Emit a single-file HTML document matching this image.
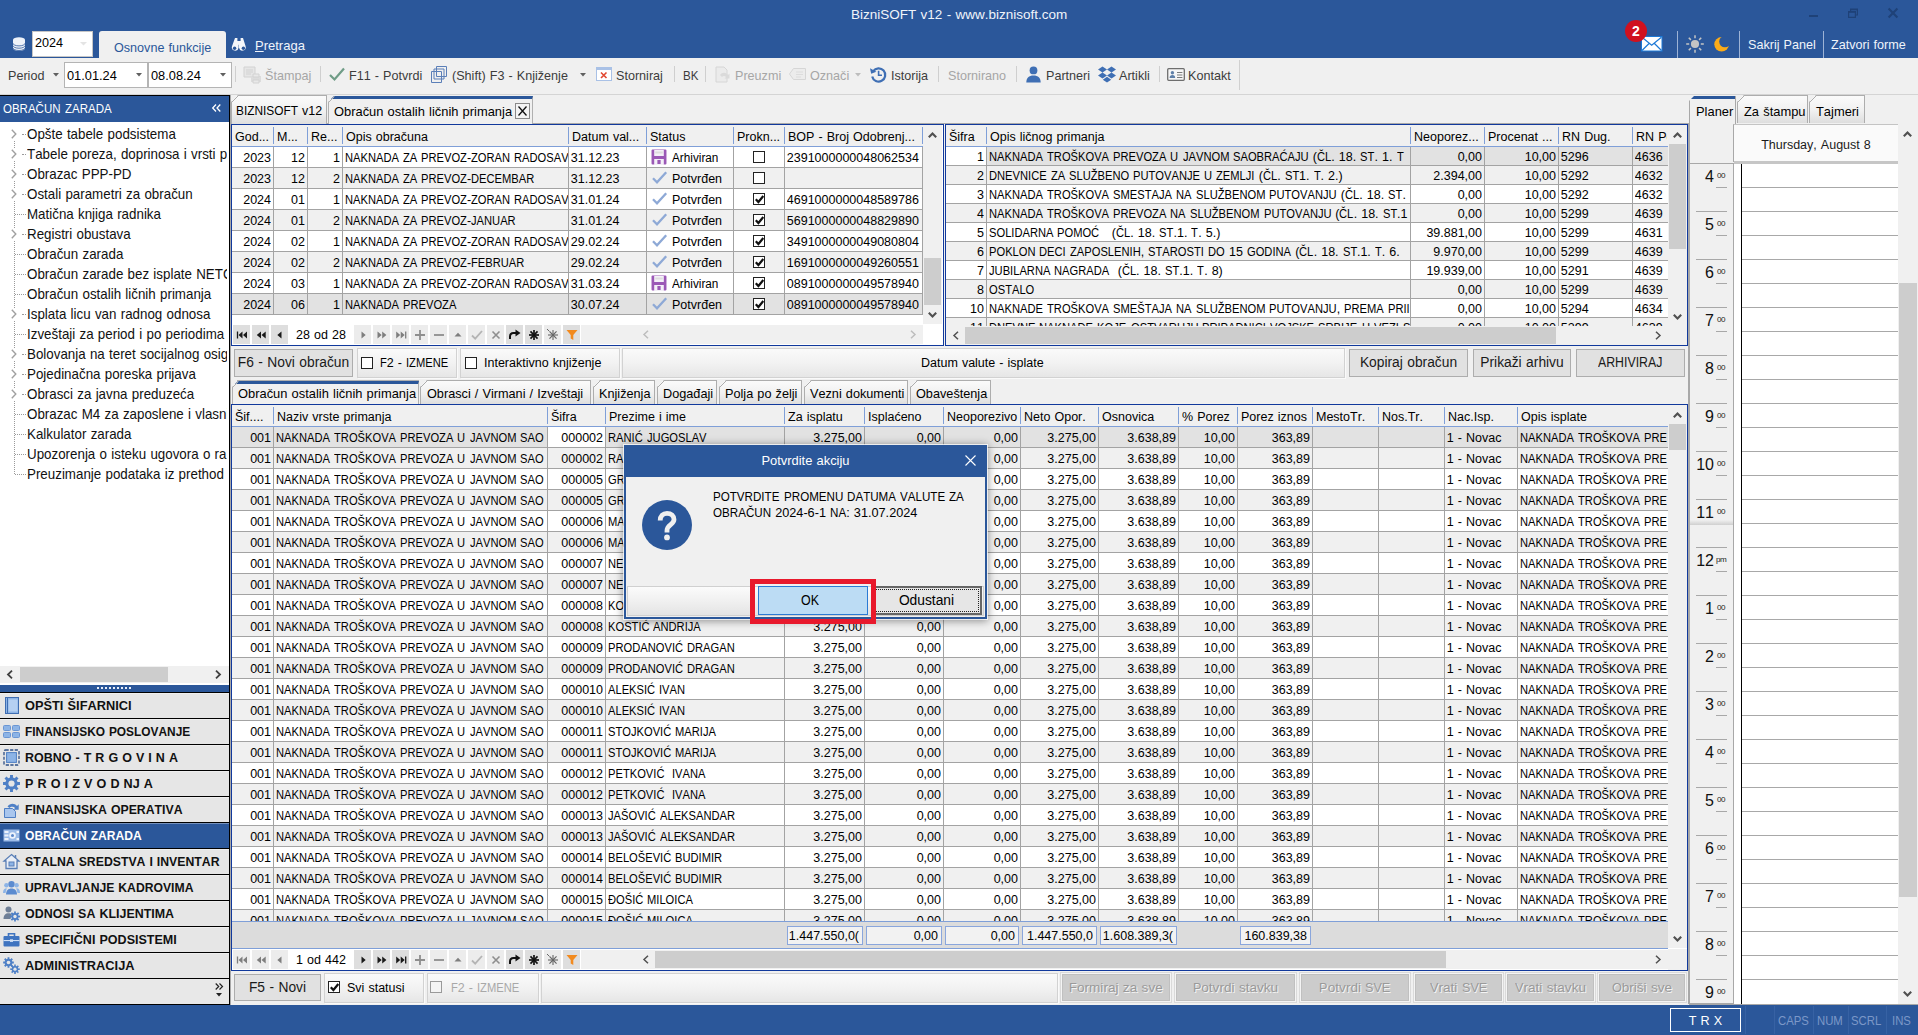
<!DOCTYPE html>
<html><head><meta charset="utf-8"><title>BizniSOFT v12</title><style>
html,body{margin:0;padding:0;}
body{width:1918px;height:1035px;overflow:hidden;background:#f0f0f0;font-family:"Liberation Sans",sans-serif;font-size:12.5px;color:#000;position:relative;font-kerning:none;word-spacing:0.6px;}
div{position:absolute;box-sizing:border-box;white-space:pre;}
.t{line-height:16px;height:16px;}
.w{display:inline-block;position:static;vertical-align:baseline;white-space:pre;}
.v{display:inline-block;position:static;transform-origin:0 50%;white-space:pre;}
.c{overflow:hidden;line-height:20px;}
.r{text-align:right;}
svg{position:absolute;overflow:visible;}
</style></head><body>
<div style="left:0px;top:0px;width:1918px;height:58px;background:#2b579a;"></div>
<div style="left:851px;top:4.92px;line-height:20px;height:20px;font-size:13.5px;color:#f0f4fa;">BizniSOFT v12 - www.biznisoft.com</div>
<div style="left:1809px;top:15px;width:9px;height:2px;background:#1f4278;"></div>
<svg style="left:1848px;top:8px" width="10" height="10" viewBox="0 0 10 10"><path d="M0.600 3.600h6.800v5.800h-6.800z M2.600 3.500v-2.300h6.800v5.800h-2" fill="none" stroke="#1f4278" stroke-width="1.200"/><path d="M0.600 4h6.800 M2.600 1.600h6.800" stroke="#1f4278" stroke-width="1.400"/></svg>
<svg style="left:1888px;top:8px" width="10" height="10" viewBox="0 0 10 10"><path d="M0.600 0.600l8.800 8.800 M9.400 0.600l-8.800 8.800" fill="none" stroke="#1f4278" stroke-width="2.100"/></svg>
<svg style="left:12px;top:37px" width="14" height="14.5" viewBox="0 0 14 14.5"><path d="M1 2.800A6 2.600 0 0 1 13 2.800V11.300A6 2.600 0 0 1 1 11.300Z" fill="#eef2f9"/><path d="M1 6.300A6 2.600 0 0 0 13 6.300M1 8.600A6 2.600 0 0 0 13 8.600M1 10.900A6 2.600 0 0 0 13 10.900" fill="none" stroke="#2b579a" stroke-width="0.800"/></svg>
<div style="left:32px;top:31px;width:61px;height:26px;background:#fff;border:1px solid #c6c6c6;"></div>
<div style="left:35px;top:32.63px;line-height:20px;height:20px;font-size:12.6px;color:#000;">2024</div>
<svg style="left:80px;top:42px" width="7" height="4" viewBox="0 0 7 4"><path d="M0 0h7l-3.5 3.5z" fill="#e4e4e4"/></svg>
<div style="left:99px;top:31px;width:127px;height:28px;background:#f0f0f0;border-radius:3px 3px 0 0;"></div>
<div style="left:114px;top:37.63px;line-height:20px;height:20px;font-size:12.6px;color:#2b579a;">Osnovne funkcije</div>
<svg style="left:231px;top:38px" width="16" height="14" viewBox="0 0 16 14"><path d="M4 0h2.4v3h3.2v-3h2.4l2.6 8.2a3.4 3.4 0 1 1-6.6 1.6v-3h-0.4v3a3.4 3.4 0 1 1-6.6-1.6z" fill="#f4f6fa"/><circle cx="3.6" cy="10.2" r="1.7" fill="#2b579a"/><circle cx="12.4" cy="10.2" r="1.7" fill="#2b579a"/></svg>
<div style="left:255px;top:35.50px;line-height:20px;height:20px;font-size:13px;color:#f0f4fa;"><span style="text-decoration:underline">P</span>retraga</div>
<svg style="left:1640.5px;top:36px" width="21.5" height="15.5" viewBox="0 0 21.5 15.5"><rect x="0.5" y="0.5" width="20.5" height="14.5" fill="#fff" stroke="#1c78d6"/><path d="M1 1.300l9.700 8 9.700-8 M1 14.500l7.300-7.200 M20.500 14.500l-7.300-7.200" fill="none" stroke="#1c78d6" stroke-width="1.200"/></svg>
<div style="left:1625px;top:20px;width:22px;height:22px;border-radius:11px;background:#d0111f;"></div>
<div style="left:1625px;top:21.15px;line-height:20px;height:20px;font-size:14px;color:#fff;width:22px;text-align:center;font-weight:bold;">2</div>
<div style="left:1677px;top:31px;width:1px;height:27px;background:#9db3d6;"></div>
<div style="left:1739px;top:31px;width:1px;height:27px;background:#9db3d6;"></div>
<div style="left:1823px;top:31px;width:1px;height:27px;background:#9db3d6;"></div>
<svg style="left:1686px;top:35px" width="18" height="18" viewBox="0 0 18 18"><circle cx="9" cy="9" r="4.1" fill="#c4c4c4"/><line x1="14.80" y1="9.00" x2="17.80" y2="9.00" stroke="#c4c4c4" stroke-width="1.5"/><line x1="13.10" y1="13.10" x2="15.22" y2="15.22" stroke="#c4c4c4" stroke-width="1.5"/><line x1="9.00" y1="14.80" x2="9.00" y2="17.80" stroke="#c4c4c4" stroke-width="1.5"/><line x1="4.90" y1="13.10" x2="2.78" y2="15.22" stroke="#c4c4c4" stroke-width="1.5"/><line x1="3.20" y1="9.00" x2="0.20" y2="9.00" stroke="#c4c4c4" stroke-width="1.5"/><line x1="4.90" y1="4.90" x2="2.78" y2="2.78" stroke="#c4c4c4" stroke-width="1.5"/><line x1="9.00" y1="3.20" x2="9.00" y2="0.20" stroke="#c4c4c4" stroke-width="1.5"/><line x1="13.10" y1="4.90" x2="15.22" y2="2.78" stroke="#c4c4c4" stroke-width="1.5"/></svg>
<svg style="left:1713px;top:36px" width="18" height="17" viewBox="0 0 18 17"><circle cx="8.600" cy="8.300" r="7.300" fill="#fbab18"/><circle cx="11.900" cy="5.600" r="5.700" fill="#2b579a"/></svg>
<div style="left:1748px;top:35.13px;line-height:20px;height:20px;font-size:12.6px;color:#f0f4fa;">Sakrij Panel</div>
<div style="left:1831px;top:35.13px;line-height:20px;height:20px;font-size:12.6px;color:#f0f4fa;">Zatvori forme</div>
<div style="left:0px;top:58px;width:1918px;height:37px;background:#f0f0f0;border-bottom:1px solid #d4d4d4;"></div>
<div style="left:8px;top:65.63px;line-height:20px;height:20px;font-size:12.6px;color:#3c3c3c;">Period</div>
<svg style="left:53px;top:73px" width="6" height="4" viewBox="0 0 6 4"><path d="M0 0h6l-3 3.4z" fill="#606060"/></svg>
<div style="left:64px;top:62px;width:84px;height:26px;background:#fff;border:1px solid #b4b4b4;"></div>
<div style="left:148px;top:62px;width:84px;height:26px;background:#fff;border:1px solid #b4b4b4;"></div>
<div style="left:67px;top:65.56px;line-height:20px;height:20px;font-size:12.8px;color:#000;">01.01.24</div>
<svg style="left:136px;top:73px" width="6" height="4" viewBox="0 0 6 4"><path d="M0 0h6l-3 3.4z" fill="#606060"/></svg>
<div style="left:151px;top:65.56px;line-height:20px;height:20px;font-size:12.8px;color:#000;">08.08.24</div>
<svg style="left:220px;top:73px" width="6" height="4" viewBox="0 0 6 4"><path d="M0 0h6l-3 3.4z" fill="#606060"/></svg>
<div style="left:235px;top:66px;width:1px;height:16px;background:#cfcfcf;"></div>
<svg style="left:243px;top:66px" width="19" height="18" viewBox="0 0 19 18"><path d="M1 1h11v10h-11z" fill="#e6e6e6" stroke="#d2d2d2"/><path d="M3 4h7M3 6h7M3 8h5" stroke="#d2d2d2"/><path d="M8 10h10v6h-10z" fill="#dcdcdc"/><path d="M10 8h6v3h-6z M10 14h6v3h-6z" fill="#e8e8e8" stroke="#d2d2d2"/></svg>
<div style="left:265px;top:65.63px;line-height:20px;height:20px;font-size:12.6px;color:#a6a6a6;">Štampaj</div>
<div style="left:320px;top:66px;width:1px;height:16px;background:#cfcfcf;"></div>
<svg style="left:329px;top:67px" width="16" height="14" viewBox="0 0 16 14"><path d="M1 8l4.5 4.5L15 1.5" fill="none" stroke="#6f9c86" stroke-width="2.2"/></svg>
<div style="left:349px;top:65.63px;line-height:20px;height:20px;font-size:12.6px;color:#3c3c3c;">F11 - Potvrdi</div>
<svg style="left:431px;top:66px" width="17" height="17" viewBox="0 0 17 17"><path d="M5.5 0.5h10v10h-10z M3 3h10v10h-10z M0.5 5.5h10v11h-10z" fill="#f0f0f0" stroke="#5b7fb8" stroke-width="1"/></svg>
<div style="left:452px;top:65.63px;line-height:20px;height:20px;font-size:12.6px;color:#3c3c3c;">(Shift) F3 - Knjiženje</div>
<svg style="left:580px;top:73px" width="6" height="4" viewBox="0 0 6 4"><path d="M0 0h6l-3 3.4z" fill="#606060"/></svg>
<svg style="left:596px;top:67px" width="16" height="14" viewBox="0 0 16 14"><rect x="0.5" y="0.5" width="15" height="13" fill="#fff" stroke="#a9c1e6"/><rect x="0.5" y="0.5" width="15" height="2.5" fill="#a9c1e6"/><path d="M5 5.5l5.5 5.5M10.5 5.5l-5.5 5.5" stroke="#e2472f" stroke-width="1.6"/></svg>
<div style="left:616px;top:65.63px;line-height:20px;height:20px;font-size:12.6px;color:#3c3c3c;">Storniraj</div>
<div style="left:674px;top:66px;width:1px;height:16px;background:#cfcfcf;"></div>
<div style="left:683px;top:65.63px;line-height:20px;height:20px;font-size:12.6px;color:#3c3c3c;"><span class="w" style="width:15.47px"><span class="v" style="transform:scaleX(0.92)">BK</span></span></div>
<div style="left:705px;top:66px;width:1px;height:16px;background:#cfcfcf;"></div>
<svg style="left:715px;top:66px" width="17" height="17" viewBox="0 0 17 17"><path d="M1 1h8l3 3v12h-11z" fill="#ebebeb" stroke="#d6d6d6"/><path d="M5 9c2-3 6-3 8 0l1.5-1.5v5h-5l1.5-1.5c-1-1.5-3-1.5-4 0z" fill="#dadada"/></svg>
<div style="left:735px;top:65.63px;line-height:20px;height:20px;font-size:12.6px;color:#a6a6a6;">Preuzmi</div>
<svg style="left:789px;top:68px" width="17" height="12" viewBox="0 0 17 12"><path d="M0.5 6l4-5.5h12v11h-12z" fill="#ececec" stroke="#d6d6d6"/><path d="M7 4h7M7 6.5h7M7 9h5" stroke="#dcdcdc"/></svg>
<div style="left:810px;top:65.63px;line-height:20px;height:20px;font-size:12.6px;color:#a6a6a6;">Označi</div>
<svg style="left:855px;top:73px" width="6" height="4" viewBox="0 0 6 4"><path d="M0 0h6l-3 3.4z" fill="#bdbdbd"/></svg>
<svg style="left:870px;top:66px" width="17" height="17" viewBox="0 0 17 17"><path d="M3.2 5.2a6.6 6.6 0 1 1-1 5.2" fill="none" stroke="#3f6fb4" stroke-width="2.2"/><path d="M0 2.2l1.2 5.6 5.2-2z" fill="#3f6fb4"/><path d="M8.6 4.8v4.4h3.4" fill="none" stroke="#3f6fb4" stroke-width="1.6"/></svg>
<div style="left:891px;top:65.63px;line-height:20px;height:20px;font-size:12.6px;color:#3c3c3c;">Istorija</div>
<div style="left:938px;top:66px;width:1px;height:16px;background:#cfcfcf;"></div>
<div style="left:948px;top:65.63px;line-height:20px;height:20px;font-size:12.6px;color:#a6a6a6;">Stornirano</div>
<div style="left:1016px;top:66px;width:1px;height:16px;background:#cfcfcf;"></div>
<svg style="left:1026px;top:66px" width="15" height="17" viewBox="0 0 15 17"><circle cx="7.5" cy="4.4" r="3.9" fill="#3f6fb4"/><path d="M0.3 16.5c0-4.5 2.6-7 7.2-7s7.2 2.5 7.2 7z" fill="#3f6fb4"/></svg>
<div style="left:1046px;top:65.63px;line-height:20px;height:20px;font-size:12.6px;color:#3c3c3c;">Partneri</div>
<svg style="left:1098px;top:66px" width="18" height="17" viewBox="0 0 18 17"><path d="M4.5 0.5l4.5 3-4.5 3-4.5-3z M13.5 0.5l4.5 3-4.5 3-4.5-3z M4.5 6.5l4.5 3-4.5 3-4.5-3z M13.5 6.5l4.5 3-4.5 3-4.5-3z M9 10.8l4.2 2.9-4.2 2.9-4.2-2.9z" fill="#3f6fb4"/></svg>
<div style="left:1119px;top:65.63px;line-height:20px;height:20px;font-size:12.6px;color:#3c3c3c;">Artikli</div>
<div style="left:1159px;top:66px;width:1px;height:16px;background:#cfcfcf;"></div>
<svg style="left:1167px;top:68px" width="18" height="13" viewBox="0 0 18 13"><rect x="0.7" y="0.7" width="16.6" height="11.6" rx="1" fill="#f6f6f6" stroke="#6e6e6e" stroke-width="1.3"/><circle cx="5.4" cy="4.8" r="1.7" fill="#5f7fa8"/><path d="M2.6 10c0-2.2 1.1-3 2.8-3s2.8 0.8 2.8 3z" fill="#5f7fa8"/><path d="M10 4.500h5.400M10 7h5.400M10 9.500h5.400" stroke="#7a7a7a" stroke-width="1.100"/></svg>
<div style="left:1188px;top:65.63px;line-height:20px;height:20px;font-size:12.6px;color:#3c3c3c;">Kontakt</div>
<div style="left:1239px;top:60px;width:1px;height:30px;background:#d0d0d0;"></div>
<div style="left:0px;top:1005px;width:1918px;height:30px;background:#2b579a;"></div>
<div style="left:1670px;top:1008px;width:71px;height:24px;border:1px solid #fff;"></div>
<div style="left:1670px;top:1010.63px;line-height:20px;height:20px;font-size:12.6px;color:#fff;width:71px;text-align:center;">T R X</div>
<div style="left:1745px;top:1006px;width:1px;height:28px;background:#3762a4;"></div>
<div style="left:1774px;top:1006px;width:1px;height:28px;background:#3762a4;"></div>
<div style="left:1813px;top:1006px;width:1px;height:28px;background:#3762a4;"></div>
<div style="left:1848px;top:1006px;width:1px;height:28px;background:#3762a4;"></div>
<div style="left:1886px;top:1006px;width:1px;height:28px;background:#3762a4;"></div>
<div style="left:1778px;top:1010.77px;line-height:20px;height:20px;font-size:12.2px;color:#7c98c8;"><span class="w" style="width:30.88px"><span class="v" style="transform:scaleX(0.93)">CAPS</span></span></div>
<div style="left:1817px;top:1010.77px;line-height:20px;height:20px;font-size:12.2px;color:#7c98c8;"><span class="w" style="width:25.82px"><span class="v" style="transform:scaleX(0.93)">NUM</span></span></div>
<div style="left:1851px;top:1010.77px;line-height:20px;height:20px;font-size:12.2px;color:#7c98c8;"><span class="w" style="width:30.24px"><span class="v" style="transform:scaleX(0.93)">SCRL</span></span></div>
<div style="left:1891.5px;top:1010.77px;line-height:20px;height:20px;font-size:12.2px;color:#7c98c8;"><span class="w" style="width:18.91px"><span class="v" style="transform:scaleX(0.93)">INS</span></span></div>
<div style="left:0px;top:95px;width:230px;height:910px;background:#fff;border-right:1px solid #000;"></div>
<div style="left:0px;top:95px;width:230px;height:1px;background:#000;"></div>
<div style="left:0px;top:96px;width:229px;height:26px;background:#2b579a;"></div>
<div style="left:3px;top:98.50px;line-height:20px;height:20px;font-size:13px;color:#fff;"><span class="w" style="width:57.54px"><span class="v" style="transform:scaleX(0.885)">OBRAČUN</span></span> <span class="w" style="width:46.67px"><span class="v" style="transform:scaleX(0.885)">ZARADA</span></span></div>
<svg style="left:212px;top:104px" width="9" height="8" viewBox="0 0 9 8"><path d="M4 0.5l-3.3 3.5 3.3 3.5M8.3 0.5l-3.3 3.5 3.3 3.5" fill="none" stroke="#fff" stroke-width="1.3"/></svg>
<div style="left:0;top:122px;width:227px;height:544px;overflow:hidden;">
<div style="left:14px;top:12px;width:1px;height:340px;border-left:1px dotted #9a9a9a;"></div>
<div style="left:9px;top:6px;width:10px;height:12px;background:#fff;"></div>
<svg style="left:11px;top:7px" width="6" height="10" viewBox="0 0 6 10"><path d="M0.8 0.8l4 4.2-4 4.2" fill="none" stroke="#a0a0a0" stroke-width="1.4"/></svg>
<div style="left:22px;top:12px;width:4px;height:1px;border-top:1px dotted #9a9a9a;"></div>
<div style="left:27px;top:1.64px;line-height:20px;height:20px;font-size:14.6px;color:#111;transform:scaleX(.915);transform-origin:0 50%;">Opšte tabele podsistema</div>
<div style="left:9px;top:26px;width:10px;height:12px;background:#fff;"></div>
<svg style="left:11px;top:27px" width="6" height="10" viewBox="0 0 6 10"><path d="M0.8 0.8l4 4.2-4 4.2" fill="none" stroke="#a0a0a0" stroke-width="1.4"/></svg>
<div style="left:22px;top:32px;width:4px;height:1px;border-top:1px dotted #9a9a9a;"></div>
<div style="left:27px;top:21.64px;line-height:20px;height:20px;font-size:14.6px;color:#111;transform:scaleX(.915);transform-origin:0 50%;">Tabele poreza, doprinosa i vrsti p</div>
<div style="left:9px;top:46px;width:10px;height:12px;background:#fff;"></div>
<svg style="left:11px;top:47px" width="6" height="10" viewBox="0 0 6 10"><path d="M0.8 0.8l4 4.2-4 4.2" fill="none" stroke="#a0a0a0" stroke-width="1.4"/></svg>
<div style="left:22px;top:52px;width:4px;height:1px;border-top:1px dotted #9a9a9a;"></div>
<div style="left:27px;top:41.64px;line-height:20px;height:20px;font-size:14.6px;color:#111;transform:scaleX(.915);transform-origin:0 50%;">Obrazac PPP-PD</div>
<div style="left:9px;top:66px;width:10px;height:12px;background:#fff;"></div>
<svg style="left:11px;top:67px" width="6" height="10" viewBox="0 0 6 10"><path d="M0.8 0.8l4 4.2-4 4.2" fill="none" stroke="#a0a0a0" stroke-width="1.4"/></svg>
<div style="left:22px;top:72px;width:4px;height:1px;border-top:1px dotted #9a9a9a;"></div>
<div style="left:27px;top:61.64px;line-height:20px;height:20px;font-size:14.6px;color:#111;transform:scaleX(.915);transform-origin:0 50%;">Ostali parametri za obračun</div>
<div style="left:15px;top:92px;width:11px;height:1px;border-top:1px dotted #9a9a9a;"></div>
<div style="left:27px;top:81.64px;line-height:20px;height:20px;font-size:14.6px;color:#111;transform:scaleX(.915);transform-origin:0 50%;">Matična knjiga radnika</div>
<div style="left:9px;top:106px;width:10px;height:12px;background:#fff;"></div>
<svg style="left:11px;top:107px" width="6" height="10" viewBox="0 0 6 10"><path d="M0.8 0.8l4 4.2-4 4.2" fill="none" stroke="#a0a0a0" stroke-width="1.4"/></svg>
<div style="left:22px;top:112px;width:4px;height:1px;border-top:1px dotted #9a9a9a;"></div>
<div style="left:27px;top:101.64px;line-height:20px;height:20px;font-size:14.6px;color:#111;transform:scaleX(.915);transform-origin:0 50%;">Registri obustava</div>
<div style="left:15px;top:132px;width:11px;height:1px;border-top:1px dotted #9a9a9a;"></div>
<div style="left:27px;top:121.64px;line-height:20px;height:20px;font-size:14.6px;color:#111;transform:scaleX(.915);transform-origin:0 50%;">Obračun zarada</div>
<div style="left:15px;top:152px;width:11px;height:1px;border-top:1px dotted #9a9a9a;"></div>
<div style="left:27px;top:141.64px;line-height:20px;height:20px;font-size:14.6px;color:#111;transform:scaleX(.915);transform-origin:0 50%;">Obračun zarade bez isplate NETC</div>
<div style="left:15px;top:172px;width:11px;height:1px;border-top:1px dotted #9a9a9a;"></div>
<div style="left:27px;top:161.64px;line-height:20px;height:20px;font-size:14.6px;color:#111;transform:scaleX(.915);transform-origin:0 50%;">Obračun ostalih ličnih primanja</div>
<div style="left:9px;top:186px;width:10px;height:12px;background:#fff;"></div>
<svg style="left:11px;top:187px" width="6" height="10" viewBox="0 0 6 10"><path d="M0.8 0.8l4 4.2-4 4.2" fill="none" stroke="#a0a0a0" stroke-width="1.4"/></svg>
<div style="left:22px;top:192px;width:4px;height:1px;border-top:1px dotted #9a9a9a;"></div>
<div style="left:27px;top:181.64px;line-height:20px;height:20px;font-size:14.6px;color:#111;transform:scaleX(.915);transform-origin:0 50%;">Isplata licu van radnog odnosa</div>
<div style="left:15px;top:212px;width:11px;height:1px;border-top:1px dotted #9a9a9a;"></div>
<div style="left:27px;top:201.64px;line-height:20px;height:20px;font-size:14.6px;color:#111;transform:scaleX(.915);transform-origin:0 50%;">Izveštaji za period i po periodima</div>
<div style="left:9px;top:226px;width:10px;height:12px;background:#fff;"></div>
<svg style="left:11px;top:227px" width="6" height="10" viewBox="0 0 6 10"><path d="M0.8 0.8l4 4.2-4 4.2" fill="none" stroke="#a0a0a0" stroke-width="1.4"/></svg>
<div style="left:22px;top:232px;width:4px;height:1px;border-top:1px dotted #9a9a9a;"></div>
<div style="left:27px;top:221.64px;line-height:20px;height:20px;font-size:14.6px;color:#111;transform:scaleX(.915);transform-origin:0 50%;">Bolovanja na teret socijalnog osig</div>
<div style="left:9px;top:246px;width:10px;height:12px;background:#fff;"></div>
<svg style="left:11px;top:247px" width="6" height="10" viewBox="0 0 6 10"><path d="M0.8 0.8l4 4.2-4 4.2" fill="none" stroke="#a0a0a0" stroke-width="1.4"/></svg>
<div style="left:22px;top:252px;width:4px;height:1px;border-top:1px dotted #9a9a9a;"></div>
<div style="left:27px;top:241.64px;line-height:20px;height:20px;font-size:14.6px;color:#111;transform:scaleX(.915);transform-origin:0 50%;">Pojedinačna poreska prijava</div>
<div style="left:9px;top:266px;width:10px;height:12px;background:#fff;"></div>
<svg style="left:11px;top:267px" width="6" height="10" viewBox="0 0 6 10"><path d="M0.8 0.8l4 4.2-4 4.2" fill="none" stroke="#a0a0a0" stroke-width="1.4"/></svg>
<div style="left:22px;top:272px;width:4px;height:1px;border-top:1px dotted #9a9a9a;"></div>
<div style="left:27px;top:261.64px;line-height:20px;height:20px;font-size:14.6px;color:#111;transform:scaleX(.915);transform-origin:0 50%;">Obrasci za javna preduzeća</div>
<div style="left:15px;top:292px;width:11px;height:1px;border-top:1px dotted #9a9a9a;"></div>
<div style="left:27px;top:281.64px;line-height:20px;height:20px;font-size:14.6px;color:#111;transform:scaleX(.915);transform-origin:0 50%;">Obrazac M4 za zaposlene i vlasnik</div>
<div style="left:15px;top:312px;width:11px;height:1px;border-top:1px dotted #9a9a9a;"></div>
<div style="left:27px;top:301.64px;line-height:20px;height:20px;font-size:14.6px;color:#111;transform:scaleX(.915);transform-origin:0 50%;">Kalkulator zarada</div>
<div style="left:15px;top:332px;width:11px;height:1px;border-top:1px dotted #9a9a9a;"></div>
<div style="left:27px;top:321.64px;line-height:20px;height:20px;font-size:14.6px;color:#111;transform:scaleX(.915);transform-origin:0 50%;">Upozorenja o isteku ugovora o ra</div>
<div style="left:15px;top:352px;width:11px;height:1px;border-top:1px dotted #9a9a9a;"></div>
<div style="left:27px;top:341.64px;line-height:20px;height:20px;font-size:14.6px;color:#111;transform:scaleX(.915);transform-origin:0 50%;">Preuzimanje podataka iz prethod</div>
</div>
<div style="left:0px;top:666px;width:229px;height:17px;background:#f0f0f0;"></div>
<div style="left:20px;top:667px;width:148px;height:15px;background:#cdcdcd;"></div>
<svg style="left:7px;top:670px" width="6" height="9" viewBox="0 0 6 9"><path d="M5 0.700l-4 3.800 4 3.800" fill="none" stroke="#404040" stroke-width="1.800"/></svg>
<svg style="left:215px;top:670px" width="6" height="9" viewBox="0 0 6 9"><path d="M1 0.700l4 3.800-4 3.800" fill="none" stroke="#404040" stroke-width="1.800"/></svg>
<div style="left:0px;top:683px;width:229px;height:2px;background:#fff;"></div>
<div style="left:0px;top:685px;width:229px;height:7px;background:#2b579a;"></div>
<div style="left:97px;top:687px;width:2px;height:2px;background:#e8eef8;"></div>
<div style="left:101px;top:687px;width:2px;height:2px;background:#e8eef8;"></div>
<div style="left:105px;top:687px;width:2px;height:2px;background:#e8eef8;"></div>
<div style="left:109px;top:687px;width:2px;height:2px;background:#e8eef8;"></div>
<div style="left:113px;top:687px;width:2px;height:2px;background:#e8eef8;"></div>
<div style="left:117px;top:687px;width:2px;height:2px;background:#e8eef8;"></div>
<div style="left:121px;top:687px;width:2px;height:2px;background:#e8eef8;"></div>
<div style="left:125px;top:687px;width:2px;height:2px;background:#e8eef8;"></div>
<div style="left:129px;top:687px;width:2px;height:2px;background:#e8eef8;"></div>
<div style="left:0px;top:692px;width:229px;height:26px;background:#e6e6e6;border-top:1px solid #000;box-shadow:inset 0 1px 0 rgba(255,255,255,.35);"></div>
<svg style="left:3px;top:697px" width="17" height="17" viewBox="0 0 17 17"><rect x="2.5" y="0.5" width="13" height="16" fill="#8db4e6" stroke="#3e6db2"/><rect x="5.5" y="2.5" width="9" height="12" fill="#b5d0f2"/><path d="M4.5 1v15" stroke="#3e6db2"/></svg>
<div style="left:25px;top:695.56px;line-height:20px;height:20px;font-size:12.8px;color:#111;font-weight:bold;transform:scaleX(1.0);transform-origin:0 50%;">OPŠTI ŠIFARNICI</div>
<div style="left:0px;top:718px;width:229px;height:26px;background:#e6e6e6;border-top:1px solid #000;box-shadow:inset 0 1px 0 rgba(255,255,255,.35);"></div>
<svg style="left:3px;top:723px" width="17" height="17" viewBox="0 0 17 17"><rect x="0.5" y="2.5" width="7" height="5" rx="1" fill="#8db4e6" stroke="#6a96d4"/><rect x="9.5" y="2.5" width="7" height="5" rx="1" fill="#8db4e6" stroke="#6a96d4"/><rect x="0.5" y="9.5" width="7" height="5" rx="1" fill="#8db4e6" stroke="#6a96d4"/><rect x="9.5" y="9.5" width="7" height="5" rx="1" fill="#8db4e6" stroke="#6a96d4"/></svg>
<div style="left:25px;top:721.56px;line-height:20px;height:20px;font-size:12.8px;color:#111;font-weight:bold;transform:scaleX(0.93);transform-origin:0 50%;">FINANSIJSKO POSLOVANJE</div>
<div style="left:0px;top:744px;width:229px;height:26px;background:#e6e6e6;border-top:1px solid #000;box-shadow:inset 0 1px 0 rgba(255,255,255,.35);"></div>
<svg style="left:3px;top:749px" width="17" height="17" viewBox="0 0 17 17"><rect x="1" y="1" width="15" height="15" rx="1.5" fill="none" stroke="#2e4f86" stroke-width="1.3" stroke-dasharray="3.2 1.4"/><rect x="3.6" y="3.6" width="9.8" height="9.8" fill="#8db4e6" stroke="#4f7fc4"/></svg>
<div style="left:25px;top:747.56px;line-height:20px;height:20px;font-size:12.8px;color:#111;font-weight:bold;transform:scaleX(0.975);transform-origin:0 50%;">ROBNO - T R G O V I N A</div>
<div style="left:0px;top:770px;width:229px;height:26px;background:#e6e6e6;border-top:1px solid #000;box-shadow:inset 0 1px 0 rgba(255,255,255,.35);"></div>
<svg style="left:3px;top:775px" width="17" height="17" viewBox="0 0 17 17"><polygon points="16.97,7.02 16.97,9.98 14.53,9.95 13.79,11.74 15.54,13.45 13.45,15.54 11.74,13.79 9.95,14.53 9.98,16.97 7.02,16.97 7.05,14.53 5.26,13.79 3.55,15.54 1.46,13.45 3.21,11.74 2.47,9.95 0.03,9.98 0.03,7.02 2.47,7.05 3.21,5.26 1.46,3.55 3.55,1.46 5.26,3.21 7.05,2.47 7.02,0.03 9.98,0.03 9.95,2.47 11.74,3.21 13.45,1.46 15.54,3.55 13.79,5.26 14.53,7.05" fill="#4f80c6"/><circle cx="8.5" cy="8.5" r="3.1" fill="#e6e6e6"/></svg>
<div style="left:25px;top:773.56px;line-height:20px;height:20px;font-size:12.8px;color:#111;font-weight:bold;transform:scaleX(0.985);transform-origin:0 50%;">P R O I Z V O D NJ A</div>
<div style="left:0px;top:796px;width:229px;height:26px;background:#e6e6e6;border-top:1px solid #000;box-shadow:inset 0 1px 0 rgba(255,255,255,.35);"></div>
<svg style="left:3px;top:801px" width="17" height="17" viewBox="0 0 17 17"><path d="M1.5 7.5h8l3 3v6h-11z" fill="#a9c6ee" stroke="#4f7fc4"/><path d="M4.5 5.5c2.500-3.500 7-3.500 9.500-0.500l1.700-1.700v5.500h-5.500l1.900-1.900c-1.800-1.800-4.300-1.600-5.600 0.200z" fill="#4f80c6"/></svg>
<div style="left:25px;top:799.56px;line-height:20px;height:20px;font-size:12.8px;color:#111;font-weight:bold;transform:scaleX(0.96);transform-origin:0 50%;">FINANSIJSKA OPERATIVA</div>
<div style="left:0px;top:822px;width:229px;height:26px;background:#2b579a;border-top:1px solid #000;box-shadow:inset 0 1px 0 rgba(255,255,255,.35);"></div>
<svg style="left:3px;top:827px" width="17" height="17" viewBox="0 0 17 17"><rect x="0.5" y="2.5" width="16" height="12" fill="#9dbce8"/><rect x="1.5" y="4" width="4" height="2" fill="#eef3fb"/><rect x="1.5" y="7.500" width="4" height="2" fill="#eef3fb"/><rect x="1.5" y="11" width="4" height="2" fill="#eef3fb"/><circle cx="9.500" cy="8.500" r="3.300" fill="#eef3fb"/><circle cx="9.500" cy="8.500" r="1.500" fill="#5a86c8"/><rect x="13.500" y="4" width="2.500" height="2" fill="#eef3fb"/><rect x="13.500" y="11" width="2.500" height="2" fill="#eef3fb"/></svg>
<div style="left:25px;top:825.56px;line-height:20px;height:20px;font-size:12.8px;color:#fff;font-weight:bold;transform:scaleX(0.944);transform-origin:0 50%;">OBRAČUN ZARADA</div>
<div style="left:0px;top:848px;width:229px;height:26px;background:#e6e6e6;border-top:1px solid #000;box-shadow:inset 0 1px 0 rgba(255,255,255,.35);"></div>
<svg style="left:3px;top:853px" width="17" height="17" viewBox="0 0 17 17"><path d="M8.500 1.500l7.500 6.500h-2v7.500h-11v-7.500h-2z" fill="#e9eef6" stroke="#5a7fb6" stroke-width="1.300"/><path d="M12.500 2v3" stroke="#5a7fb6" stroke-width="1.500"/><rect x="6" y="9" width="5" height="4" fill="#8db4e6" stroke="#5a7fb6"/></svg>
<div style="left:25px;top:851.56px;line-height:20px;height:20px;font-size:12.8px;color:#111;font-weight:bold;transform:scaleX(0.958);transform-origin:0 50%;">STALNA SREDSTVA I INVENTAR</div>
<div style="left:0px;top:874px;width:229px;height:26px;background:#e6e6e6;border-top:1px solid #000;box-shadow:inset 0 1px 0 rgba(255,255,255,.35);"></div>
<svg style="left:3px;top:879px" width="17" height="17" viewBox="0 0 17 17"><circle cx="8.500" cy="5.200" r="3.200" fill="#5b8bd0"/><path d="M3 15.500c0-4 2.300-6 5.500-6s5.500 2 5.500 6z" fill="#5b8bd0"/><circle cx="3.400" cy="6.200" r="2.200" fill="#8db4e6"/><circle cx="13.600" cy="6.200" r="2.200" fill="#8db4e6"/><path d="M0 14c0-3.500 1.500-4.800 3.800-4.800l-1.300 4.800z M17 14c0-3.500-1.500-4.800-3.800-4.800l1.300 4.800z" fill="#8db4e6"/></svg>
<div style="left:25px;top:877.56px;line-height:20px;height:20px;font-size:12.8px;color:#111;font-weight:bold;transform:scaleX(0.952);transform-origin:0 50%;">UPRAVLJANJE KADROVIMA</div>
<div style="left:0px;top:900px;width:229px;height:26px;background:#e6e6e6;border-top:1px solid #000;box-shadow:inset 0 1px 0 rgba(255,255,255,.35);"></div>
<svg style="left:3px;top:905px" width="17" height="17" viewBox="0 0 17 17"><circle cx="5.500" cy="4.500" r="3" fill="#6f7f96"/><path d="M0.500 14c0-4 2-5.800 5-5.800 1.500 0 2.600 0.400 3.400 1.200l-1.400 4.600z" fill="#6f7f96"/><polygon points="17.12,10.61 17.12,12.39 15.60,12.36 15.15,13.43 16.25,14.49 14.99,15.75 13.93,14.65 12.86,15.10 12.89,16.62 11.11,16.62 11.14,15.10 10.07,14.65 9.01,15.75 7.75,14.49 8.85,13.43 8.40,12.36 6.88,12.39 6.88,10.61 8.40,10.64 8.85,9.57 7.75,8.51 9.01,7.25 10.07,8.35 11.14,7.90 11.11,6.38 12.89,6.38 12.86,7.90 13.93,8.35 14.99,7.25 16.25,8.51 15.15,9.57 15.60,10.64" fill="#4f80c6"/><circle cx="12" cy="11.5" r="1.7" fill="#e6e6e6"/></svg>
<div style="left:25px;top:903.56px;line-height:20px;height:20px;font-size:12.8px;color:#111;font-weight:bold;transform:scaleX(0.972);transform-origin:0 50%;">ODNOSI SA KLIJENTIMA</div>
<div style="left:0px;top:926px;width:229px;height:26px;background:#e6e6e6;border-top:1px solid #000;box-shadow:inset 0 1px 0 rgba(255,255,255,.35);"></div>
<svg style="left:3px;top:931px" width="17" height="17" viewBox="0 0 17 17"><rect x="0.500" y="5" width="16" height="10.500" rx="1" fill="#3f74c0"/><path d="M5.500 5v-2.300h6v2.300" fill="none" stroke="#3f74c0" stroke-width="1.600"/><rect x="0.500" y="9" width="16" height="1.100" fill="#cfe0f6"/><rect x="7" y="8.300" width="3" height="2.600" fill="#cfe0f6"/></svg>
<div style="left:25px;top:929.56px;line-height:20px;height:20px;font-size:12.8px;color:#111;font-weight:bold;transform:scaleX(0.98);transform-origin:0 50%;">SPECIFIČNI PODSISTEMI</div>
<div style="left:0px;top:952px;width:229px;height:26px;background:#e6e6e6;border-top:1px solid #000;box-shadow:inset 0 1px 0 rgba(255,255,255,.35);"></div>
<svg style="left:3px;top:957px" width="17" height="17" viewBox="0 0 17 17"><polygon points="10.82,4.57 10.82,6.43 9.29,6.41 8.83,7.54 9.92,8.61 8.61,9.92 7.54,8.83 6.41,9.29 6.43,10.82 4.57,10.82 4.59,9.29 3.46,8.83 2.39,9.92 1.08,8.61 2.17,7.54 1.71,6.41 0.18,6.43 0.18,4.57 1.71,4.59 2.17,3.46 1.08,2.39 2.39,1.08 3.46,2.17 4.59,1.71 4.57,0.18 6.43,0.18 6.41,1.71 7.54,2.17 8.61,1.08 9.92,2.39 8.83,3.46 9.29,4.59" fill="#4f80c6"/><circle cx="5.5" cy="5.5" r="1.8" fill="#e6e6e6"/><polygon points="16.73,11.37 16.73,13.03 15.31,12.99 14.90,13.98 15.93,14.96 14.76,16.13 13.78,15.10 12.79,15.51 12.83,16.93 11.17,16.93 11.21,15.51 10.22,15.10 9.24,16.13 8.07,14.96 9.10,13.98 8.69,12.99 7.27,13.03 7.27,11.37 8.69,11.41 9.10,10.42 8.07,9.44 9.24,8.27 10.22,9.30 11.21,8.89 11.17,7.47 12.83,7.47 12.79,8.89 13.78,9.30 14.76,8.27 15.93,9.44 14.90,10.42 15.31,11.41" fill="#4f80c6"/><circle cx="12" cy="12.2" r="1.6" fill="#e6e6e6"/></svg>
<div style="left:25px;top:955.56px;line-height:20px;height:20px;font-size:12.8px;color:#111;font-weight:bold;transform:scaleX(1.0);transform-origin:0 50%;">ADMINISTRACIJA</div>
<div style="left:0px;top:978px;width:229px;height:27px;background:#e8e8e8;border-top:1px solid #000;border-bottom:1px solid #000;"></div>
<div style="left:230px;top:95px;width:1px;height:910px;background:#a8a8a8;"></div>
<svg style="left:215px;top:983px" width="8" height="7" viewBox="0 0 8 7"><path d="M0.700 0.500l3 3-3 3M4.500 0.500l3 3-3 3" fill="none" stroke="#222" stroke-width="1.200"/></svg>
<svg style="left:216px;top:993px" width="6" height="4" viewBox="0 0 6 4"><path d="M0 0h6l-3 3.500z" fill="#222"/></svg>
<div style="left:231px;top:123px;width:1458px;height:1px;background:#a8a8a8;"></div>
<div style="left:231px;top:95px;width:96px;height:29px;background:linear-gradient(#fbfbfb,#f0f0f0 55%,#dedede);border:1px solid #adadad;border-bottom:none;clip-path:polygon(7px 0,100% 0,100% 100%,0 100%,0 7px);"></div>
<svg style="left:231px;top:95px" width="8" height="8"><path d="M0.500 7.500l7-7" stroke="#adadad" fill="none"/></svg>
<div style="left:236px;top:101.47px;line-height:20px;height:20px;font-size:12.5px;color:#000;"><span class="w" style="width:62.02px"><span class="v" style="transform:scaleX(0.95)">BIZNISOFT</span></span> v12</div>
<div style="left:328px;top:96px;width:205px;height:29px;background:#f0f0f0;border:1px solid #b0b0b0;border-bottom:none;border-top:3px solid #2b579a;clip-path:polygon(6px 0,100% 0,100% 100%,0 100%,0 6px);"></div>
<svg style="left:328px;top:96px" width="7" height="7"><path d="M0.500 6.500l6-6" stroke="#b0b0b0" fill="none"/></svg>
<div style="left:334px;top:101.53px;line-height:20px;height:20px;font-size:12.9px;color:#000;">Obračun ostalih ličnih primanja</div>
<div style="left:515px;top:103px;width:15px;height:16px;border:1px solid #8a8a8a;background:#f4f4f4;"></div>
<svg style="left:518px;top:106px" width="9" height="10" viewBox="0 0 9 10"><path d="M0.500 0.500l8 9M8.500 0.500l-8 9" stroke="#111" stroke-width="1.300"/></svg>
<div style="left:231px;top:124px;width:713px;height:222px;border:1px solid #11399c;background:#fff;"></div>
<div style="left:232px;top:125px;width:691px;height:21px;background:#f0f0f0;"></div>
<div style="left:232px;top:146px;width:692px;height:1px;background:#7f9fd8;"></div>
<div class="c" style="left:235px;top:125px;width:38px;height:21px;line-height:25px;font-size:12.5px;">God...</div>
<div class="c" style="left:277px;top:125px;width:30px;height:21px;line-height:25px;font-size:12.5px;">M...</div>
<div class="c" style="left:311px;top:125px;width:31px;height:21px;line-height:25px;font-size:12.5px;">Re...</div>
<div class="c" style="left:346px;top:125px;width:222px;height:21px;line-height:25px;font-size:12.5px;">Opis obračuna</div>
<div class="c" style="left:572px;top:125px;width:74px;height:21px;line-height:25px;font-size:12.5px;">Datum val...</div>
<div class="c" style="left:650px;top:125px;width:83px;height:21px;line-height:25px;font-size:12.5px;">Status</div>
<div class="c" style="left:737px;top:125px;width:47px;height:21px;line-height:25px;font-size:12.5px;">Prokn...</div>
<div class="c" style="left:788px;top:125px;width:134px;height:21px;line-height:25px;font-size:12.5px;">BOP - Broj Odobrenj...</div>
<div style="left:273px;top:127px;width:1px;height:17px;background:#7f9fd8;"></div>
<div style="left:307px;top:127px;width:1px;height:17px;background:#7f9fd8;"></div>
<div style="left:342px;top:127px;width:1px;height:17px;background:#7f9fd8;"></div>
<div style="left:568px;top:127px;width:1px;height:17px;background:#7f9fd8;"></div>
<div style="left:646px;top:127px;width:1px;height:17px;background:#7f9fd8;"></div>
<div style="left:733px;top:127px;width:1px;height:17px;background:#7f9fd8;"></div>
<div style="left:784px;top:127px;width:1px;height:17px;background:#7f9fd8;"></div>
<div style="left:922px;top:127px;width:1px;height:17px;background:#7f9fd8;"></div>
<div style="left:232px;top:147px;width:691px;height:177px;overflow:hidden;">
<div style="left:0;top:0px;width:691px;height:21px;background:#fff;border-bottom:1px solid #a3a3a3;"></div>
<div class="c r" style="left:0px;top:0px;width:39px;height:20px;line-height:23px;">2023</div>
<div class="c r" style="left:42px;top:0px;width:31px;height:20px;line-height:23px;">12</div>
<div class="c r" style="left:76px;top:0px;width:32px;height:20px;line-height:23px;">1</div>
<div class="c" style="left:112.8px;top:0px;width:223.2px;height:20px;line-height:23px;"><span class="w" style="width:53.97px"><span class="v" style="transform:scaleX(0.893)">NAKNADA</span></span> <span class="w" style="width:14.27px"><span class="v" style="transform:scaleX(0.893)">ZA</span></span> <span class="w" style="width:45.91px"><span class="v" style="transform:scaleX(0.893)">PREVOZ</span></span>-<span class="w" style="width:39.07px"><span class="v" style="transform:scaleX(0.893)">ZORAN</span></span> <span class="w" style="width:54.60px"><span class="v" style="transform:scaleX(0.893)">RADOSAV</span></span></div>
<div class="c" style="left:338.8px;top:0px;width:75.2px;height:20px;line-height:23px;">31.12.23</div>
<div style="left:415px;top:0px;width:87px;height:21px;"><svg style="left:4px;top:2px" width="16" height="16" viewBox="0 0 15 16" preserveAspectRatio="none"><path d="M0.500 1.500a1 1 0 0 1 1-1h12a1 1 0 0 1 1 1v13a1 1 0 0 1-1 1h-12a1 1 0 0 1-1-1z" fill="#9b59b6"/><rect x="3" y="1" width="9" height="6" fill="#f4f0f8"/><rect x="4" y="2.500" width="7" height="2" fill="#ddd"/><rect x="3" y="10" width="9" height="6" fill="#f4f0f8"/><rect x="6" y="11" width="3" height="4" fill="#9b59b6"/></svg><div class="c" style="left:25px;top:0;height:20px;line-height:23px;transform:scaleX(.94);transform-origin:0 50%;">Arhiviran</div></div>
<div style="left:502px;top:0px;width:51px;height:21px;"><div style="left:19px;top:4px;width:12px;height:12px;border:1px solid #222;background:#fff;"></div></div>
<div class="c" style="left:554.8px;top:0px;width:135.2px;height:20px;line-height:23px;">2391000000048062534</div>
<div style="left:0;top:21px;width:691px;height:21px;background:#f0f0f0;border-bottom:1px solid #a3a3a3;"></div>
<div class="c r" style="left:0px;top:21px;width:39px;height:20px;line-height:23px;">2023</div>
<div class="c r" style="left:42px;top:21px;width:31px;height:20px;line-height:23px;">12</div>
<div class="c r" style="left:76px;top:21px;width:32px;height:20px;line-height:23px;">2</div>
<div class="c" style="left:112.8px;top:21px;width:223.2px;height:20px;line-height:23px;"><span class="w" style="width:53.97px"><span class="v" style="transform:scaleX(0.893)">NAKNADA</span></span> <span class="w" style="width:14.27px"><span class="v" style="transform:scaleX(0.893)">ZA</span></span> <span class="w" style="width:45.91px"><span class="v" style="transform:scaleX(0.893)">PREVOZ</span></span>-<span class="w" style="width:63.26px"><span class="v" style="transform:scaleX(0.893)">DECEMBAR</span></span></div>
<div class="c" style="left:338.8px;top:21px;width:75.2px;height:20px;line-height:23px;">31.12.23</div>
<div style="left:415px;top:21px;width:87px;height:21px;"><svg style="left:5px;top:3px" width="15" height="13" viewBox="0 0 15 13"><path d="M1 7.300l4 4L14.200 1.300" fill="none" stroke="#8ea9d6" stroke-width="2.300"/></svg><div class="c" style="left:25px;top:0;height:20px;line-height:23px;">Potvrđen</div></div>
<div style="left:502px;top:21px;width:51px;height:21px;"><div style="left:19px;top:4px;width:12px;height:12px;border:1px solid #222;background:#fff;"></div></div>
<div class="c" style="left:554.8px;top:21px;width:135.2px;height:20px;line-height:23px;"></div>
<div style="left:0;top:42px;width:691px;height:21px;background:#fff;border-bottom:1px solid #a3a3a3;"></div>
<div class="c r" style="left:0px;top:42px;width:39px;height:20px;line-height:23px;">2024</div>
<div class="c r" style="left:42px;top:42px;width:31px;height:20px;line-height:23px;">01</div>
<div class="c r" style="left:76px;top:42px;width:32px;height:20px;line-height:23px;">1</div>
<div class="c" style="left:112.8px;top:42px;width:223.2px;height:20px;line-height:23px;"><span class="w" style="width:53.97px"><span class="v" style="transform:scaleX(0.893)">NAKNADA</span></span> <span class="w" style="width:14.27px"><span class="v" style="transform:scaleX(0.893)">ZA</span></span> <span class="w" style="width:45.91px"><span class="v" style="transform:scaleX(0.893)">PREVOZ</span></span>-<span class="w" style="width:39.07px"><span class="v" style="transform:scaleX(0.893)">ZORAN</span></span> <span class="w" style="width:54.60px"><span class="v" style="transform:scaleX(0.893)">RADOSAV</span></span></div>
<div class="c" style="left:338.8px;top:42px;width:75.2px;height:20px;line-height:23px;">31.01.24</div>
<div style="left:415px;top:42px;width:87px;height:21px;"><svg style="left:5px;top:3px" width="15" height="13" viewBox="0 0 15 13"><path d="M1 7.300l4 4L14.200 1.300" fill="none" stroke="#8ea9d6" stroke-width="2.300"/></svg><div class="c" style="left:25px;top:0;height:20px;line-height:23px;">Potvrđen</div></div>
<div style="left:502px;top:42px;width:51px;height:21px;"><div style="left:19px;top:4px;width:12px;height:12px;border:1px solid #222;background:#fff;"></div><svg style="left:20.5px;top:5.5px" width="9" height="9" viewBox="0 0 9 9"><path d="M0.800 4.200l2.600 2.800L8.300 1" fill="none" stroke="#111" stroke-width="2.200"/></svg></div>
<div class="c" style="left:554.8px;top:42px;width:135.2px;height:20px;line-height:23px;">4691000000048589786</div>
<div style="left:0;top:63px;width:691px;height:21px;background:#f0f0f0;border-bottom:1px solid #a3a3a3;"></div>
<div class="c r" style="left:0px;top:63px;width:39px;height:20px;line-height:23px;">2024</div>
<div class="c r" style="left:42px;top:63px;width:31px;height:20px;line-height:23px;">01</div>
<div class="c r" style="left:76px;top:63px;width:32px;height:20px;line-height:23px;">2</div>
<div class="c" style="left:112.8px;top:63px;width:223.2px;height:20px;line-height:23px;"><span class="w" style="width:53.97px"><span class="v" style="transform:scaleX(0.893)">NAKNADA</span></span> <span class="w" style="width:14.27px"><span class="v" style="transform:scaleX(0.893)">ZA</span></span> <span class="w" style="width:45.91px"><span class="v" style="transform:scaleX(0.893)">PREVOZ</span></span>-<span class="w" style="width:44.66px"><span class="v" style="transform:scaleX(0.893)">JANUAR</span></span></div>
<div class="c" style="left:338.8px;top:63px;width:75.2px;height:20px;line-height:23px;">31.01.24</div>
<div style="left:415px;top:63px;width:87px;height:21px;"><svg style="left:5px;top:3px" width="15" height="13" viewBox="0 0 15 13"><path d="M1 7.300l4 4L14.200 1.300" fill="none" stroke="#8ea9d6" stroke-width="2.300"/></svg><div class="c" style="left:25px;top:0;height:20px;line-height:23px;">Potvrđen</div></div>
<div style="left:502px;top:63px;width:51px;height:21px;"><div style="left:19px;top:4px;width:12px;height:12px;border:1px solid #222;background:#fff;"></div><svg style="left:20.5px;top:5.5px" width="9" height="9" viewBox="0 0 9 9"><path d="M0.800 4.200l2.600 2.800L8.300 1" fill="none" stroke="#111" stroke-width="2.200"/></svg></div>
<div class="c" style="left:554.8px;top:63px;width:135.2px;height:20px;line-height:23px;">5691000000048829890</div>
<div style="left:0;top:84px;width:691px;height:21px;background:#fff;border-bottom:1px solid #a3a3a3;"></div>
<div class="c r" style="left:0px;top:84px;width:39px;height:20px;line-height:23px;">2024</div>
<div class="c r" style="left:42px;top:84px;width:31px;height:20px;line-height:23px;">02</div>
<div class="c r" style="left:76px;top:84px;width:32px;height:20px;line-height:23px;">1</div>
<div class="c" style="left:112.8px;top:84px;width:223.2px;height:20px;line-height:23px;"><span class="w" style="width:53.97px"><span class="v" style="transform:scaleX(0.893)">NAKNADA</span></span> <span class="w" style="width:14.27px"><span class="v" style="transform:scaleX(0.893)">ZA</span></span> <span class="w" style="width:45.91px"><span class="v" style="transform:scaleX(0.893)">PREVOZ</span></span>-<span class="w" style="width:39.07px"><span class="v" style="transform:scaleX(0.893)">ZORAN</span></span> <span class="w" style="width:54.60px"><span class="v" style="transform:scaleX(0.893)">RADOSAV</span></span></div>
<div class="c" style="left:338.8px;top:84px;width:75.2px;height:20px;line-height:23px;">29.02.24</div>
<div style="left:415px;top:84px;width:87px;height:21px;"><svg style="left:5px;top:3px" width="15" height="13" viewBox="0 0 15 13"><path d="M1 7.300l4 4L14.200 1.300" fill="none" stroke="#8ea9d6" stroke-width="2.300"/></svg><div class="c" style="left:25px;top:0;height:20px;line-height:23px;">Potvrđen</div></div>
<div style="left:502px;top:84px;width:51px;height:21px;"><div style="left:19px;top:4px;width:12px;height:12px;border:1px solid #222;background:#fff;"></div><svg style="left:20.5px;top:5.5px" width="9" height="9" viewBox="0 0 9 9"><path d="M0.800 4.200l2.600 2.800L8.300 1" fill="none" stroke="#111" stroke-width="2.200"/></svg></div>
<div class="c" style="left:554.8px;top:84px;width:135.2px;height:20px;line-height:23px;">3491000000049080804</div>
<div style="left:0;top:105px;width:691px;height:21px;background:#f0f0f0;border-bottom:1px solid #a3a3a3;"></div>
<div class="c r" style="left:0px;top:105px;width:39px;height:20px;line-height:23px;">2024</div>
<div class="c r" style="left:42px;top:105px;width:31px;height:20px;line-height:23px;">02</div>
<div class="c r" style="left:76px;top:105px;width:32px;height:20px;line-height:23px;">2</div>
<div class="c" style="left:112.8px;top:105px;width:223.2px;height:20px;line-height:23px;"><span class="w" style="width:53.97px"><span class="v" style="transform:scaleX(0.893)">NAKNADA</span></span> <span class="w" style="width:14.27px"><span class="v" style="transform:scaleX(0.893)">ZA</span></span> <span class="w" style="width:45.91px"><span class="v" style="transform:scaleX(0.893)">PREVOZ</span></span>-<span class="w" style="width:53.34px"><span class="v" style="transform:scaleX(0.893)">FEBRUAR</span></span></div>
<div class="c" style="left:338.8px;top:105px;width:75.2px;height:20px;line-height:23px;">29.02.24</div>
<div style="left:415px;top:105px;width:87px;height:21px;"><svg style="left:5px;top:3px" width="15" height="13" viewBox="0 0 15 13"><path d="M1 7.300l4 4L14.200 1.300" fill="none" stroke="#8ea9d6" stroke-width="2.300"/></svg><div class="c" style="left:25px;top:0;height:20px;line-height:23px;">Potvrđen</div></div>
<div style="left:502px;top:105px;width:51px;height:21px;"><div style="left:19px;top:4px;width:12px;height:12px;border:1px solid #222;background:#fff;"></div><svg style="left:20.5px;top:5.5px" width="9" height="9" viewBox="0 0 9 9"><path d="M0.800 4.200l2.600 2.800L8.300 1" fill="none" stroke="#111" stroke-width="2.200"/></svg></div>
<div class="c" style="left:554.8px;top:105px;width:135.2px;height:20px;line-height:23px;">1691000000049260551</div>
<div style="left:0;top:126px;width:691px;height:21px;background:#fff;border-bottom:1px solid #a3a3a3;"></div>
<div class="c r" style="left:0px;top:126px;width:39px;height:20px;line-height:23px;">2024</div>
<div class="c r" style="left:42px;top:126px;width:31px;height:20px;line-height:23px;">03</div>
<div class="c r" style="left:76px;top:126px;width:32px;height:20px;line-height:23px;">1</div>
<div class="c" style="left:112.8px;top:126px;width:223.2px;height:20px;line-height:23px;"><span class="w" style="width:53.97px"><span class="v" style="transform:scaleX(0.893)">NAKNADA</span></span> <span class="w" style="width:14.27px"><span class="v" style="transform:scaleX(0.893)">ZA</span></span> <span class="w" style="width:45.91px"><span class="v" style="transform:scaleX(0.893)">PREVOZ</span></span>-<span class="w" style="width:39.07px"><span class="v" style="transform:scaleX(0.893)">ZORAN</span></span> <span class="w" style="width:54.60px"><span class="v" style="transform:scaleX(0.893)">RADOSAV</span></span></div>
<div class="c" style="left:338.8px;top:126px;width:75.2px;height:20px;line-height:23px;">31.03.24</div>
<div style="left:415px;top:126px;width:87px;height:21px;"><svg style="left:4px;top:2px" width="16" height="16" viewBox="0 0 15 16" preserveAspectRatio="none"><path d="M0.500 1.500a1 1 0 0 1 1-1h12a1 1 0 0 1 1 1v13a1 1 0 0 1-1 1h-12a1 1 0 0 1-1-1z" fill="#9b59b6"/><rect x="3" y="1" width="9" height="6" fill="#f4f0f8"/><rect x="4" y="2.500" width="7" height="2" fill="#ddd"/><rect x="3" y="10" width="9" height="6" fill="#f4f0f8"/><rect x="6" y="11" width="3" height="4" fill="#9b59b6"/></svg><div class="c" style="left:25px;top:0;height:20px;line-height:23px;transform:scaleX(.94);transform-origin:0 50%;">Arhiviran</div></div>
<div style="left:502px;top:126px;width:51px;height:21px;"><div style="left:19px;top:4px;width:12px;height:12px;border:1px solid #222;background:#fff;"></div><svg style="left:20.5px;top:5.5px" width="9" height="9" viewBox="0 0 9 9"><path d="M0.800 4.200l2.600 2.800L8.300 1" fill="none" stroke="#111" stroke-width="2.200"/></svg></div>
<div class="c" style="left:554.8px;top:126px;width:135.2px;height:20px;line-height:23px;">0891000000049578940</div>
<div style="left:0;top:147px;width:691px;height:21px;background:#e2e2e2;border-bottom:1px solid #a3a3a3;"></div>
<div class="c r" style="left:0px;top:147px;width:39px;height:20px;line-height:23px;">2024</div>
<div class="c r" style="left:42px;top:147px;width:31px;height:20px;line-height:23px;">06</div>
<div class="c r" style="left:76px;top:147px;width:32px;height:20px;line-height:23px;">1</div>
<div class="c" style="left:112.8px;top:147px;width:223.2px;height:20px;line-height:23px;"><span class="w" style="width:53.97px"><span class="v" style="transform:scaleX(0.893)">NAKNADA</span></span> <span class="w" style="width:53.36px"><span class="v" style="transform:scaleX(0.893)">PREVOZA</span></span></div>
<div class="c" style="left:338.8px;top:147px;width:75.2px;height:20px;line-height:23px;">30.07.24</div>
<div style="left:415px;top:147px;width:87px;height:21px;"><svg style="left:5px;top:3px" width="15" height="13" viewBox="0 0 15 13"><path d="M1 7.300l4 4L14.200 1.300" fill="none" stroke="#8ea9d6" stroke-width="2.300"/></svg><div class="c" style="left:25px;top:0;height:20px;line-height:23px;">Potvrđen</div></div>
<div style="left:502px;top:147px;width:51px;height:21px;"><div style="left:19px;top:4px;width:12px;height:12px;border:1px solid #222;background:#fff;"></div><svg style="left:20.5px;top:5.5px" width="9" height="9" viewBox="0 0 9 9"><path d="M0.800 4.200l2.600 2.800L8.300 1" fill="none" stroke="#111" stroke-width="2.200"/></svg></div>
<div class="c" style="left:554.8px;top:147px;width:135.2px;height:20px;line-height:23px;">0891000000049578940</div>
<div style="left:41px;top:0;width:1px;height:168px;background:#a3a3a3;"></div>
<div style="left:75px;top:0;width:1px;height:168px;background:#a3a3a3;"></div>
<div style="left:110px;top:0;width:1px;height:168px;background:#a3a3a3;"></div>
<div style="left:336px;top:0;width:1px;height:168px;background:#a3a3a3;"></div>
<div style="left:414px;top:0;width:1px;height:168px;background:#a3a3a3;"></div>
<div style="left:501px;top:0;width:1px;height:168px;background:#a3a3a3;"></div>
<div style="left:552px;top:0;width:1px;height:168px;background:#a3a3a3;"></div>
<div style="left:690px;top:0;width:1px;height:168px;background:#a3a3a3;"></div>
</div>
<div style="left:923px;top:125px;width:19px;height:199px;background:#f0f0f0;"></div>
<div style="left:924px;top:258px;width:17px;height:47px;background:#cdcdcd;"></div>
<svg style="left:928px;top:132px" width="9" height="6" viewBox="0 0 9 6"><path d="M0.800 5.200l3.700-3.800 3.700 3.800" fill="none" stroke="#505050" stroke-width="2.100"/></svg>
<svg style="left:928px;top:312px" width="9" height="6" viewBox="0 0 9 6"><path d="M0.800 0.800l3.700 3.800 3.700-3.800" fill="none" stroke="#505050" stroke-width="2.100"/></svg>
<div style="left:232px;top:325px;width:691px;height:19px;background:#fff;"></div>
<div style="left:233px;top:325px;width:17px;height:19px;background:#dedede;"></div>
<svg style="left:232.5px;top:324.5px" width="18" height="20" viewBox="0 0 18 20"><path d="M4.500 6.500v7" stroke="#1a1a1a" stroke-width="1.300"/><path d="M9.500 6.500v7l-4-3.500z M14 6.500v7l-4-3.500z" fill="#1a1a1a"/></svg>
<div style="left:252px;top:325px;width:17px;height:19px;background:#dedede;"></div>
<svg style="left:251.5px;top:324.5px" width="18" height="20" viewBox="0 0 18 20"><path d="M9 6.500v7l-4.200-3.500z M13.700 6.500v7l-4.200-3.500z" fill="#1a1a1a"/></svg>
<div style="left:271px;top:325px;width:17px;height:19px;background:#dedede;"></div>
<svg style="left:270.5px;top:324.5px" width="18" height="20" viewBox="0 0 18 20"><path d="M10.500 6.500v7l-4.200-3.500z" fill="#1a1a1a"/></svg>
<div style="left:296px;top:324.67px;line-height:20px;height:20px;font-size:12.5px;color:#000;">28 od 28</div>
<div style="left:354px;top:325px;width:17px;height:19px;background:#ececec;"></div>
<svg style="left:353.5px;top:324.5px" width="18" height="20" viewBox="0 0 18 20"><path d="M7.500 6.500v7l4.200-3.500z" fill="#7e7e7e"/></svg>
<div style="left:373px;top:325px;width:17px;height:19px;background:#ececec;"></div>
<svg style="left:372.5px;top:324.5px" width="18" height="20" viewBox="0 0 18 20"><path d="M4.500 6.500v7l4.200-3.500z M9.200 6.500v7l4.200-3.500z" fill="#7e7e7e"/></svg>
<div style="left:392px;top:325px;width:17px;height:19px;background:#ececec;"></div>
<svg style="left:391.5px;top:324.5px" width="18" height="20" viewBox="0 0 18 20"><path d="M13.700 6.500v7" stroke="#7e7e7e" stroke-width="1.300"/><path d="M4.200 6.500v7l4-3.500z M8.700 6.500v7l4-3.500z" fill="#7e7e7e"/></svg>
<div style="left:411px;top:325px;width:17px;height:19px;background:#ececec;"></div>
<svg style="left:410.5px;top:324.5px" width="18" height="20" viewBox="0 0 18 20"><path d="M9 5v10M4 10h10" stroke="#8e8e8e" stroke-width="1.800"/></svg>
<div style="left:430px;top:325px;width:17px;height:19px;background:#ececec;"></div>
<svg style="left:429.5px;top:324.5px" width="18" height="20" viewBox="0 0 18 20"><path d="M4 10h10" stroke="#8e8e8e" stroke-width="1.800"/></svg>
<div style="left:449px;top:325px;width:17px;height:19px;background:#ececec;"></div>
<svg style="left:448.5px;top:324.5px" width="18" height="20" viewBox="0 0 18 20"><path d="M5.500 11.500l3.500-3.800 3.500 3.800z" fill="#7e7e7e"/></svg>
<div style="left:468px;top:325px;width:17px;height:19px;background:#ececec;"></div>
<svg style="left:467.5px;top:324.5px" width="18" height="20" viewBox="0 0 18 20"><path d="M4 10.500l3.200 3.200L14 6" fill="none" stroke="#b4b4b4" stroke-width="1.800"/></svg>
<div style="left:487px;top:325px;width:17px;height:19px;background:#ececec;"></div>
<svg style="left:486.5px;top:324.5px" width="18" height="20" viewBox="0 0 18 20"><path d="M5.500 6.500l7 7M12.500 6.500l-7 7" stroke="#8e8e8e" stroke-width="1.600"/></svg>
<div style="left:506px;top:325px;width:17px;height:19px;background:#dedede;"></div>
<svg style="left:505.5px;top:324.5px" width="18" height="20" viewBox="0 0 18 20"><path d="M4 14v-2.500c0-2 1.500-3.500 3.500-3.500h3" fill="none" stroke="#111" stroke-width="2"/><path d="M9.500 4.500l5 3.500-5 3.500z" fill="#111"/></svg>
<div style="left:525px;top:325px;width:17px;height:19px;background:#dedede;"></div>
<svg style="left:524.5px;top:324.5px" width="18" height="20" viewBox="0 0 18 20"><line x1="9" y1="10" x2="14.00" y2="10.00" stroke="#111" stroke-width="1.700"/><line x1="9" y1="10" x2="12.54" y2="13.54" stroke="#111" stroke-width="1.700"/><line x1="9" y1="10" x2="9.00" y2="15.00" stroke="#111" stroke-width="1.700"/><line x1="9" y1="10" x2="5.46" y2="13.54" stroke="#111" stroke-width="1.700"/><line x1="9" y1="10" x2="4.00" y2="10.00" stroke="#111" stroke-width="1.700"/><line x1="9" y1="10" x2="5.46" y2="6.46" stroke="#111" stroke-width="1.700"/><line x1="9" y1="10" x2="9.00" y2="5.00" stroke="#111" stroke-width="1.700"/><line x1="9" y1="10" x2="12.54" y2="6.46" stroke="#111" stroke-width="1.700"/></svg>
<div style="left:544px;top:325px;width:17px;height:19px;background:#ececec;"></div>
<svg style="left:543.5px;top:324.5px" width="18" height="20" viewBox="0 0 18 20"><line x1="9" y1="10" x2="14.00" y2="10.00" stroke="#666" stroke-width="1.100"/><line x1="9" y1="10" x2="12.54" y2="13.54" stroke="#666" stroke-width="1.100"/><line x1="9" y1="10" x2="9.00" y2="15.00" stroke="#666" stroke-width="1.100"/><line x1="9" y1="10" x2="5.46" y2="13.54" stroke="#666" stroke-width="1.100"/><line x1="9" y1="10" x2="4.00" y2="10.00" stroke="#666" stroke-width="1.100"/><line x1="9" y1="10" x2="5.46" y2="6.46" stroke="#666" stroke-width="1.100"/><line x1="9" y1="10" x2="9.00" y2="5.00" stroke="#666" stroke-width="1.100"/><line x1="9" y1="10" x2="12.54" y2="6.46" stroke="#666" stroke-width="1.100"/><path d="M3 4l2 2" stroke="#666"/></svg>
<div style="left:563px;top:325px;width:17px;height:19px;background:#dedede;"></div>
<svg style="left:562.5px;top:324.5px" width="18" height="20" viewBox="0 0 18 20"><path d="M3.500 5h11l-4.200 5v5l-2.600-1.500v-3.500z" fill="#f28a1e"/></svg>
<div style="left:581px;top:325px;width:342px;height:19px;background:#f0f0f0;"></div>
<div style="left:636px;top:325px;width:287px;height:19px;background:#f0f0f0;"></div>
<svg style="left:643px;top:330px" width="6" height="9" viewBox="0 0 6 9"><path d="M5 0.700l-4 3.800 4 3.800" fill="none" stroke="#bdbdbd" stroke-width="1.500"/></svg>
<svg style="left:910px;top:330px" width="6" height="9" viewBox="0 0 6 9"><path d="M1 0.700l4 3.800-4 3.800" fill="none" stroke="#bdbdbd" stroke-width="1.500"/></svg>
<div style="left:945px;top:124px;width:743px;height:222px;border:1px solid #11399c;background:#fff;"></div>
<div style="left:946px;top:125px;width:722px;height:21px;background:#f0f0f0;"></div>
<div style="left:946px;top:146px;width:723px;height:1px;background:#7f9fd8;"></div>
<div class="c" style="left:949px;top:125px;width:37px;height:21px;line-height:25px;font-size:12.5px;">Šifra</div>
<div class="c" style="left:990px;top:125px;width:420px;height:21px;line-height:25px;font-size:12.5px;">Opis ličnog primanja</div>
<div class="c" style="left:1414px;top:125px;width:70px;height:21px;line-height:25px;font-size:12.5px;">Neoporez...</div>
<div class="c" style="left:1488px;top:125px;width:70px;height:21px;line-height:25px;font-size:12.5px;">Procenat ...</div>
<div class="c" style="left:1562px;top:125px;width:70px;height:21px;line-height:25px;font-size:12.5px;">RN Dug.</div>
<div class="c" style="left:1636px;top:125px;width:31px;height:21px;line-height:25px;font-size:12.5px;">RN Po</div>
<div style="left:986px;top:127px;width:1px;height:17px;background:#7f9fd8;"></div>
<div style="left:1410px;top:127px;width:1px;height:17px;background:#7f9fd8;"></div>
<div style="left:1484px;top:127px;width:1px;height:17px;background:#7f9fd8;"></div>
<div style="left:1558px;top:127px;width:1px;height:17px;background:#7f9fd8;"></div>
<div style="left:1632px;top:127px;width:1px;height:17px;background:#7f9fd8;"></div>
<div style="left:946px;top:147px;width:722px;height:179px;overflow:hidden;">
<div style="left:0;top:0px;width:722px;height:19px;background:#e2e2e2;border-bottom:1px solid #a3a3a3;"></div>
<div style="left:0px;top:0px;width:40px;height:18px;background:#fff;"></div>
<div class="c r" style="left:0px;top:0px;width:38px;height:18px;line-height:21px;">1</div>
<div class="c" style="left:42.8px;top:0px;width:421.2px;height:18px;line-height:21px;"><span class="w" style="width:53.97px"><span class="v" style="transform:scaleX(0.893)">NAKNADA</span></span> <span class="w" style="width:62.04px"><span class="v" style="transform:scaleX(0.893)">TROŠKOVA</span></span> <span class="w" style="width:53.36px"><span class="v" style="transform:scaleX(0.893)">PREVOZA</span></span> <span class="w" style="width:8.06px"><span class="v" style="transform:scaleX(0.893)">U</span></span> <span class="w" style="width:46.52px"><span class="v" style="transform:scaleX(0.893)">JAVNOM</span></span> <span class="w" style="width:75.68px"><span class="v" style="transform:scaleX(0.893)">SAOBRAĆAJU</span></span> (<span class="w" style="width:14.27px"><span class="v" style="transform:scaleX(0.893)">ČL</span></span>. 18. <span class="w" style="width:14.27px"><span class="v" style="transform:scaleX(0.893)">ST</span></span>. 1. <span class="w" style="width:6.82px"><span class="v" style="transform:scaleX(0.893)">T</span></span></div>
<div class="c r" style="left:465px;top:0px;width:71px;height:18px;line-height:21px;">0,00</div>
<div class="c r" style="left:539px;top:0px;width:71px;height:18px;line-height:21px;">10,00</div>
<div class="c" style="left:614.8px;top:0px;width:71.2px;height:18px;line-height:21px;">5296</div>
<div class="c" style="left:688.8px;top:0px;width:32.2px;height:18px;line-height:21px;">4636</div>
<div style="left:0;top:19px;width:722px;height:19px;background:#f0f0f0;border-bottom:1px solid #a3a3a3;"></div>
<div class="c r" style="left:0px;top:19px;width:38px;height:18px;line-height:21px;">2</div>
<div class="c" style="left:42.8px;top:19px;width:421.2px;height:18px;line-height:21px;"><span class="w" style="width:57.68px"><span class="v" style="transform:scaleX(0.893)">DNEVNICE</span></span> <span class="w" style="width:14.27px"><span class="v" style="transform:scaleX(0.893)">ZA</span></span> <span class="w" style="width:60.18px"><span class="v" style="transform:scaleX(0.893)">SLUŽBENO</span></span> <span class="w" style="width:66.99px"><span class="v" style="transform:scaleX(0.893)">PUTOVANJE</span></span> <span class="w" style="width:8.06px"><span class="v" style="transform:scaleX(0.893)">U</span></span> <span class="w" style="width:38.45px"><span class="v" style="transform:scaleX(0.893)">ZEMLJI</span></span> (<span class="w" style="width:14.27px"><span class="v" style="transform:scaleX(0.893)">ČL</span></span>. <span class="w" style="width:14.27px"><span class="v" style="transform:scaleX(0.893)">ST</span></span>1. <span class="w" style="width:6.82px"><span class="v" style="transform:scaleX(0.893)">T</span></span>. 2.)</div>
<div class="c r" style="left:465px;top:19px;width:71px;height:18px;line-height:21px;">2.394,00</div>
<div class="c r" style="left:539px;top:19px;width:71px;height:18px;line-height:21px;">10,00</div>
<div class="c" style="left:614.8px;top:19px;width:71.2px;height:18px;line-height:21px;">5292</div>
<div class="c" style="left:688.8px;top:19px;width:32.2px;height:18px;line-height:21px;">4632</div>
<div style="left:0;top:38px;width:722px;height:19px;background:#fff;border-bottom:1px solid #a3a3a3;"></div>
<div class="c r" style="left:0px;top:38px;width:38px;height:18px;line-height:21px;">3</div>
<div class="c" style="left:42.8px;top:38px;width:421.2px;height:18px;line-height:21px;"><span class="w" style="width:53.97px"><span class="v" style="transform:scaleX(0.893)">NAKNADA</span></span> <span class="w" style="width:62.04px"><span class="v" style="transform:scaleX(0.893)">TROŠKOVA</span></span> <span class="w" style="width:58.94px"><span class="v" style="transform:scaleX(0.893)">SMESTAJA</span></span> <span class="w" style="width:15.52px"><span class="v" style="transform:scaleX(0.893)">NA</span></span> <span class="w" style="width:69.47px"><span class="v" style="transform:scaleX(0.893)">SLUŽBENOM</span></span> <span class="w" style="width:67.60px"><span class="v" style="transform:scaleX(0.893)">PUTOVANJU</span></span> (<span class="w" style="width:14.27px"><span class="v" style="transform:scaleX(0.893)">ČL</span></span>. 18. <span class="w" style="width:14.27px"><span class="v" style="transform:scaleX(0.893)">ST</span></span>.</div>
<div class="c r" style="left:465px;top:38px;width:71px;height:18px;line-height:21px;">0,00</div>
<div class="c r" style="left:539px;top:38px;width:71px;height:18px;line-height:21px;">10,00</div>
<div class="c" style="left:614.8px;top:38px;width:71.2px;height:18px;line-height:21px;">5292</div>
<div class="c" style="left:688.8px;top:38px;width:32.2px;height:18px;line-height:21px;">4632</div>
<div style="left:0;top:57px;width:722px;height:19px;background:#f0f0f0;border-bottom:1px solid #a3a3a3;"></div>
<div class="c r" style="left:0px;top:57px;width:38px;height:18px;line-height:21px;">4</div>
<div class="c" style="left:42.8px;top:57px;width:421.2px;height:18px;line-height:21px;"><span class="w" style="width:53.97px"><span class="v" style="transform:scaleX(0.893)">NAKNADA</span></span> <span class="w" style="width:62.04px"><span class="v" style="transform:scaleX(0.893)">TROŠKOVA</span></span> <span class="w" style="width:53.36px"><span class="v" style="transform:scaleX(0.893)">PREVOZA</span></span> <span class="w" style="width:15.52px"><span class="v" style="transform:scaleX(0.893)">NA</span></span> <span class="w" style="width:69.47px"><span class="v" style="transform:scaleX(0.893)">SLUŽBENOM</span></span> <span class="w" style="width:67.60px"><span class="v" style="transform:scaleX(0.893)">PUTOVANJU</span></span> (<span class="w" style="width:14.27px"><span class="v" style="transform:scaleX(0.893)">ČL</span></span>. 18. <span class="w" style="width:14.27px"><span class="v" style="transform:scaleX(0.893)">ST</span></span>.1</div>
<div class="c r" style="left:465px;top:57px;width:71px;height:18px;line-height:21px;">0,00</div>
<div class="c r" style="left:539px;top:57px;width:71px;height:18px;line-height:21px;">10,00</div>
<div class="c" style="left:614.8px;top:57px;width:71.2px;height:18px;line-height:21px;">5299</div>
<div class="c" style="left:688.8px;top:57px;width:32.2px;height:18px;line-height:21px;">4639</div>
<div style="left:0;top:76px;width:722px;height:19px;background:#fff;border-bottom:1px solid #a3a3a3;"></div>
<div class="c r" style="left:0px;top:76px;width:38px;height:18px;line-height:21px;">5</div>
<div class="c" style="left:42.8px;top:76px;width:421.2px;height:18px;line-height:21px;"><span class="w" style="width:64.52px"><span class="v" style="transform:scaleX(0.893)">SOLIDARNA</span></span> <span class="w" style="width:42.18px"><span class="v" style="transform:scaleX(0.893)">POMOĆ</span></span>   (<span class="w" style="width:14.27px"><span class="v" style="transform:scaleX(0.893)">ČL</span></span>. 18. <span class="w" style="width:14.27px"><span class="v" style="transform:scaleX(0.893)">ST</span></span>.1. <span class="w" style="width:6.82px"><span class="v" style="transform:scaleX(0.893)">T</span></span>. 5.)</div>
<div class="c r" style="left:465px;top:76px;width:71px;height:18px;line-height:21px;">39.881,00</div>
<div class="c r" style="left:539px;top:76px;width:71px;height:18px;line-height:21px;">10,00</div>
<div class="c" style="left:614.8px;top:76px;width:71.2px;height:18px;line-height:21px;">5299</div>
<div class="c" style="left:688.8px;top:76px;width:32.2px;height:18px;line-height:21px;">4631</div>
<div style="left:0;top:95px;width:722px;height:19px;background:#f0f0f0;border-bottom:1px solid #a3a3a3;"></div>
<div class="c r" style="left:0px;top:95px;width:38px;height:18px;line-height:21px;">6</div>
<div class="c" style="left:42.8px;top:95px;width:421.2px;height:18px;line-height:21px;"><span class="w" style="width:46.53px"><span class="v" style="transform:scaleX(0.893)">POKLON</span></span> <span class="w" style="width:26.68px"><span class="v" style="transform:scaleX(0.893)">DECI</span></span> <span class="w" style="width:70.71px"><span class="v" style="transform:scaleX(0.893)">ZAPOSLENIH</span></span>, <span class="w" style="width:55.83px"><span class="v" style="transform:scaleX(0.893)">STAROSTI</span></span> <span class="w" style="width:16.74px"><span class="v" style="transform:scaleX(0.893)">DO</span></span> 15 <span class="w" style="width:44.04px"><span class="v" style="transform:scaleX(0.893)">GODINA</span></span> (<span class="w" style="width:14.27px"><span class="v" style="transform:scaleX(0.893)">ČL</span></span>. 18. <span class="w" style="width:14.27px"><span class="v" style="transform:scaleX(0.893)">ST</span></span>.1. <span class="w" style="width:6.82px"><span class="v" style="transform:scaleX(0.893)">T</span></span>. 6.</div>
<div class="c r" style="left:465px;top:95px;width:71px;height:18px;line-height:21px;">9.970,00</div>
<div class="c r" style="left:539px;top:95px;width:71px;height:18px;line-height:21px;">10,00</div>
<div class="c" style="left:614.8px;top:95px;width:71.2px;height:18px;line-height:21px;">5299</div>
<div class="c" style="left:688.8px;top:95px;width:32.2px;height:18px;line-height:21px;">4639</div>
<div style="left:0;top:114px;width:722px;height:19px;background:#fff;border-bottom:1px solid #a3a3a3;"></div>
<div class="c r" style="left:0px;top:114px;width:38px;height:18px;line-height:21px;">7</div>
<div class="c" style="left:42.8px;top:114px;width:421.2px;height:18px;line-height:21px;"><span class="w" style="width:61.42px"><span class="v" style="transform:scaleX(0.893)">JUBILARNA</span></span> <span class="w" style="width:55.21px"><span class="v" style="transform:scaleX(0.893)">NAGRADA</span></span>  (<span class="w" style="width:14.27px"><span class="v" style="transform:scaleX(0.893)">ČL</span></span>. 18. <span class="w" style="width:14.27px"><span class="v" style="transform:scaleX(0.893)">ST</span></span>.1. <span class="w" style="width:6.82px"><span class="v" style="transform:scaleX(0.893)">T</span></span>. 8)</div>
<div class="c r" style="left:465px;top:114px;width:71px;height:18px;line-height:21px;">19.939,00</div>
<div class="c r" style="left:539px;top:114px;width:71px;height:18px;line-height:21px;">10,00</div>
<div class="c" style="left:614.8px;top:114px;width:71.2px;height:18px;line-height:21px;">5291</div>
<div class="c" style="left:688.8px;top:114px;width:32.2px;height:18px;line-height:21px;">4639</div>
<div style="left:0;top:133px;width:722px;height:19px;background:#f0f0f0;border-bottom:1px solid #a3a3a3;"></div>
<div class="c r" style="left:0px;top:133px;width:38px;height:18px;line-height:21px;">8</div>
<div class="c" style="left:42.8px;top:133px;width:421.2px;height:18px;line-height:21px;"><span class="w" style="width:45.29px"><span class="v" style="transform:scaleX(0.893)">OSTALO</span></span></div>
<div class="c r" style="left:465px;top:133px;width:71px;height:18px;line-height:21px;">0,00</div>
<div class="c r" style="left:539px;top:133px;width:71px;height:18px;line-height:21px;">10,00</div>
<div class="c" style="left:614.8px;top:133px;width:71.2px;height:18px;line-height:21px;">5299</div>
<div class="c" style="left:688.8px;top:133px;width:32.2px;height:18px;line-height:21px;">4639</div>
<div style="left:0;top:152px;width:722px;height:19px;background:#fff;border-bottom:1px solid #a3a3a3;"></div>
<div class="c r" style="left:0px;top:152px;width:38px;height:18px;line-height:21px;">10</div>
<div class="c" style="left:42.8px;top:152px;width:421.2px;height:18px;line-height:21px;"><span class="w" style="width:53.97px"><span class="v" style="transform:scaleX(0.893)">NAKNADE</span></span> <span class="w" style="width:62.04px"><span class="v" style="transform:scaleX(0.893)">TROŠKOVA</span></span> <span class="w" style="width:58.94px"><span class="v" style="transform:scaleX(0.893)">SMEŠTAJA</span></span> <span class="w" style="width:15.52px"><span class="v" style="transform:scaleX(0.893)">NA</span></span> <span class="w" style="width:69.47px"><span class="v" style="transform:scaleX(0.893)">SLUŽBENOM</span></span> <span class="w" style="width:67.60px"><span class="v" style="transform:scaleX(0.893)">PUTOVANJU</span></span>, <span class="w" style="width:39.70px"><span class="v" style="transform:scaleX(0.893)">PREMA</span></span> <span class="w" style="width:21.71px"><span class="v" style="transform:scaleX(0.893)">PRII</span></span></div>
<div class="c r" style="left:465px;top:152px;width:71px;height:18px;line-height:21px;">0,00</div>
<div class="c r" style="left:539px;top:152px;width:71px;height:18px;line-height:21px;">10,00</div>
<div class="c" style="left:614.8px;top:152px;width:71.2px;height:18px;line-height:21px;">5294</div>
<div class="c" style="left:688.8px;top:152px;width:32.2px;height:18px;line-height:21px;">4634</div>
<div style="left:0;top:171px;width:722px;height:19px;background:#f0f0f0;border-bottom:1px solid #a3a3a3;"></div>
<div class="c r" style="left:0px;top:171px;width:38px;height:18px;line-height:21px;">11</div>
<div class="c" style="left:42.8px;top:171px;width:421.2px;height:18px;line-height:21px;"><span class="w" style="width:46.52px"><span class="v" style="transform:scaleX(0.893)">DNEVNE</span></span> <span class="w" style="width:53.97px"><span class="v" style="transform:scaleX(0.893)">NAKNADE</span></span> <span class="w" style="width:29.16px"><span class="v" style="transform:scaleX(0.893)">KOJE</span></span> <span class="w" style="width:67.60px"><span class="v" style="transform:scaleX(0.893)">OSTVARUJU</span></span> <span class="w" style="width:63.89px"><span class="v" style="transform:scaleX(0.893)">PRIPADNICI</span></span> <span class="w" style="width:44.05px"><span class="v" style="transform:scaleX(0.893)">VOJSKE</span></span> <span class="w" style="width:39.08px"><span class="v" style="transform:scaleX(0.893)">SRBIJE</span></span> <span class="w" style="width:8.06px"><span class="v" style="transform:scaleX(0.893)">U</span></span> <span class="w" style="width:24.82px"><span class="v" style="transform:scaleX(0.893)">VEZI</span></span> <span class="w" style="width:7.45px"><span class="v" style="transform:scaleX(0.893)">S</span></span></div>
<div class="c r" style="left:465px;top:171px;width:71px;height:18px;line-height:21px;">0,00</div>
<div class="c r" style="left:539px;top:171px;width:71px;height:18px;line-height:21px;">10,00</div>
<div class="c" style="left:614.8px;top:171px;width:71.2px;height:18px;line-height:21px;">5299</div>
<div class="c" style="left:688.8px;top:171px;width:32.2px;height:18px;line-height:21px;">4639</div>
<div style="left:40px;top:0;width:1px;height:190px;background:#a3a3a3;"></div>
<div style="left:464px;top:0;width:1px;height:190px;background:#a3a3a3;"></div>
<div style="left:538px;top:0;width:1px;height:190px;background:#a3a3a3;"></div>
<div style="left:612px;top:0;width:1px;height:190px;background:#a3a3a3;"></div>
<div style="left:686px;top:0;width:1px;height:190px;background:#a3a3a3;"></div>
</div>
<div style="left:1668px;top:125px;width:19px;height:201px;background:#f0f0f0;"></div>
<div style="left:1669px;top:144px;width:17px;height:105px;background:#cdcdcd;"></div>
<svg style="left:1673px;top:132px" width="9" height="6" viewBox="0 0 9 6"><path d="M0.800 5.200l3.700-3.800 3.700 3.800" fill="none" stroke="#505050" stroke-width="2.100"/></svg>
<svg style="left:1673px;top:314px" width="9" height="6" viewBox="0 0 9 6"><path d="M0.800 0.800l3.700 3.800 3.700-3.800" fill="none" stroke="#505050" stroke-width="2.100"/></svg>
<div style="left:946px;top:326px;width:722px;height:19px;background:#f0f0f0;"></div>
<div style="left:965px;top:327px;width:591px;height:17px;background:#cdcdcd;"></div>
<svg style="left:953px;top:331px" width="6" height="9" viewBox="0 0 6 9"><path d="M5 0.700l-4 3.800 4 3.800" fill="none" stroke="#505050" stroke-width="1.500"/></svg>
<svg style="left:1655px;top:331px" width="6" height="9" viewBox="0 0 6 9"><path d="M1 0.700l4 3.800-4 3.800" fill="none" stroke="#505050" stroke-width="1.500"/></svg>
<div style="left:1668px;top:326px;width:19px;height:19px;background:#f0f0f0;"></div>
<div style="left:234px;top:349px;width:119px;height:28px;background:#e1e1e1;border:1px solid #adadad;"></div>
<div style="left:234px;top:353.22px;line-height:20px;height:20px;font-size:13.8px;color:#1a1a1a;width:119px;text-align:center;">F6 - Novi obračun</div>
<div style="left:357px;top:348px;width:100px;height:30px;background:#f0f0f0;border:1px solid #d2d2d2;box-shadow:1px 1px 0 #fafafa;background:linear-gradient(#fafafa,#f2f2f2 50%,#e6e6e6);"></div>
<div style="left:361px;top:357px;width:12px;height:12px;border:1px solid #222;background:#fff;"></div>
<div style="left:380px;top:352.67px;line-height:20px;height:20px;font-size:12.5px;color:#000;"><span class="w" style="width:6.82px"><span class="v" style="transform:scaleX(0.893)">F</span></span>2 - <span class="w" style="width:42.18px"><span class="v" style="transform:scaleX(0.893)">IZMENE</span></span></div>
<div style="left:460px;top:348px;width:160px;height:30px;background:#f0f0f0;border:1px solid #d2d2d2;box-shadow:1px 1px 0 #fafafa;background:linear-gradient(#fafafa,#f2f2f2 50%,#e6e6e6);"></div>
<div style="left:465px;top:357px;width:12px;height:12px;border:1px solid #222;background:#fff;"></div>
<div style="left:484px;top:352.67px;line-height:20px;height:20px;font-size:12.5px;color:#000;">Interaktivno knjiženje</div>
<div style="left:622px;top:348px;width:723px;height:30px;background:#f0f0f0;border:1px solid #d2d2d2;box-shadow:1px 1px 0 #fafafa;background:linear-gradient(#fafafa,#f2f2f2 50%,#e6e6e6);"></div>
<div style="left:921px;top:352.67px;line-height:20px;height:20px;font-size:12.5px;color:#000;">Datum valute - isplate</div>
<div style="left:1349px;top:349px;width:119px;height:28px;background:#e1e1e1;border:1px solid #adadad;"></div>
<div style="left:1349px;top:353.22px;line-height:20px;height:20px;font-size:13.8px;color:#1a1a1a;width:119px;text-align:center;">Kopiraj obračun</div>
<div style="left:1473px;top:349px;width:98px;height:28px;background:#e1e1e1;border:1px solid #adadad;"></div>
<div style="left:1473px;top:353.22px;line-height:20px;height:20px;font-size:13.8px;color:#1a1a1a;width:98px;text-align:center;">Prikaži arhivu</div>
<div style="left:1576px;top:349px;width:109px;height:28px;background:#e1e1e1;border:1px solid #adadad;"></div>
<div style="left:1576px;top:353.22px;line-height:20px;height:20px;font-size:13.8px;color:#1a1a1a;width:109px;text-align:center;"><span class="w" style="width:64.37px"><span class="v" style="transform:scaleX(0.893)">ARHIVIRAJ</span></span></div>
<div style="left:237px;top:380px;width:182px;height:1px;background:#b0b0b0;"></div>
<div style="left:232px;top:381px;width:187px;height:24px;background:#f0f0f0;border:1px solid #b0b0b0;border-bottom:none;border-top:3px solid #2b579a;clip-path:polygon(6px 0,100% 0,100% 100%,0 100%,0 6px);"></div>
<svg style="left:232px;top:381px" width="7" height="7"><path d="M0.500 6.500l6-6" stroke="#b0b0b0" fill="none"/></svg>
<div style="left:238px;top:383.73px;line-height:20px;height:20px;font-size:12.9px;color:#000;">Obračun ostalih ličnih primanja</div>
<div style="left:420px;top:380px;width:171px;height:24px;background:linear-gradient(#fbfbfb,#f0f0f0 55%,#dedede);border:1px solid #adadad;border-bottom:none;clip-path:polygon(7px 0,100% 0,100% 100%,0 100%,0 7px);"></div>
<svg style="left:420px;top:380px" width="8" height="8"><path d="M0.500 7.500l7-7" stroke="#adadad" fill="none"/></svg>
<div style="left:427px;top:384.40px;line-height:20px;height:20px;font-size:12.7px;color:#000;">Obrasci / Virmani / Izveštaji</div>
<div style="left:593px;top:380px;width:62px;height:24px;background:linear-gradient(#fbfbfb,#f0f0f0 55%,#dedede);border:1px solid #adadad;border-bottom:none;clip-path:polygon(7px 0,100% 0,100% 100%,0 100%,0 7px);"></div>
<svg style="left:593px;top:380px" width="8" height="8"><path d="M0.500 7.500l7-7" stroke="#adadad" fill="none"/></svg>
<div style="left:599px;top:384.40px;line-height:20px;height:20px;font-size:12.7px;color:#000;">Knjiženja</div>
<div style="left:657px;top:380px;width:60px;height:24px;background:linear-gradient(#fbfbfb,#f0f0f0 55%,#dedede);border:1px solid #adadad;border-bottom:none;clip-path:polygon(7px 0,100% 0,100% 100%,0 100%,0 7px);"></div>
<svg style="left:657px;top:380px" width="8" height="8"><path d="M0.500 7.500l7-7" stroke="#adadad" fill="none"/></svg>
<div style="left:663px;top:384.40px;line-height:20px;height:20px;font-size:12.7px;color:#000;">Događaji</div>
<div style="left:719px;top:380px;width:83px;height:24px;background:linear-gradient(#fbfbfb,#f0f0f0 55%,#dedede);border:1px solid #adadad;border-bottom:none;clip-path:polygon(7px 0,100% 0,100% 100%,0 100%,0 7px);"></div>
<svg style="left:719px;top:380px" width="8" height="8"><path d="M0.500 7.500l7-7" stroke="#adadad" fill="none"/></svg>
<div style="left:725px;top:384.40px;line-height:20px;height:20px;font-size:12.7px;color:#000;">Polja po želji</div>
<div style="left:804px;top:380px;width:104px;height:24px;background:linear-gradient(#fbfbfb,#f0f0f0 55%,#dedede);border:1px solid #adadad;border-bottom:none;clip-path:polygon(7px 0,100% 0,100% 100%,0 100%,0 7px);"></div>
<svg style="left:804px;top:380px" width="8" height="8"><path d="M0.500 7.500l7-7" stroke="#adadad" fill="none"/></svg>
<div style="left:810px;top:384.40px;line-height:20px;height:20px;font-size:12.7px;color:#000;">Vezni dokumenti</div>
<div style="left:910px;top:380px;width:81px;height:24px;background:linear-gradient(#fbfbfb,#f0f0f0 55%,#dedede);border:1px solid #adadad;border-bottom:none;clip-path:polygon(7px 0,100% 0,100% 100%,0 100%,0 7px);"></div>
<svg style="left:910px;top:380px" width="8" height="8"><path d="M0.500 7.500l7-7" stroke="#adadad" fill="none"/></svg>
<div style="left:916px;top:384.40px;line-height:20px;height:20px;font-size:12.7px;color:#000;">Obaveštenja</div>
<div style="left:231px;top:404px;width:1457px;height:567px;border:1px solid #11399c;background:#fff;"></div>
<div style="left:232px;top:405px;width:1436px;height:21px;background:#f0f0f0;"></div>
<div style="left:232px;top:426px;width:1437px;height:1px;background:#7f9fd8;"></div>
<div class="c" style="left:235px;top:405px;width:38px;height:21px;line-height:25px;font-size:12.5px;">Šif....</div>
<div class="c" style="left:277px;top:405px;width:270px;height:21px;line-height:25px;font-size:12.5px;">Naziv vrste primanja</div>
<div class="c" style="left:551px;top:405px;width:54px;height:21px;line-height:25px;font-size:12.5px;">Šifra</div>
<div class="c" style="left:609px;top:405px;width:175px;height:21px;line-height:25px;font-size:12.5px;">Prezime i ime</div>
<div class="c" style="left:788px;top:405px;width:76px;height:21px;line-height:25px;font-size:12.5px;">Za isplatu</div>
<div class="c" style="left:868px;top:405px;width:75px;height:21px;line-height:25px;font-size:12.5px;">Isplaćeno</div>
<div class="c" style="left:947px;top:405px;width:73px;height:21px;line-height:25px;font-size:12.5px;">Neoporezivo</div>
<div class="c" style="left:1024px;top:405px;width:74px;height:21px;line-height:25px;font-size:12.5px;">Neto Opor.</div>
<div class="c" style="left:1102px;top:405px;width:76px;height:21px;line-height:25px;font-size:12.5px;">Osnovica</div>
<div class="c" style="left:1182px;top:405px;width:55px;height:21px;line-height:25px;font-size:12.5px;">% Porez</div>
<div class="c" style="left:1241px;top:405px;width:71px;height:21px;line-height:25px;font-size:12.5px;">Porez iznos</div>
<div class="c" style="left:1316px;top:405px;width:62px;height:21px;line-height:25px;font-size:12.5px;">MestoTr.</div>
<div class="c" style="left:1382px;top:405px;width:62px;height:21px;line-height:25px;font-size:12.5px;">Nos.Tr.</div>
<div class="c" style="left:1448px;top:405px;width:69px;height:21px;line-height:25px;font-size:12.5px;">Nac.Isp.</div>
<div class="c" style="left:1521px;top:405px;width:146px;height:21px;line-height:25px;font-size:12.5px;">Opis isplate</div>
<div style="left:273px;top:407px;width:1px;height:17px;background:#7f9fd8;"></div>
<div style="left:547px;top:407px;width:1px;height:17px;background:#7f9fd8;"></div>
<div style="left:605px;top:407px;width:1px;height:17px;background:#7f9fd8;"></div>
<div style="left:784px;top:407px;width:1px;height:17px;background:#7f9fd8;"></div>
<div style="left:864px;top:407px;width:1px;height:17px;background:#7f9fd8;"></div>
<div style="left:943px;top:407px;width:1px;height:17px;background:#7f9fd8;"></div>
<div style="left:1020px;top:407px;width:1px;height:17px;background:#7f9fd8;"></div>
<div style="left:1098px;top:407px;width:1px;height:17px;background:#7f9fd8;"></div>
<div style="left:1178px;top:407px;width:1px;height:17px;background:#7f9fd8;"></div>
<div style="left:1237px;top:407px;width:1px;height:17px;background:#7f9fd8;"></div>
<div style="left:1312px;top:407px;width:1px;height:17px;background:#7f9fd8;"></div>
<div style="left:1378px;top:407px;width:1px;height:17px;background:#7f9fd8;"></div>
<div style="left:1444px;top:407px;width:1px;height:17px;background:#7f9fd8;"></div>
<div style="left:1517px;top:407px;width:1px;height:17px;background:#7f9fd8;"></div>
<div style="left:232px;top:427px;width:1436px;height:494px;overflow:hidden;">
<div style="left:0;top:0px;width:1436px;height:21px;background:#e2e2e2;border-bottom:1px solid #a3a3a3;"></div>
<div class="c r" style="left:0px;top:0px;width:39px;height:20px;line-height:23px;">001</div>
<div class="c" style="left:43.8px;top:0px;width:271.2px;height:20px;line-height:23px;"><span class="w" style="width:53.97px"><span class="v" style="transform:scaleX(0.893)">NAKNADA</span></span> <span class="w" style="width:62.04px"><span class="v" style="transform:scaleX(0.893)">TROŠKOVA</span></span> <span class="w" style="width:53.36px"><span class="v" style="transform:scaleX(0.893)">PREVOZA</span></span> <span class="w" style="width:8.06px"><span class="v" style="transform:scaleX(0.893)">U</span></span> <span class="w" style="width:46.52px"><span class="v" style="transform:scaleX(0.893)">JAVNOM</span></span> <span class="w" style="width:23.58px"><span class="v" style="transform:scaleX(0.893)">SAO</span></span></div>
<div style="left:316px;top:0px;width:57px;height:20px;background:#fff;"></div>
<div class="c r" style="left:316px;top:0px;width:55px;height:20px;line-height:23px;">000002</div>
<div class="c" style="left:375.8px;top:0px;width:176.2px;height:20px;line-height:23px;"><span class="w" style="width:34.74px"><span class="v" style="transform:scaleX(0.893)">RANIĆ</span></span> <span class="w" style="width:59.55px"><span class="v" style="transform:scaleX(0.893)">JUGOSLAV</span></span></div>
<div class="c r" style="left:553px;top:0px;width:77px;height:20px;line-height:23px;">3.275,00</div>
<div class="c r" style="left:633px;top:0px;width:76px;height:20px;line-height:23px;">0,00</div>
<div class="c r" style="left:712px;top:0px;width:74px;height:20px;line-height:23px;">0,00</div>
<div class="c r" style="left:789px;top:0px;width:75px;height:20px;line-height:23px;">3.275,00</div>
<div class="c r" style="left:867px;top:0px;width:77px;height:20px;line-height:23px;">3.638,89</div>
<div class="c r" style="left:947px;top:0px;width:56px;height:20px;line-height:23px;">10,00</div>
<div class="c r" style="left:1006px;top:0px;width:72px;height:20px;line-height:23px;">363,89</div>
<div class="c" style="left:1214.8px;top:0px;width:70.2px;height:20px;line-height:23px;">1 - Novac</div>
<div class="c" style="left:1287.8px;top:0px;width:147.2px;height:20px;line-height:23px;"><span class="w" style="width:53.97px"><span class="v" style="transform:scaleX(0.893)">NAKNADA</span></span> <span class="w" style="width:62.04px"><span class="v" style="transform:scaleX(0.893)">TROŠKOVA</span></span> <span class="w" style="width:22.95px"><span class="v" style="transform:scaleX(0.893)">PRE</span></span></div>
<div style="left:0;top:21px;width:1436px;height:21px;background:#f0f0f0;border-bottom:1px solid #a3a3a3;"></div>
<div class="c r" style="left:0px;top:21px;width:39px;height:20px;line-height:23px;">001</div>
<div class="c" style="left:43.8px;top:21px;width:271.2px;height:20px;line-height:23px;"><span class="w" style="width:53.97px"><span class="v" style="transform:scaleX(0.893)">NAKNADA</span></span> <span class="w" style="width:62.04px"><span class="v" style="transform:scaleX(0.893)">TROŠKOVA</span></span> <span class="w" style="width:53.36px"><span class="v" style="transform:scaleX(0.893)">PREVOZA</span></span> <span class="w" style="width:8.06px"><span class="v" style="transform:scaleX(0.893)">U</span></span> <span class="w" style="width:46.52px"><span class="v" style="transform:scaleX(0.893)">JAVNOM</span></span> <span class="w" style="width:23.58px"><span class="v" style="transform:scaleX(0.893)">SAO</span></span></div>
<div class="c r" style="left:316px;top:21px;width:55px;height:20px;line-height:23px;">000002</div>
<div class="c" style="left:375.8px;top:21px;width:176.2px;height:20px;line-height:23px;"><span class="w" style="width:34.74px"><span class="v" style="transform:scaleX(0.893)">RANIĆ</span></span> <span class="w" style="width:59.55px"><span class="v" style="transform:scaleX(0.893)">JUGOSLAV</span></span></div>
<div class="c r" style="left:553px;top:21px;width:77px;height:20px;line-height:23px;">3.275,00</div>
<div class="c r" style="left:633px;top:21px;width:76px;height:20px;line-height:23px;">0,00</div>
<div class="c r" style="left:712px;top:21px;width:74px;height:20px;line-height:23px;">0,00</div>
<div class="c r" style="left:789px;top:21px;width:75px;height:20px;line-height:23px;">3.275,00</div>
<div class="c r" style="left:867px;top:21px;width:77px;height:20px;line-height:23px;">3.638,89</div>
<div class="c r" style="left:947px;top:21px;width:56px;height:20px;line-height:23px;">10,00</div>
<div class="c r" style="left:1006px;top:21px;width:72px;height:20px;line-height:23px;">363,89</div>
<div class="c" style="left:1214.8px;top:21px;width:70.2px;height:20px;line-height:23px;">1 - Novac</div>
<div class="c" style="left:1287.8px;top:21px;width:147.2px;height:20px;line-height:23px;"><span class="w" style="width:53.97px"><span class="v" style="transform:scaleX(0.893)">NAKNADA</span></span> <span class="w" style="width:62.04px"><span class="v" style="transform:scaleX(0.893)">TROŠKOVA</span></span> <span class="w" style="width:22.95px"><span class="v" style="transform:scaleX(0.893)">PRE</span></span></div>
<div style="left:0;top:42px;width:1436px;height:21px;background:#fff;border-bottom:1px solid #a3a3a3;"></div>
<div class="c r" style="left:0px;top:42px;width:39px;height:20px;line-height:23px;">001</div>
<div class="c" style="left:43.8px;top:42px;width:271.2px;height:20px;line-height:23px;"><span class="w" style="width:53.97px"><span class="v" style="transform:scaleX(0.893)">NAKNADA</span></span> <span class="w" style="width:62.04px"><span class="v" style="transform:scaleX(0.893)">TROŠKOVA</span></span> <span class="w" style="width:53.36px"><span class="v" style="transform:scaleX(0.893)">PREVOZA</span></span> <span class="w" style="width:8.06px"><span class="v" style="transform:scaleX(0.893)">U</span></span> <span class="w" style="width:46.52px"><span class="v" style="transform:scaleX(0.893)">JAVNOM</span></span> <span class="w" style="width:23.58px"><span class="v" style="transform:scaleX(0.893)">SAO</span></span></div>
<div class="c r" style="left:316px;top:42px;width:55px;height:20px;line-height:23px;">000005</div>
<div class="c" style="left:375.8px;top:42px;width:176.2px;height:20px;line-height:23px;"><span class="w" style="width:41.55px"><span class="v" style="transform:scaleX(0.893)">GRUJIĆ</span></span> <span class="w" style="width:34.12px"><span class="v" style="transform:scaleX(0.893)">MILAN</span></span></div>
<div class="c r" style="left:553px;top:42px;width:77px;height:20px;line-height:23px;">3.275,00</div>
<div class="c r" style="left:633px;top:42px;width:76px;height:20px;line-height:23px;">0,00</div>
<div class="c r" style="left:712px;top:42px;width:74px;height:20px;line-height:23px;">0,00</div>
<div class="c r" style="left:789px;top:42px;width:75px;height:20px;line-height:23px;">3.275,00</div>
<div class="c r" style="left:867px;top:42px;width:77px;height:20px;line-height:23px;">3.638,89</div>
<div class="c r" style="left:947px;top:42px;width:56px;height:20px;line-height:23px;">10,00</div>
<div class="c r" style="left:1006px;top:42px;width:72px;height:20px;line-height:23px;">363,89</div>
<div class="c" style="left:1214.8px;top:42px;width:70.2px;height:20px;line-height:23px;">1 - Novac</div>
<div class="c" style="left:1287.8px;top:42px;width:147.2px;height:20px;line-height:23px;"><span class="w" style="width:53.97px"><span class="v" style="transform:scaleX(0.893)">NAKNADA</span></span> <span class="w" style="width:62.04px"><span class="v" style="transform:scaleX(0.893)">TROŠKOVA</span></span> <span class="w" style="width:22.95px"><span class="v" style="transform:scaleX(0.893)">PRE</span></span></div>
<div style="left:0;top:63px;width:1436px;height:21px;background:#f0f0f0;border-bottom:1px solid #a3a3a3;"></div>
<div class="c r" style="left:0px;top:63px;width:39px;height:20px;line-height:23px;">001</div>
<div class="c" style="left:43.8px;top:63px;width:271.2px;height:20px;line-height:23px;"><span class="w" style="width:53.97px"><span class="v" style="transform:scaleX(0.893)">NAKNADA</span></span> <span class="w" style="width:62.04px"><span class="v" style="transform:scaleX(0.893)">TROŠKOVA</span></span> <span class="w" style="width:53.36px"><span class="v" style="transform:scaleX(0.893)">PREVOZA</span></span> <span class="w" style="width:8.06px"><span class="v" style="transform:scaleX(0.893)">U</span></span> <span class="w" style="width:46.52px"><span class="v" style="transform:scaleX(0.893)">JAVNOM</span></span> <span class="w" style="width:23.58px"><span class="v" style="transform:scaleX(0.893)">SAO</span></span></div>
<div class="c r" style="left:316px;top:63px;width:55px;height:20px;line-height:23px;">000005</div>
<div class="c" style="left:375.8px;top:63px;width:176.2px;height:20px;line-height:23px;"><span class="w" style="width:41.55px"><span class="v" style="transform:scaleX(0.893)">GRUJIĆ</span></span> <span class="w" style="width:34.12px"><span class="v" style="transform:scaleX(0.893)">MILAN</span></span></div>
<div class="c r" style="left:553px;top:63px;width:77px;height:20px;line-height:23px;">3.275,00</div>
<div class="c r" style="left:633px;top:63px;width:76px;height:20px;line-height:23px;">0,00</div>
<div class="c r" style="left:712px;top:63px;width:74px;height:20px;line-height:23px;">0,00</div>
<div class="c r" style="left:789px;top:63px;width:75px;height:20px;line-height:23px;">3.275,00</div>
<div class="c r" style="left:867px;top:63px;width:77px;height:20px;line-height:23px;">3.638,89</div>
<div class="c r" style="left:947px;top:63px;width:56px;height:20px;line-height:23px;">10,00</div>
<div class="c r" style="left:1006px;top:63px;width:72px;height:20px;line-height:23px;">363,89</div>
<div class="c" style="left:1214.8px;top:63px;width:70.2px;height:20px;line-height:23px;">1 - Novac</div>
<div class="c" style="left:1287.8px;top:63px;width:147.2px;height:20px;line-height:23px;"><span class="w" style="width:53.97px"><span class="v" style="transform:scaleX(0.893)">NAKNADA</span></span> <span class="w" style="width:62.04px"><span class="v" style="transform:scaleX(0.893)">TROŠKOVA</span></span> <span class="w" style="width:22.95px"><span class="v" style="transform:scaleX(0.893)">PRE</span></span></div>
<div style="left:0;top:84px;width:1436px;height:21px;background:#fff;border-bottom:1px solid #a3a3a3;"></div>
<div class="c r" style="left:0px;top:84px;width:39px;height:20px;line-height:23px;">001</div>
<div class="c" style="left:43.8px;top:84px;width:271.2px;height:20px;line-height:23px;"><span class="w" style="width:53.97px"><span class="v" style="transform:scaleX(0.893)">NAKNADA</span></span> <span class="w" style="width:62.04px"><span class="v" style="transform:scaleX(0.893)">TROŠKOVA</span></span> <span class="w" style="width:53.36px"><span class="v" style="transform:scaleX(0.893)">PREVOZA</span></span> <span class="w" style="width:8.06px"><span class="v" style="transform:scaleX(0.893)">U</span></span> <span class="w" style="width:46.52px"><span class="v" style="transform:scaleX(0.893)">JAVNOM</span></span> <span class="w" style="width:23.58px"><span class="v" style="transform:scaleX(0.893)">SAO</span></span></div>
<div class="c r" style="left:316px;top:84px;width:55px;height:20px;line-height:23px;">000006</div>
<div class="c" style="left:375.8px;top:84px;width:176.2px;height:20px;line-height:23px;"><span class="w" style="width:59.55px"><span class="v" style="transform:scaleX(0.893)">MARKOVIĆ</span></span> <span class="w" style="width:37.23px"><span class="v" style="transform:scaleX(0.893)">PETAR</span></span></div>
<div class="c r" style="left:553px;top:84px;width:77px;height:20px;line-height:23px;">3.275,00</div>
<div class="c r" style="left:633px;top:84px;width:76px;height:20px;line-height:23px;">0,00</div>
<div class="c r" style="left:712px;top:84px;width:74px;height:20px;line-height:23px;">0,00</div>
<div class="c r" style="left:789px;top:84px;width:75px;height:20px;line-height:23px;">3.275,00</div>
<div class="c r" style="left:867px;top:84px;width:77px;height:20px;line-height:23px;">3.638,89</div>
<div class="c r" style="left:947px;top:84px;width:56px;height:20px;line-height:23px;">10,00</div>
<div class="c r" style="left:1006px;top:84px;width:72px;height:20px;line-height:23px;">363,89</div>
<div class="c" style="left:1214.8px;top:84px;width:70.2px;height:20px;line-height:23px;">1 - Novac</div>
<div class="c" style="left:1287.8px;top:84px;width:147.2px;height:20px;line-height:23px;"><span class="w" style="width:53.97px"><span class="v" style="transform:scaleX(0.893)">NAKNADA</span></span> <span class="w" style="width:62.04px"><span class="v" style="transform:scaleX(0.893)">TROŠKOVA</span></span> <span class="w" style="width:22.95px"><span class="v" style="transform:scaleX(0.893)">PRE</span></span></div>
<div style="left:0;top:105px;width:1436px;height:21px;background:#f0f0f0;border-bottom:1px solid #a3a3a3;"></div>
<div class="c r" style="left:0px;top:105px;width:39px;height:20px;line-height:23px;">001</div>
<div class="c" style="left:43.8px;top:105px;width:271.2px;height:20px;line-height:23px;"><span class="w" style="width:53.97px"><span class="v" style="transform:scaleX(0.893)">NAKNADA</span></span> <span class="w" style="width:62.04px"><span class="v" style="transform:scaleX(0.893)">TROŠKOVA</span></span> <span class="w" style="width:53.36px"><span class="v" style="transform:scaleX(0.893)">PREVOZA</span></span> <span class="w" style="width:8.06px"><span class="v" style="transform:scaleX(0.893)">U</span></span> <span class="w" style="width:46.52px"><span class="v" style="transform:scaleX(0.893)">JAVNOM</span></span> <span class="w" style="width:23.58px"><span class="v" style="transform:scaleX(0.893)">SAO</span></span></div>
<div class="c r" style="left:316px;top:105px;width:55px;height:20px;line-height:23px;">000006</div>
<div class="c" style="left:375.8px;top:105px;width:176.2px;height:20px;line-height:23px;"><span class="w" style="width:59.55px"><span class="v" style="transform:scaleX(0.893)">MARKOVIĆ</span></span> <span class="w" style="width:37.23px"><span class="v" style="transform:scaleX(0.893)">PETAR</span></span></div>
<div class="c r" style="left:553px;top:105px;width:77px;height:20px;line-height:23px;">3.275,00</div>
<div class="c r" style="left:633px;top:105px;width:76px;height:20px;line-height:23px;">0,00</div>
<div class="c r" style="left:712px;top:105px;width:74px;height:20px;line-height:23px;">0,00</div>
<div class="c r" style="left:789px;top:105px;width:75px;height:20px;line-height:23px;">3.275,00</div>
<div class="c r" style="left:867px;top:105px;width:77px;height:20px;line-height:23px;">3.638,89</div>
<div class="c r" style="left:947px;top:105px;width:56px;height:20px;line-height:23px;">10,00</div>
<div class="c r" style="left:1006px;top:105px;width:72px;height:20px;line-height:23px;">363,89</div>
<div class="c" style="left:1214.8px;top:105px;width:70.2px;height:20px;line-height:23px;">1 - Novac</div>
<div class="c" style="left:1287.8px;top:105px;width:147.2px;height:20px;line-height:23px;"><span class="w" style="width:53.97px"><span class="v" style="transform:scaleX(0.893)">NAKNADA</span></span> <span class="w" style="width:62.04px"><span class="v" style="transform:scaleX(0.893)">TROŠKOVA</span></span> <span class="w" style="width:22.95px"><span class="v" style="transform:scaleX(0.893)">PRE</span></span></div>
<div style="left:0;top:126px;width:1436px;height:21px;background:#fff;border-bottom:1px solid #a3a3a3;"></div>
<div class="c r" style="left:0px;top:126px;width:39px;height:20px;line-height:23px;">001</div>
<div class="c" style="left:43.8px;top:126px;width:271.2px;height:20px;line-height:23px;"><span class="w" style="width:53.97px"><span class="v" style="transform:scaleX(0.893)">NAKNADA</span></span> <span class="w" style="width:62.04px"><span class="v" style="transform:scaleX(0.893)">TROŠKOVA</span></span> <span class="w" style="width:53.36px"><span class="v" style="transform:scaleX(0.893)">PREVOZA</span></span> <span class="w" style="width:8.06px"><span class="v" style="transform:scaleX(0.893)">U</span></span> <span class="w" style="width:46.52px"><span class="v" style="transform:scaleX(0.893)">JAVNOM</span></span> <span class="w" style="width:23.58px"><span class="v" style="transform:scaleX(0.893)">SAO</span></span></div>
<div class="c r" style="left:316px;top:126px;width:55px;height:20px;line-height:23px;">000007</div>
<div class="c" style="left:375.8px;top:126px;width:176.2px;height:20px;line-height:23px;"><span class="w" style="width:34.74px"><span class="v" style="transform:scaleX(0.893)">NEDIĆ</span></span> <span class="w" style="width:39.07px"><span class="v" style="transform:scaleX(0.893)">ZORAN</span></span></div>
<div class="c r" style="left:553px;top:126px;width:77px;height:20px;line-height:23px;">3.275,00</div>
<div class="c r" style="left:633px;top:126px;width:76px;height:20px;line-height:23px;">0,00</div>
<div class="c r" style="left:712px;top:126px;width:74px;height:20px;line-height:23px;">0,00</div>
<div class="c r" style="left:789px;top:126px;width:75px;height:20px;line-height:23px;">3.275,00</div>
<div class="c r" style="left:867px;top:126px;width:77px;height:20px;line-height:23px;">3.638,89</div>
<div class="c r" style="left:947px;top:126px;width:56px;height:20px;line-height:23px;">10,00</div>
<div class="c r" style="left:1006px;top:126px;width:72px;height:20px;line-height:23px;">363,89</div>
<div class="c" style="left:1214.8px;top:126px;width:70.2px;height:20px;line-height:23px;">1 - Novac</div>
<div class="c" style="left:1287.8px;top:126px;width:147.2px;height:20px;line-height:23px;"><span class="w" style="width:53.97px"><span class="v" style="transform:scaleX(0.893)">NAKNADA</span></span> <span class="w" style="width:62.04px"><span class="v" style="transform:scaleX(0.893)">TROŠKOVA</span></span> <span class="w" style="width:22.95px"><span class="v" style="transform:scaleX(0.893)">PRE</span></span></div>
<div style="left:0;top:147px;width:1436px;height:21px;background:#f0f0f0;border-bottom:1px solid #a3a3a3;"></div>
<div class="c r" style="left:0px;top:147px;width:39px;height:20px;line-height:23px;">001</div>
<div class="c" style="left:43.8px;top:147px;width:271.2px;height:20px;line-height:23px;"><span class="w" style="width:53.97px"><span class="v" style="transform:scaleX(0.893)">NAKNADA</span></span> <span class="w" style="width:62.04px"><span class="v" style="transform:scaleX(0.893)">TROŠKOVA</span></span> <span class="w" style="width:53.36px"><span class="v" style="transform:scaleX(0.893)">PREVOZA</span></span> <span class="w" style="width:8.06px"><span class="v" style="transform:scaleX(0.893)">U</span></span> <span class="w" style="width:46.52px"><span class="v" style="transform:scaleX(0.893)">JAVNOM</span></span> <span class="w" style="width:23.58px"><span class="v" style="transform:scaleX(0.893)">SAO</span></span></div>
<div class="c r" style="left:316px;top:147px;width:55px;height:20px;line-height:23px;">000007</div>
<div class="c" style="left:375.8px;top:147px;width:176.2px;height:20px;line-height:23px;"><span class="w" style="width:34.74px"><span class="v" style="transform:scaleX(0.893)">NEDIĆ</span></span> <span class="w" style="width:39.07px"><span class="v" style="transform:scaleX(0.893)">ZORAN</span></span></div>
<div class="c r" style="left:553px;top:147px;width:77px;height:20px;line-height:23px;">3.275,00</div>
<div class="c r" style="left:633px;top:147px;width:76px;height:20px;line-height:23px;">0,00</div>
<div class="c r" style="left:712px;top:147px;width:74px;height:20px;line-height:23px;">0,00</div>
<div class="c r" style="left:789px;top:147px;width:75px;height:20px;line-height:23px;">3.275,00</div>
<div class="c r" style="left:867px;top:147px;width:77px;height:20px;line-height:23px;">3.638,89</div>
<div class="c r" style="left:947px;top:147px;width:56px;height:20px;line-height:23px;">10,00</div>
<div class="c r" style="left:1006px;top:147px;width:72px;height:20px;line-height:23px;">363,89</div>
<div class="c" style="left:1214.8px;top:147px;width:70.2px;height:20px;line-height:23px;">1 - Novac</div>
<div class="c" style="left:1287.8px;top:147px;width:147.2px;height:20px;line-height:23px;"><span class="w" style="width:53.97px"><span class="v" style="transform:scaleX(0.893)">NAKNADA</span></span> <span class="w" style="width:62.04px"><span class="v" style="transform:scaleX(0.893)">TROŠKOVA</span></span> <span class="w" style="width:22.95px"><span class="v" style="transform:scaleX(0.893)">PRE</span></span></div>
<div style="left:0;top:168px;width:1436px;height:21px;background:#fff;border-bottom:1px solid #a3a3a3;"></div>
<div class="c r" style="left:0px;top:168px;width:39px;height:20px;line-height:23px;">001</div>
<div class="c" style="left:43.8px;top:168px;width:271.2px;height:20px;line-height:23px;"><span class="w" style="width:53.97px"><span class="v" style="transform:scaleX(0.893)">NAKNADA</span></span> <span class="w" style="width:62.04px"><span class="v" style="transform:scaleX(0.893)">TROŠKOVA</span></span> <span class="w" style="width:53.36px"><span class="v" style="transform:scaleX(0.893)">PREVOZA</span></span> <span class="w" style="width:8.06px"><span class="v" style="transform:scaleX(0.893)">U</span></span> <span class="w" style="width:46.52px"><span class="v" style="transform:scaleX(0.893)">JAVNOM</span></span> <span class="w" style="width:23.58px"><span class="v" style="transform:scaleX(0.893)">SAO</span></span></div>
<div class="c r" style="left:316px;top:168px;width:55px;height:20px;line-height:23px;">000008</div>
<div class="c" style="left:375.8px;top:168px;width:176.2px;height:20px;line-height:23px;"><span class="w" style="width:41.57px"><span class="v" style="transform:scaleX(0.893)">KOSTIĆ</span></span> <span class="w" style="width:47.76px"><span class="v" style="transform:scaleX(0.893)">ANDRIJA</span></span></div>
<div class="c r" style="left:553px;top:168px;width:77px;height:20px;line-height:23px;">3.275,00</div>
<div class="c r" style="left:633px;top:168px;width:76px;height:20px;line-height:23px;">0,00</div>
<div class="c r" style="left:712px;top:168px;width:74px;height:20px;line-height:23px;">0,00</div>
<div class="c r" style="left:789px;top:168px;width:75px;height:20px;line-height:23px;">3.275,00</div>
<div class="c r" style="left:867px;top:168px;width:77px;height:20px;line-height:23px;">3.638,89</div>
<div class="c r" style="left:947px;top:168px;width:56px;height:20px;line-height:23px;">10,00</div>
<div class="c r" style="left:1006px;top:168px;width:72px;height:20px;line-height:23px;">363,89</div>
<div class="c" style="left:1214.8px;top:168px;width:70.2px;height:20px;line-height:23px;">1 - Novac</div>
<div class="c" style="left:1287.8px;top:168px;width:147.2px;height:20px;line-height:23px;"><span class="w" style="width:53.97px"><span class="v" style="transform:scaleX(0.893)">NAKNADA</span></span> <span class="w" style="width:62.04px"><span class="v" style="transform:scaleX(0.893)">TROŠKOVA</span></span> <span class="w" style="width:22.95px"><span class="v" style="transform:scaleX(0.893)">PRE</span></span></div>
<div style="left:0;top:189px;width:1436px;height:21px;background:#f0f0f0;border-bottom:1px solid #a3a3a3;"></div>
<div class="c r" style="left:0px;top:189px;width:39px;height:20px;line-height:23px;">001</div>
<div class="c" style="left:43.8px;top:189px;width:271.2px;height:20px;line-height:23px;"><span class="w" style="width:53.97px"><span class="v" style="transform:scaleX(0.893)">NAKNADA</span></span> <span class="w" style="width:62.04px"><span class="v" style="transform:scaleX(0.893)">TROŠKOVA</span></span> <span class="w" style="width:53.36px"><span class="v" style="transform:scaleX(0.893)">PREVOZA</span></span> <span class="w" style="width:8.06px"><span class="v" style="transform:scaleX(0.893)">U</span></span> <span class="w" style="width:46.52px"><span class="v" style="transform:scaleX(0.893)">JAVNOM</span></span> <span class="w" style="width:23.58px"><span class="v" style="transform:scaleX(0.893)">SAO</span></span></div>
<div class="c r" style="left:316px;top:189px;width:55px;height:20px;line-height:23px;">000008</div>
<div class="c" style="left:375.8px;top:189px;width:176.2px;height:20px;line-height:23px;"><span class="w" style="width:41.57px"><span class="v" style="transform:scaleX(0.893)">KOSTIĆ</span></span> <span class="w" style="width:47.76px"><span class="v" style="transform:scaleX(0.893)">ANDRIJA</span></span></div>
<div class="c r" style="left:553px;top:189px;width:77px;height:20px;line-height:23px;">3.275,00</div>
<div class="c r" style="left:633px;top:189px;width:76px;height:20px;line-height:23px;">0,00</div>
<div class="c r" style="left:712px;top:189px;width:74px;height:20px;line-height:23px;">0,00</div>
<div class="c r" style="left:789px;top:189px;width:75px;height:20px;line-height:23px;">3.275,00</div>
<div class="c r" style="left:867px;top:189px;width:77px;height:20px;line-height:23px;">3.638,89</div>
<div class="c r" style="left:947px;top:189px;width:56px;height:20px;line-height:23px;">10,00</div>
<div class="c r" style="left:1006px;top:189px;width:72px;height:20px;line-height:23px;">363,89</div>
<div class="c" style="left:1214.8px;top:189px;width:70.2px;height:20px;line-height:23px;">1 - Novac</div>
<div class="c" style="left:1287.8px;top:189px;width:147.2px;height:20px;line-height:23px;"><span class="w" style="width:53.97px"><span class="v" style="transform:scaleX(0.893)">NAKNADA</span></span> <span class="w" style="width:62.04px"><span class="v" style="transform:scaleX(0.893)">TROŠKOVA</span></span> <span class="w" style="width:22.95px"><span class="v" style="transform:scaleX(0.893)">PRE</span></span></div>
<div style="left:0;top:210px;width:1436px;height:21px;background:#fff;border-bottom:1px solid #a3a3a3;"></div>
<div class="c r" style="left:0px;top:210px;width:39px;height:20px;line-height:23px;">001</div>
<div class="c" style="left:43.8px;top:210px;width:271.2px;height:20px;line-height:23px;"><span class="w" style="width:53.97px"><span class="v" style="transform:scaleX(0.893)">NAKNADA</span></span> <span class="w" style="width:62.04px"><span class="v" style="transform:scaleX(0.893)">TROŠKOVA</span></span> <span class="w" style="width:53.36px"><span class="v" style="transform:scaleX(0.893)">PREVOZA</span></span> <span class="w" style="width:8.06px"><span class="v" style="transform:scaleX(0.893)">U</span></span> <span class="w" style="width:46.52px"><span class="v" style="transform:scaleX(0.893)">JAVNOM</span></span> <span class="w" style="width:23.58px"><span class="v" style="transform:scaleX(0.893)">SAO</span></span></div>
<div class="c r" style="left:316px;top:210px;width:55px;height:20px;line-height:23px;">000009</div>
<div class="c" style="left:375.8px;top:210px;width:176.2px;height:20px;line-height:23px;"><span class="w" style="width:75.05px"><span class="v" style="transform:scaleX(0.893)">PRODANOVIĆ</span></span> <span class="w" style="width:47.76px"><span class="v" style="transform:scaleX(0.893)">DRAGAN</span></span></div>
<div class="c r" style="left:553px;top:210px;width:77px;height:20px;line-height:23px;">3.275,00</div>
<div class="c r" style="left:633px;top:210px;width:76px;height:20px;line-height:23px;">0,00</div>
<div class="c r" style="left:712px;top:210px;width:74px;height:20px;line-height:23px;">0,00</div>
<div class="c r" style="left:789px;top:210px;width:75px;height:20px;line-height:23px;">3.275,00</div>
<div class="c r" style="left:867px;top:210px;width:77px;height:20px;line-height:23px;">3.638,89</div>
<div class="c r" style="left:947px;top:210px;width:56px;height:20px;line-height:23px;">10,00</div>
<div class="c r" style="left:1006px;top:210px;width:72px;height:20px;line-height:23px;">363,89</div>
<div class="c" style="left:1214.8px;top:210px;width:70.2px;height:20px;line-height:23px;">1 - Novac</div>
<div class="c" style="left:1287.8px;top:210px;width:147.2px;height:20px;line-height:23px;"><span class="w" style="width:53.97px"><span class="v" style="transform:scaleX(0.893)">NAKNADA</span></span> <span class="w" style="width:62.04px"><span class="v" style="transform:scaleX(0.893)">TROŠKOVA</span></span> <span class="w" style="width:22.95px"><span class="v" style="transform:scaleX(0.893)">PRE</span></span></div>
<div style="left:0;top:231px;width:1436px;height:21px;background:#f0f0f0;border-bottom:1px solid #a3a3a3;"></div>
<div class="c r" style="left:0px;top:231px;width:39px;height:20px;line-height:23px;">001</div>
<div class="c" style="left:43.8px;top:231px;width:271.2px;height:20px;line-height:23px;"><span class="w" style="width:53.97px"><span class="v" style="transform:scaleX(0.893)">NAKNADA</span></span> <span class="w" style="width:62.04px"><span class="v" style="transform:scaleX(0.893)">TROŠKOVA</span></span> <span class="w" style="width:53.36px"><span class="v" style="transform:scaleX(0.893)">PREVOZA</span></span> <span class="w" style="width:8.06px"><span class="v" style="transform:scaleX(0.893)">U</span></span> <span class="w" style="width:46.52px"><span class="v" style="transform:scaleX(0.893)">JAVNOM</span></span> <span class="w" style="width:23.58px"><span class="v" style="transform:scaleX(0.893)">SAO</span></span></div>
<div class="c r" style="left:316px;top:231px;width:55px;height:20px;line-height:23px;">000009</div>
<div class="c" style="left:375.8px;top:231px;width:176.2px;height:20px;line-height:23px;"><span class="w" style="width:75.05px"><span class="v" style="transform:scaleX(0.893)">PRODANOVIĆ</span></span> <span class="w" style="width:47.76px"><span class="v" style="transform:scaleX(0.893)">DRAGAN</span></span></div>
<div class="c r" style="left:553px;top:231px;width:77px;height:20px;line-height:23px;">3.275,00</div>
<div class="c r" style="left:633px;top:231px;width:76px;height:20px;line-height:23px;">0,00</div>
<div class="c r" style="left:712px;top:231px;width:74px;height:20px;line-height:23px;">0,00</div>
<div class="c r" style="left:789px;top:231px;width:75px;height:20px;line-height:23px;">3.275,00</div>
<div class="c r" style="left:867px;top:231px;width:77px;height:20px;line-height:23px;">3.638,89</div>
<div class="c r" style="left:947px;top:231px;width:56px;height:20px;line-height:23px;">10,00</div>
<div class="c r" style="left:1006px;top:231px;width:72px;height:20px;line-height:23px;">363,89</div>
<div class="c" style="left:1214.8px;top:231px;width:70.2px;height:20px;line-height:23px;">1 - Novac</div>
<div class="c" style="left:1287.8px;top:231px;width:147.2px;height:20px;line-height:23px;"><span class="w" style="width:53.97px"><span class="v" style="transform:scaleX(0.893)">NAKNADA</span></span> <span class="w" style="width:62.04px"><span class="v" style="transform:scaleX(0.893)">TROŠKOVA</span></span> <span class="w" style="width:22.95px"><span class="v" style="transform:scaleX(0.893)">PRE</span></span></div>
<div style="left:0;top:252px;width:1436px;height:21px;background:#fff;border-bottom:1px solid #a3a3a3;"></div>
<div class="c r" style="left:0px;top:252px;width:39px;height:20px;line-height:23px;">001</div>
<div class="c" style="left:43.8px;top:252px;width:271.2px;height:20px;line-height:23px;"><span class="w" style="width:53.97px"><span class="v" style="transform:scaleX(0.893)">NAKNADA</span></span> <span class="w" style="width:62.04px"><span class="v" style="transform:scaleX(0.893)">TROŠKOVA</span></span> <span class="w" style="width:53.36px"><span class="v" style="transform:scaleX(0.893)">PREVOZA</span></span> <span class="w" style="width:8.06px"><span class="v" style="transform:scaleX(0.893)">U</span></span> <span class="w" style="width:46.52px"><span class="v" style="transform:scaleX(0.893)">JAVNOM</span></span> <span class="w" style="width:23.58px"><span class="v" style="transform:scaleX(0.893)">SAO</span></span></div>
<div class="c r" style="left:316px;top:252px;width:55px;height:20px;line-height:23px;">000010</div>
<div class="c" style="left:375.8px;top:252px;width:176.2px;height:20px;line-height:23px;"><span class="w" style="width:47.16px"><span class="v" style="transform:scaleX(0.893)">ALEKSIĆ</span></span> <span class="w" style="width:26.06px"><span class="v" style="transform:scaleX(0.893)">IVAN</span></span></div>
<div class="c r" style="left:553px;top:252px;width:77px;height:20px;line-height:23px;">3.275,00</div>
<div class="c r" style="left:633px;top:252px;width:76px;height:20px;line-height:23px;">0,00</div>
<div class="c r" style="left:712px;top:252px;width:74px;height:20px;line-height:23px;">0,00</div>
<div class="c r" style="left:789px;top:252px;width:75px;height:20px;line-height:23px;">3.275,00</div>
<div class="c r" style="left:867px;top:252px;width:77px;height:20px;line-height:23px;">3.638,89</div>
<div class="c r" style="left:947px;top:252px;width:56px;height:20px;line-height:23px;">10,00</div>
<div class="c r" style="left:1006px;top:252px;width:72px;height:20px;line-height:23px;">363,89</div>
<div class="c" style="left:1214.8px;top:252px;width:70.2px;height:20px;line-height:23px;">1 - Novac</div>
<div class="c" style="left:1287.8px;top:252px;width:147.2px;height:20px;line-height:23px;"><span class="w" style="width:53.97px"><span class="v" style="transform:scaleX(0.893)">NAKNADA</span></span> <span class="w" style="width:62.04px"><span class="v" style="transform:scaleX(0.893)">TROŠKOVA</span></span> <span class="w" style="width:22.95px"><span class="v" style="transform:scaleX(0.893)">PRE</span></span></div>
<div style="left:0;top:273px;width:1436px;height:21px;background:#f0f0f0;border-bottom:1px solid #a3a3a3;"></div>
<div class="c r" style="left:0px;top:273px;width:39px;height:20px;line-height:23px;">001</div>
<div class="c" style="left:43.8px;top:273px;width:271.2px;height:20px;line-height:23px;"><span class="w" style="width:53.97px"><span class="v" style="transform:scaleX(0.893)">NAKNADA</span></span> <span class="w" style="width:62.04px"><span class="v" style="transform:scaleX(0.893)">TROŠKOVA</span></span> <span class="w" style="width:53.36px"><span class="v" style="transform:scaleX(0.893)">PREVOZA</span></span> <span class="w" style="width:8.06px"><span class="v" style="transform:scaleX(0.893)">U</span></span> <span class="w" style="width:46.52px"><span class="v" style="transform:scaleX(0.893)">JAVNOM</span></span> <span class="w" style="width:23.58px"><span class="v" style="transform:scaleX(0.893)">SAO</span></span></div>
<div class="c r" style="left:316px;top:273px;width:55px;height:20px;line-height:23px;">000010</div>
<div class="c" style="left:375.8px;top:273px;width:176.2px;height:20px;line-height:23px;"><span class="w" style="width:47.16px"><span class="v" style="transform:scaleX(0.893)">ALEKSIĆ</span></span> <span class="w" style="width:26.06px"><span class="v" style="transform:scaleX(0.893)">IVAN</span></span></div>
<div class="c r" style="left:553px;top:273px;width:77px;height:20px;line-height:23px;">3.275,00</div>
<div class="c r" style="left:633px;top:273px;width:76px;height:20px;line-height:23px;">0,00</div>
<div class="c r" style="left:712px;top:273px;width:74px;height:20px;line-height:23px;">0,00</div>
<div class="c r" style="left:789px;top:273px;width:75px;height:20px;line-height:23px;">3.275,00</div>
<div class="c r" style="left:867px;top:273px;width:77px;height:20px;line-height:23px;">3.638,89</div>
<div class="c r" style="left:947px;top:273px;width:56px;height:20px;line-height:23px;">10,00</div>
<div class="c r" style="left:1006px;top:273px;width:72px;height:20px;line-height:23px;">363,89</div>
<div class="c" style="left:1214.8px;top:273px;width:70.2px;height:20px;line-height:23px;">1 - Novac</div>
<div class="c" style="left:1287.8px;top:273px;width:147.2px;height:20px;line-height:23px;"><span class="w" style="width:53.97px"><span class="v" style="transform:scaleX(0.893)">NAKNADA</span></span> <span class="w" style="width:62.04px"><span class="v" style="transform:scaleX(0.893)">TROŠKOVA</span></span> <span class="w" style="width:22.95px"><span class="v" style="transform:scaleX(0.893)">PRE</span></span></div>
<div style="left:0;top:294px;width:1436px;height:21px;background:#fff;border-bottom:1px solid #a3a3a3;"></div>
<div class="c r" style="left:0px;top:294px;width:39px;height:20px;line-height:23px;">001</div>
<div class="c" style="left:43.8px;top:294px;width:271.2px;height:20px;line-height:23px;"><span class="w" style="width:53.97px"><span class="v" style="transform:scaleX(0.893)">NAKNADA</span></span> <span class="w" style="width:62.04px"><span class="v" style="transform:scaleX(0.893)">TROŠKOVA</span></span> <span class="w" style="width:53.36px"><span class="v" style="transform:scaleX(0.893)">PREVOZA</span></span> <span class="w" style="width:8.06px"><span class="v" style="transform:scaleX(0.893)">U</span></span> <span class="w" style="width:46.52px"><span class="v" style="transform:scaleX(0.893)">JAVNOM</span></span> <span class="w" style="width:23.58px"><span class="v" style="transform:scaleX(0.893)">SAO</span></span></div>
<div class="c r" style="left:316px;top:294px;width:55px;height:20px;line-height:23px;">000011</div>
<div class="c" style="left:375.8px;top:294px;width:176.2px;height:20px;line-height:23px;"><span class="w" style="width:63.26px"><span class="v" style="transform:scaleX(0.893)">STOJKOVIĆ</span></span> <span class="w" style="width:40.94px"><span class="v" style="transform:scaleX(0.893)">MARIJA</span></span></div>
<div class="c r" style="left:553px;top:294px;width:77px;height:20px;line-height:23px;">3.275,00</div>
<div class="c r" style="left:633px;top:294px;width:76px;height:20px;line-height:23px;">0,00</div>
<div class="c r" style="left:712px;top:294px;width:74px;height:20px;line-height:23px;">0,00</div>
<div class="c r" style="left:789px;top:294px;width:75px;height:20px;line-height:23px;">3.275,00</div>
<div class="c r" style="left:867px;top:294px;width:77px;height:20px;line-height:23px;">3.638,89</div>
<div class="c r" style="left:947px;top:294px;width:56px;height:20px;line-height:23px;">10,00</div>
<div class="c r" style="left:1006px;top:294px;width:72px;height:20px;line-height:23px;">363,89</div>
<div class="c" style="left:1214.8px;top:294px;width:70.2px;height:20px;line-height:23px;">1 - Novac</div>
<div class="c" style="left:1287.8px;top:294px;width:147.2px;height:20px;line-height:23px;"><span class="w" style="width:53.97px"><span class="v" style="transform:scaleX(0.893)">NAKNADA</span></span> <span class="w" style="width:62.04px"><span class="v" style="transform:scaleX(0.893)">TROŠKOVA</span></span> <span class="w" style="width:22.95px"><span class="v" style="transform:scaleX(0.893)">PRE</span></span></div>
<div style="left:0;top:315px;width:1436px;height:21px;background:#f0f0f0;border-bottom:1px solid #a3a3a3;"></div>
<div class="c r" style="left:0px;top:315px;width:39px;height:20px;line-height:23px;">001</div>
<div class="c" style="left:43.8px;top:315px;width:271.2px;height:20px;line-height:23px;"><span class="w" style="width:53.97px"><span class="v" style="transform:scaleX(0.893)">NAKNADA</span></span> <span class="w" style="width:62.04px"><span class="v" style="transform:scaleX(0.893)">TROŠKOVA</span></span> <span class="w" style="width:53.36px"><span class="v" style="transform:scaleX(0.893)">PREVOZA</span></span> <span class="w" style="width:8.06px"><span class="v" style="transform:scaleX(0.893)">U</span></span> <span class="w" style="width:46.52px"><span class="v" style="transform:scaleX(0.893)">JAVNOM</span></span> <span class="w" style="width:23.58px"><span class="v" style="transform:scaleX(0.893)">SAO</span></span></div>
<div class="c r" style="left:316px;top:315px;width:55px;height:20px;line-height:23px;">000011</div>
<div class="c" style="left:375.8px;top:315px;width:176.2px;height:20px;line-height:23px;"><span class="w" style="width:63.26px"><span class="v" style="transform:scaleX(0.893)">STOJKOVIĆ</span></span> <span class="w" style="width:40.94px"><span class="v" style="transform:scaleX(0.893)">MARIJA</span></span></div>
<div class="c r" style="left:553px;top:315px;width:77px;height:20px;line-height:23px;">3.275,00</div>
<div class="c r" style="left:633px;top:315px;width:76px;height:20px;line-height:23px;">0,00</div>
<div class="c r" style="left:712px;top:315px;width:74px;height:20px;line-height:23px;">0,00</div>
<div class="c r" style="left:789px;top:315px;width:75px;height:20px;line-height:23px;">3.275,00</div>
<div class="c r" style="left:867px;top:315px;width:77px;height:20px;line-height:23px;">3.638,89</div>
<div class="c r" style="left:947px;top:315px;width:56px;height:20px;line-height:23px;">10,00</div>
<div class="c r" style="left:1006px;top:315px;width:72px;height:20px;line-height:23px;">363,89</div>
<div class="c" style="left:1214.8px;top:315px;width:70.2px;height:20px;line-height:23px;">1 - Novac</div>
<div class="c" style="left:1287.8px;top:315px;width:147.2px;height:20px;line-height:23px;"><span class="w" style="width:53.97px"><span class="v" style="transform:scaleX(0.893)">NAKNADA</span></span> <span class="w" style="width:62.04px"><span class="v" style="transform:scaleX(0.893)">TROŠKOVA</span></span> <span class="w" style="width:22.95px"><span class="v" style="transform:scaleX(0.893)">PRE</span></span></div>
<div style="left:0;top:336px;width:1436px;height:21px;background:#fff;border-bottom:1px solid #a3a3a3;"></div>
<div class="c r" style="left:0px;top:336px;width:39px;height:20px;line-height:23px;">001</div>
<div class="c" style="left:43.8px;top:336px;width:271.2px;height:20px;line-height:23px;"><span class="w" style="width:53.97px"><span class="v" style="transform:scaleX(0.893)">NAKNADA</span></span> <span class="w" style="width:62.04px"><span class="v" style="transform:scaleX(0.893)">TROŠKOVA</span></span> <span class="w" style="width:53.36px"><span class="v" style="transform:scaleX(0.893)">PREVOZA</span></span> <span class="w" style="width:8.06px"><span class="v" style="transform:scaleX(0.893)">U</span></span> <span class="w" style="width:46.52px"><span class="v" style="transform:scaleX(0.893)">JAVNOM</span></span> <span class="w" style="width:23.58px"><span class="v" style="transform:scaleX(0.893)">SAO</span></span></div>
<div class="c r" style="left:316px;top:336px;width:55px;height:20px;line-height:23px;">000012</div>
<div class="c" style="left:375.8px;top:336px;width:176.2px;height:20px;line-height:23px;"><span class="w" style="width:56.45px"><span class="v" style="transform:scaleX(0.893)">PETKOVIĆ</span></span>  <span class="w" style="width:33.50px"><span class="v" style="transform:scaleX(0.893)">IVANA</span></span></div>
<div class="c r" style="left:553px;top:336px;width:77px;height:20px;line-height:23px;">3.275,00</div>
<div class="c r" style="left:633px;top:336px;width:76px;height:20px;line-height:23px;">0,00</div>
<div class="c r" style="left:712px;top:336px;width:74px;height:20px;line-height:23px;">0,00</div>
<div class="c r" style="left:789px;top:336px;width:75px;height:20px;line-height:23px;">3.275,00</div>
<div class="c r" style="left:867px;top:336px;width:77px;height:20px;line-height:23px;">3.638,89</div>
<div class="c r" style="left:947px;top:336px;width:56px;height:20px;line-height:23px;">10,00</div>
<div class="c r" style="left:1006px;top:336px;width:72px;height:20px;line-height:23px;">363,89</div>
<div class="c" style="left:1214.8px;top:336px;width:70.2px;height:20px;line-height:23px;">1 - Novac</div>
<div class="c" style="left:1287.8px;top:336px;width:147.2px;height:20px;line-height:23px;"><span class="w" style="width:53.97px"><span class="v" style="transform:scaleX(0.893)">NAKNADA</span></span> <span class="w" style="width:62.04px"><span class="v" style="transform:scaleX(0.893)">TROŠKOVA</span></span> <span class="w" style="width:22.95px"><span class="v" style="transform:scaleX(0.893)">PRE</span></span></div>
<div style="left:0;top:357px;width:1436px;height:21px;background:#f0f0f0;border-bottom:1px solid #a3a3a3;"></div>
<div class="c r" style="left:0px;top:357px;width:39px;height:20px;line-height:23px;">001</div>
<div class="c" style="left:43.8px;top:357px;width:271.2px;height:20px;line-height:23px;"><span class="w" style="width:53.97px"><span class="v" style="transform:scaleX(0.893)">NAKNADA</span></span> <span class="w" style="width:62.04px"><span class="v" style="transform:scaleX(0.893)">TROŠKOVA</span></span> <span class="w" style="width:53.36px"><span class="v" style="transform:scaleX(0.893)">PREVOZA</span></span> <span class="w" style="width:8.06px"><span class="v" style="transform:scaleX(0.893)">U</span></span> <span class="w" style="width:46.52px"><span class="v" style="transform:scaleX(0.893)">JAVNOM</span></span> <span class="w" style="width:23.58px"><span class="v" style="transform:scaleX(0.893)">SAO</span></span></div>
<div class="c r" style="left:316px;top:357px;width:55px;height:20px;line-height:23px;">000012</div>
<div class="c" style="left:375.8px;top:357px;width:176.2px;height:20px;line-height:23px;"><span class="w" style="width:56.45px"><span class="v" style="transform:scaleX(0.893)">PETKOVIĆ</span></span>  <span class="w" style="width:33.50px"><span class="v" style="transform:scaleX(0.893)">IVANA</span></span></div>
<div class="c r" style="left:553px;top:357px;width:77px;height:20px;line-height:23px;">3.275,00</div>
<div class="c r" style="left:633px;top:357px;width:76px;height:20px;line-height:23px;">0,00</div>
<div class="c r" style="left:712px;top:357px;width:74px;height:20px;line-height:23px;">0,00</div>
<div class="c r" style="left:789px;top:357px;width:75px;height:20px;line-height:23px;">3.275,00</div>
<div class="c r" style="left:867px;top:357px;width:77px;height:20px;line-height:23px;">3.638,89</div>
<div class="c r" style="left:947px;top:357px;width:56px;height:20px;line-height:23px;">10,00</div>
<div class="c r" style="left:1006px;top:357px;width:72px;height:20px;line-height:23px;">363,89</div>
<div class="c" style="left:1214.8px;top:357px;width:70.2px;height:20px;line-height:23px;">1 - Novac</div>
<div class="c" style="left:1287.8px;top:357px;width:147.2px;height:20px;line-height:23px;"><span class="w" style="width:53.97px"><span class="v" style="transform:scaleX(0.893)">NAKNADA</span></span> <span class="w" style="width:62.04px"><span class="v" style="transform:scaleX(0.893)">TROŠKOVA</span></span> <span class="w" style="width:22.95px"><span class="v" style="transform:scaleX(0.893)">PRE</span></span></div>
<div style="left:0;top:378px;width:1436px;height:21px;background:#fff;border-bottom:1px solid #a3a3a3;"></div>
<div class="c r" style="left:0px;top:378px;width:39px;height:20px;line-height:23px;">001</div>
<div class="c" style="left:43.8px;top:378px;width:271.2px;height:20px;line-height:23px;"><span class="w" style="width:53.97px"><span class="v" style="transform:scaleX(0.893)">NAKNADA</span></span> <span class="w" style="width:62.04px"><span class="v" style="transform:scaleX(0.893)">TROŠKOVA</span></span> <span class="w" style="width:53.36px"><span class="v" style="transform:scaleX(0.893)">PREVOZA</span></span> <span class="w" style="width:8.06px"><span class="v" style="transform:scaleX(0.893)">U</span></span> <span class="w" style="width:46.52px"><span class="v" style="transform:scaleX(0.893)">JAVNOM</span></span> <span class="w" style="width:23.58px"><span class="v" style="transform:scaleX(0.893)">SAO</span></span></div>
<div class="c r" style="left:316px;top:378px;width:55px;height:20px;line-height:23px;">000013</div>
<div class="c" style="left:375.8px;top:378px;width:176.2px;height:20px;line-height:23px;"><span class="w" style="width:47.78px"><span class="v" style="transform:scaleX(0.893)">JAŠOVIĆ</span></span> <span class="w" style="width:75.07px"><span class="v" style="transform:scaleX(0.893)">ALEKSANDAR</span></span></div>
<div class="c r" style="left:553px;top:378px;width:77px;height:20px;line-height:23px;">3.275,00</div>
<div class="c r" style="left:633px;top:378px;width:76px;height:20px;line-height:23px;">0,00</div>
<div class="c r" style="left:712px;top:378px;width:74px;height:20px;line-height:23px;">0,00</div>
<div class="c r" style="left:789px;top:378px;width:75px;height:20px;line-height:23px;">3.275,00</div>
<div class="c r" style="left:867px;top:378px;width:77px;height:20px;line-height:23px;">3.638,89</div>
<div class="c r" style="left:947px;top:378px;width:56px;height:20px;line-height:23px;">10,00</div>
<div class="c r" style="left:1006px;top:378px;width:72px;height:20px;line-height:23px;">363,89</div>
<div class="c" style="left:1214.8px;top:378px;width:70.2px;height:20px;line-height:23px;">1 - Novac</div>
<div class="c" style="left:1287.8px;top:378px;width:147.2px;height:20px;line-height:23px;"><span class="w" style="width:53.97px"><span class="v" style="transform:scaleX(0.893)">NAKNADA</span></span> <span class="w" style="width:62.04px"><span class="v" style="transform:scaleX(0.893)">TROŠKOVA</span></span> <span class="w" style="width:22.95px"><span class="v" style="transform:scaleX(0.893)">PRE</span></span></div>
<div style="left:0;top:399px;width:1436px;height:21px;background:#f0f0f0;border-bottom:1px solid #a3a3a3;"></div>
<div class="c r" style="left:0px;top:399px;width:39px;height:20px;line-height:23px;">001</div>
<div class="c" style="left:43.8px;top:399px;width:271.2px;height:20px;line-height:23px;"><span class="w" style="width:53.97px"><span class="v" style="transform:scaleX(0.893)">NAKNADA</span></span> <span class="w" style="width:62.04px"><span class="v" style="transform:scaleX(0.893)">TROŠKOVA</span></span> <span class="w" style="width:53.36px"><span class="v" style="transform:scaleX(0.893)">PREVOZA</span></span> <span class="w" style="width:8.06px"><span class="v" style="transform:scaleX(0.893)">U</span></span> <span class="w" style="width:46.52px"><span class="v" style="transform:scaleX(0.893)">JAVNOM</span></span> <span class="w" style="width:23.58px"><span class="v" style="transform:scaleX(0.893)">SAO</span></span></div>
<div class="c r" style="left:316px;top:399px;width:55px;height:20px;line-height:23px;">000013</div>
<div class="c" style="left:375.8px;top:399px;width:176.2px;height:20px;line-height:23px;"><span class="w" style="width:47.78px"><span class="v" style="transform:scaleX(0.893)">JAŠOVIĆ</span></span> <span class="w" style="width:75.07px"><span class="v" style="transform:scaleX(0.893)">ALEKSANDAR</span></span></div>
<div class="c r" style="left:553px;top:399px;width:77px;height:20px;line-height:23px;">3.275,00</div>
<div class="c r" style="left:633px;top:399px;width:76px;height:20px;line-height:23px;">0,00</div>
<div class="c r" style="left:712px;top:399px;width:74px;height:20px;line-height:23px;">0,00</div>
<div class="c r" style="left:789px;top:399px;width:75px;height:20px;line-height:23px;">3.275,00</div>
<div class="c r" style="left:867px;top:399px;width:77px;height:20px;line-height:23px;">3.638,89</div>
<div class="c r" style="left:947px;top:399px;width:56px;height:20px;line-height:23px;">10,00</div>
<div class="c r" style="left:1006px;top:399px;width:72px;height:20px;line-height:23px;">363,89</div>
<div class="c" style="left:1214.8px;top:399px;width:70.2px;height:20px;line-height:23px;">1 - Novac</div>
<div class="c" style="left:1287.8px;top:399px;width:147.2px;height:20px;line-height:23px;"><span class="w" style="width:53.97px"><span class="v" style="transform:scaleX(0.893)">NAKNADA</span></span> <span class="w" style="width:62.04px"><span class="v" style="transform:scaleX(0.893)">TROŠKOVA</span></span> <span class="w" style="width:22.95px"><span class="v" style="transform:scaleX(0.893)">PRE</span></span></div>
<div style="left:0;top:420px;width:1436px;height:21px;background:#fff;border-bottom:1px solid #a3a3a3;"></div>
<div class="c r" style="left:0px;top:420px;width:39px;height:20px;line-height:23px;">001</div>
<div class="c" style="left:43.8px;top:420px;width:271.2px;height:20px;line-height:23px;"><span class="w" style="width:53.97px"><span class="v" style="transform:scaleX(0.893)">NAKNADA</span></span> <span class="w" style="width:62.04px"><span class="v" style="transform:scaleX(0.893)">TROŠKOVA</span></span> <span class="w" style="width:53.36px"><span class="v" style="transform:scaleX(0.893)">PREVOZA</span></span> <span class="w" style="width:8.06px"><span class="v" style="transform:scaleX(0.893)">U</span></span> <span class="w" style="width:46.52px"><span class="v" style="transform:scaleX(0.893)">JAVNOM</span></span> <span class="w" style="width:23.58px"><span class="v" style="transform:scaleX(0.893)">SAO</span></span></div>
<div class="c r" style="left:316px;top:420px;width:55px;height:20px;line-height:23px;">000014</div>
<div class="c" style="left:375.8px;top:420px;width:176.2px;height:20px;line-height:23px;"><span class="w" style="width:63.29px"><span class="v" style="transform:scaleX(0.893)">BELOŠEVIĆ</span></span> <span class="w" style="width:47.13px"><span class="v" style="transform:scaleX(0.893)">BUDIMIR</span></span></div>
<div class="c r" style="left:553px;top:420px;width:77px;height:20px;line-height:23px;">3.275,00</div>
<div class="c r" style="left:633px;top:420px;width:76px;height:20px;line-height:23px;">0,00</div>
<div class="c r" style="left:712px;top:420px;width:74px;height:20px;line-height:23px;">0,00</div>
<div class="c r" style="left:789px;top:420px;width:75px;height:20px;line-height:23px;">3.275,00</div>
<div class="c r" style="left:867px;top:420px;width:77px;height:20px;line-height:23px;">3.638,89</div>
<div class="c r" style="left:947px;top:420px;width:56px;height:20px;line-height:23px;">10,00</div>
<div class="c r" style="left:1006px;top:420px;width:72px;height:20px;line-height:23px;">363,89</div>
<div class="c" style="left:1214.8px;top:420px;width:70.2px;height:20px;line-height:23px;">1 - Novac</div>
<div class="c" style="left:1287.8px;top:420px;width:147.2px;height:20px;line-height:23px;"><span class="w" style="width:53.97px"><span class="v" style="transform:scaleX(0.893)">NAKNADA</span></span> <span class="w" style="width:62.04px"><span class="v" style="transform:scaleX(0.893)">TROŠKOVA</span></span> <span class="w" style="width:22.95px"><span class="v" style="transform:scaleX(0.893)">PRE</span></span></div>
<div style="left:0;top:441px;width:1436px;height:21px;background:#f0f0f0;border-bottom:1px solid #a3a3a3;"></div>
<div class="c r" style="left:0px;top:441px;width:39px;height:20px;line-height:23px;">001</div>
<div class="c" style="left:43.8px;top:441px;width:271.2px;height:20px;line-height:23px;"><span class="w" style="width:53.97px"><span class="v" style="transform:scaleX(0.893)">NAKNADA</span></span> <span class="w" style="width:62.04px"><span class="v" style="transform:scaleX(0.893)">TROŠKOVA</span></span> <span class="w" style="width:53.36px"><span class="v" style="transform:scaleX(0.893)">PREVOZA</span></span> <span class="w" style="width:8.06px"><span class="v" style="transform:scaleX(0.893)">U</span></span> <span class="w" style="width:46.52px"><span class="v" style="transform:scaleX(0.893)">JAVNOM</span></span> <span class="w" style="width:23.58px"><span class="v" style="transform:scaleX(0.893)">SAO</span></span></div>
<div class="c r" style="left:316px;top:441px;width:55px;height:20px;line-height:23px;">000014</div>
<div class="c" style="left:375.8px;top:441px;width:176.2px;height:20px;line-height:23px;"><span class="w" style="width:63.29px"><span class="v" style="transform:scaleX(0.893)">BELOŠEVIĆ</span></span> <span class="w" style="width:47.13px"><span class="v" style="transform:scaleX(0.893)">BUDIMIR</span></span></div>
<div class="c r" style="left:553px;top:441px;width:77px;height:20px;line-height:23px;">3.275,00</div>
<div class="c r" style="left:633px;top:441px;width:76px;height:20px;line-height:23px;">0,00</div>
<div class="c r" style="left:712px;top:441px;width:74px;height:20px;line-height:23px;">0,00</div>
<div class="c r" style="left:789px;top:441px;width:75px;height:20px;line-height:23px;">3.275,00</div>
<div class="c r" style="left:867px;top:441px;width:77px;height:20px;line-height:23px;">3.638,89</div>
<div class="c r" style="left:947px;top:441px;width:56px;height:20px;line-height:23px;">10,00</div>
<div class="c r" style="left:1006px;top:441px;width:72px;height:20px;line-height:23px;">363,89</div>
<div class="c" style="left:1214.8px;top:441px;width:70.2px;height:20px;line-height:23px;">1 - Novac</div>
<div class="c" style="left:1287.8px;top:441px;width:147.2px;height:20px;line-height:23px;"><span class="w" style="width:53.97px"><span class="v" style="transform:scaleX(0.893)">NAKNADA</span></span> <span class="w" style="width:62.04px"><span class="v" style="transform:scaleX(0.893)">TROŠKOVA</span></span> <span class="w" style="width:22.95px"><span class="v" style="transform:scaleX(0.893)">PRE</span></span></div>
<div style="left:0;top:462px;width:1436px;height:21px;background:#fff;border-bottom:1px solid #a3a3a3;"></div>
<div class="c r" style="left:0px;top:462px;width:39px;height:20px;line-height:23px;">001</div>
<div class="c" style="left:43.8px;top:462px;width:271.2px;height:20px;line-height:23px;"><span class="w" style="width:53.97px"><span class="v" style="transform:scaleX(0.893)">NAKNADA</span></span> <span class="w" style="width:62.04px"><span class="v" style="transform:scaleX(0.893)">TROŠKOVA</span></span> <span class="w" style="width:53.36px"><span class="v" style="transform:scaleX(0.893)">PREVOZA</span></span> <span class="w" style="width:8.06px"><span class="v" style="transform:scaleX(0.893)">U</span></span> <span class="w" style="width:46.52px"><span class="v" style="transform:scaleX(0.893)">JAVNOM</span></span> <span class="w" style="width:23.58px"><span class="v" style="transform:scaleX(0.893)">SAO</span></span></div>
<div class="c r" style="left:316px;top:462px;width:55px;height:20px;line-height:23px;">000015</div>
<div class="c" style="left:375.8px;top:462px;width:176.2px;height:20px;line-height:23px;"><span class="w" style="width:35.36px"><span class="v" style="transform:scaleX(0.893)">ĐOŠIĆ</span></span> <span class="w" style="width:45.91px"><span class="v" style="transform:scaleX(0.893)">MILOICA</span></span></div>
<div class="c r" style="left:553px;top:462px;width:77px;height:20px;line-height:23px;">3.275,00</div>
<div class="c r" style="left:633px;top:462px;width:76px;height:20px;line-height:23px;">0,00</div>
<div class="c r" style="left:712px;top:462px;width:74px;height:20px;line-height:23px;">0,00</div>
<div class="c r" style="left:789px;top:462px;width:75px;height:20px;line-height:23px;">3.275,00</div>
<div class="c r" style="left:867px;top:462px;width:77px;height:20px;line-height:23px;">3.638,89</div>
<div class="c r" style="left:947px;top:462px;width:56px;height:20px;line-height:23px;">10,00</div>
<div class="c r" style="left:1006px;top:462px;width:72px;height:20px;line-height:23px;">363,89</div>
<div class="c" style="left:1214.8px;top:462px;width:70.2px;height:20px;line-height:23px;">1 - Novac</div>
<div class="c" style="left:1287.8px;top:462px;width:147.2px;height:20px;line-height:23px;"><span class="w" style="width:53.97px"><span class="v" style="transform:scaleX(0.893)">NAKNADA</span></span> <span class="w" style="width:62.04px"><span class="v" style="transform:scaleX(0.893)">TROŠKOVA</span></span> <span class="w" style="width:22.95px"><span class="v" style="transform:scaleX(0.893)">PRE</span></span></div>
<div style="left:0;top:483px;width:1436px;height:21px;background:#f0f0f0;border-bottom:1px solid #a3a3a3;"></div>
<div class="c r" style="left:0px;top:483px;width:39px;height:20px;line-height:23px;">001</div>
<div class="c" style="left:43.8px;top:483px;width:271.2px;height:20px;line-height:23px;"><span class="w" style="width:53.97px"><span class="v" style="transform:scaleX(0.893)">NAKNADA</span></span> <span class="w" style="width:62.04px"><span class="v" style="transform:scaleX(0.893)">TROŠKOVA</span></span> <span class="w" style="width:53.36px"><span class="v" style="transform:scaleX(0.893)">PREVOZA</span></span> <span class="w" style="width:8.06px"><span class="v" style="transform:scaleX(0.893)">U</span></span> <span class="w" style="width:46.52px"><span class="v" style="transform:scaleX(0.893)">JAVNOM</span></span> <span class="w" style="width:23.58px"><span class="v" style="transform:scaleX(0.893)">SAO</span></span></div>
<div class="c r" style="left:316px;top:483px;width:55px;height:20px;line-height:23px;">000015</div>
<div class="c" style="left:375.8px;top:483px;width:176.2px;height:20px;line-height:23px;"><span class="w" style="width:35.36px"><span class="v" style="transform:scaleX(0.893)">ĐOŠIĆ</span></span> <span class="w" style="width:45.91px"><span class="v" style="transform:scaleX(0.893)">MILOICA</span></span></div>
<div class="c r" style="left:553px;top:483px;width:77px;height:20px;line-height:23px;">3.275,00</div>
<div class="c r" style="left:633px;top:483px;width:76px;height:20px;line-height:23px;">0,00</div>
<div class="c r" style="left:712px;top:483px;width:74px;height:20px;line-height:23px;">0,00</div>
<div class="c r" style="left:789px;top:483px;width:75px;height:20px;line-height:23px;">3.275,00</div>
<div class="c r" style="left:867px;top:483px;width:77px;height:20px;line-height:23px;">3.638,89</div>
<div class="c r" style="left:947px;top:483px;width:56px;height:20px;line-height:23px;">10,00</div>
<div class="c r" style="left:1006px;top:483px;width:72px;height:20px;line-height:23px;">363,89</div>
<div class="c" style="left:1214.8px;top:483px;width:70.2px;height:20px;line-height:23px;">1 - Novac</div>
<div class="c" style="left:1287.8px;top:483px;width:147.2px;height:20px;line-height:23px;"><span class="w" style="width:53.97px"><span class="v" style="transform:scaleX(0.893)">NAKNADA</span></span> <span class="w" style="width:62.04px"><span class="v" style="transform:scaleX(0.893)">TROŠKOVA</span></span> <span class="w" style="width:22.95px"><span class="v" style="transform:scaleX(0.893)">PRE</span></span></div>
<div style="left:41px;top:0;width:1px;height:504px;background:#a3a3a3;"></div>
<div style="left:315px;top:0;width:1px;height:504px;background:#a3a3a3;"></div>
<div style="left:373px;top:0;width:1px;height:504px;background:#a3a3a3;"></div>
<div style="left:552px;top:0;width:1px;height:504px;background:#a3a3a3;"></div>
<div style="left:632px;top:0;width:1px;height:504px;background:#a3a3a3;"></div>
<div style="left:711px;top:0;width:1px;height:504px;background:#a3a3a3;"></div>
<div style="left:788px;top:0;width:1px;height:504px;background:#a3a3a3;"></div>
<div style="left:866px;top:0;width:1px;height:504px;background:#a3a3a3;"></div>
<div style="left:946px;top:0;width:1px;height:504px;background:#a3a3a3;"></div>
<div style="left:1005px;top:0;width:1px;height:504px;background:#a3a3a3;"></div>
<div style="left:1080px;top:0;width:1px;height:504px;background:#a3a3a3;"></div>
<div style="left:1146px;top:0;width:1px;height:504px;background:#a3a3a3;"></div>
<div style="left:1212px;top:0;width:1px;height:504px;background:#a3a3a3;"></div>
<div style="left:1285px;top:0;width:1px;height:504px;background:#a3a3a3;"></div>
</div>
<div style="left:1668px;top:405px;width:19px;height:543px;background:#f0f0f0;"></div>
<div style="left:1669px;top:424px;width:17px;height:26px;background:#cdcdcd;"></div>
<svg style="left:1673px;top:412px" width="9" height="6" viewBox="0 0 9 6"><path d="M0.800 5.200l3.700-3.800 3.700 3.800" fill="none" stroke="#505050" stroke-width="2.100"/></svg>
<svg style="left:1673px;top:936px" width="9" height="6" viewBox="0 0 9 6"><path d="M0.800 0.800l3.700 3.800 3.700-3.800" fill="none" stroke="#505050" stroke-width="2.100"/></svg>
<div style="left:232px;top:921px;width:1436px;height:28px;background:#dcdcdc;border-top:1px solid #7f9fd8;border-bottom:1px solid #7f9fd8;"></div>
<div class="c r" style="left:787px;top:926px;width:76px;height:19px;line-height:18px;border:1px solid #8aa6dc;background:#f2f2f2;padding-right:3px;">1.447.550,0(</div>
<div class="c r" style="left:866px;top:926px;width:76px;height:19px;line-height:18px;border:1px solid #8aa6dc;background:#f2f2f2;padding-right:3px;">0,00</div>
<div class="c r" style="left:945px;top:926px;width:74px;height:19px;line-height:18px;border:1px solid #8aa6dc;background:#f2f2f2;padding-right:3px;">0,00</div>
<div class="c r" style="left:1022px;top:926px;width:75px;height:19px;line-height:18px;border:1px solid #8aa6dc;background:#f2f2f2;padding-right:3px;">1.447.550,0</div>
<div class="c r" style="left:1100px;top:926px;width:77px;height:19px;line-height:18px;border:1px solid #8aa6dc;background:#f2f2f2;padding-right:3px;">1.608.389,3(</div>
<div class="c r" style="left:1240px;top:926px;width:71px;height:19px;line-height:18px;border:1px solid #8aa6dc;background:#f2f2f2;padding-right:3px;">160.839,38</div>
<div style="left:232px;top:950px;width:1455px;height:19px;background:#fff;"></div>
<div style="left:233px;top:950px;width:17px;height:19px;background:#ececec;"></div>
<svg style="left:232.5px;top:949.5px" width="18" height="20" viewBox="0 0 18 20"><path d="M4.500 6.500v7" stroke="#7e7e7e" stroke-width="1.300"/><path d="M9.500 6.500v7l-4-3.500z M14 6.500v7l-4-3.500z" fill="#7e7e7e"/></svg>
<div style="left:252px;top:950px;width:17px;height:19px;background:#ececec;"></div>
<svg style="left:251.5px;top:949.5px" width="18" height="20" viewBox="0 0 18 20"><path d="M9 6.500v7l-4.200-3.500z M13.700 6.500v7l-4.200-3.500z" fill="#7e7e7e"/></svg>
<div style="left:271px;top:950px;width:17px;height:19px;background:#ececec;"></div>
<svg style="left:270.5px;top:949.5px" width="18" height="20" viewBox="0 0 18 20"><path d="M10.500 6.500v7l-4.200-3.500z" fill="#7e7e7e"/></svg>
<div style="left:296px;top:949.67px;line-height:20px;height:20px;font-size:12.5px;color:#000;">1 od 442</div>
<div style="left:354px;top:950px;width:17px;height:19px;background:#dedede;"></div>
<svg style="left:353.5px;top:949.5px" width="18" height="20" viewBox="0 0 18 20"><path d="M7.500 6.500v7l4.200-3.500z" fill="#1a1a1a"/></svg>
<div style="left:373px;top:950px;width:17px;height:19px;background:#dedede;"></div>
<svg style="left:372.5px;top:949.5px" width="18" height="20" viewBox="0 0 18 20"><path d="M4.500 6.500v7l4.200-3.500z M9.200 6.500v7l4.200-3.500z" fill="#1a1a1a"/></svg>
<div style="left:392px;top:950px;width:17px;height:19px;background:#dedede;"></div>
<svg style="left:391.5px;top:949.5px" width="18" height="20" viewBox="0 0 18 20"><path d="M13.700 6.500v7" stroke="#1a1a1a" stroke-width="1.300"/><path d="M4.200 6.500v7l4-3.500z M8.700 6.500v7l4-3.500z" fill="#1a1a1a"/></svg>
<div style="left:411px;top:950px;width:17px;height:19px;background:#ececec;"></div>
<svg style="left:410.5px;top:949.5px" width="18" height="20" viewBox="0 0 18 20"><path d="M9 5v10M4 10h10" stroke="#8e8e8e" stroke-width="1.800"/></svg>
<div style="left:430px;top:950px;width:17px;height:19px;background:#ececec;"></div>
<svg style="left:429.5px;top:949.5px" width="18" height="20" viewBox="0 0 18 20"><path d="M4 10h10" stroke="#8e8e8e" stroke-width="1.800"/></svg>
<div style="left:449px;top:950px;width:17px;height:19px;background:#ececec;"></div>
<svg style="left:448.5px;top:949.5px" width="18" height="20" viewBox="0 0 18 20"><path d="M5.500 11.500l3.500-3.800 3.500 3.800z" fill="#7e7e7e"/></svg>
<div style="left:468px;top:950px;width:17px;height:19px;background:#ececec;"></div>
<svg style="left:467.5px;top:949.5px" width="18" height="20" viewBox="0 0 18 20"><path d="M4 10.500l3.200 3.200L14 6" fill="none" stroke="#b4b4b4" stroke-width="1.800"/></svg>
<div style="left:487px;top:950px;width:17px;height:19px;background:#ececec;"></div>
<svg style="left:486.5px;top:949.5px" width="18" height="20" viewBox="0 0 18 20"><path d="M5.500 6.500l7 7M12.500 6.500l-7 7" stroke="#8e8e8e" stroke-width="1.600"/></svg>
<div style="left:506px;top:950px;width:17px;height:19px;background:#dedede;"></div>
<svg style="left:505.5px;top:949.5px" width="18" height="20" viewBox="0 0 18 20"><path d="M4 14v-2.500c0-2 1.500-3.500 3.500-3.500h3" fill="none" stroke="#111" stroke-width="2"/><path d="M9.500 4.500l5 3.500-5 3.500z" fill="#111"/></svg>
<div style="left:525px;top:950px;width:17px;height:19px;background:#dedede;"></div>
<svg style="left:524.5px;top:949.5px" width="18" height="20" viewBox="0 0 18 20"><line x1="9" y1="10" x2="14.00" y2="10.00" stroke="#111" stroke-width="1.700"/><line x1="9" y1="10" x2="12.54" y2="13.54" stroke="#111" stroke-width="1.700"/><line x1="9" y1="10" x2="9.00" y2="15.00" stroke="#111" stroke-width="1.700"/><line x1="9" y1="10" x2="5.46" y2="13.54" stroke="#111" stroke-width="1.700"/><line x1="9" y1="10" x2="4.00" y2="10.00" stroke="#111" stroke-width="1.700"/><line x1="9" y1="10" x2="5.46" y2="6.46" stroke="#111" stroke-width="1.700"/><line x1="9" y1="10" x2="9.00" y2="5.00" stroke="#111" stroke-width="1.700"/><line x1="9" y1="10" x2="12.54" y2="6.46" stroke="#111" stroke-width="1.700"/></svg>
<div style="left:544px;top:950px;width:17px;height:19px;background:#ececec;"></div>
<svg style="left:543.5px;top:949.5px" width="18" height="20" viewBox="0 0 18 20"><line x1="9" y1="10" x2="14.00" y2="10.00" stroke="#666" stroke-width="1.100"/><line x1="9" y1="10" x2="12.54" y2="13.54" stroke="#666" stroke-width="1.100"/><line x1="9" y1="10" x2="9.00" y2="15.00" stroke="#666" stroke-width="1.100"/><line x1="9" y1="10" x2="5.46" y2="13.54" stroke="#666" stroke-width="1.100"/><line x1="9" y1="10" x2="4.00" y2="10.00" stroke="#666" stroke-width="1.100"/><line x1="9" y1="10" x2="5.46" y2="6.46" stroke="#666" stroke-width="1.100"/><line x1="9" y1="10" x2="9.00" y2="5.00" stroke="#666" stroke-width="1.100"/><line x1="9" y1="10" x2="12.54" y2="6.46" stroke="#666" stroke-width="1.100"/><path d="M3 4l2 2" stroke="#666"/></svg>
<div style="left:563px;top:950px;width:17px;height:19px;background:#dedede;"></div>
<svg style="left:562.5px;top:949.5px" width="18" height="20" viewBox="0 0 18 20"><path d="M3.500 5h11l-4.200 5v5l-2.600-1.500v-3.500z" fill="#f28a1e"/></svg>
<div style="left:581px;top:950px;width:1087px;height:19px;background:#f0f0f0;"></div>
<div style="left:636px;top:950px;width:1032px;height:19px;background:#f0f0f0;"></div>
<div style="left:655px;top:951px;width:791px;height:17px;background:#cdcdcd;"></div>
<svg style="left:643px;top:955px" width="6" height="9" viewBox="0 0 6 9"><path d="M5 0.700l-4 3.800 4 3.800" fill="none" stroke="#505050" stroke-width="1.500"/></svg>
<svg style="left:1655px;top:955px" width="6" height="9" viewBox="0 0 6 9"><path d="M1 0.700l4 3.800-4 3.800" fill="none" stroke="#505050" stroke-width="1.500"/></svg>
<div style="left:1668px;top:949px;width:19px;height:21px;background:#f0f0f0;"></div>
<div style="left:234px;top:974px;width:87px;height:27px;background:#e1e1e1;border:1px solid #adadad;"></div>
<div style="left:234px;top:977.72px;line-height:20px;height:20px;font-size:13.8px;color:#1a1a1a;width:87px;text-align:center;">F5 - Novi</div>
<div style="left:324px;top:973px;width:100px;height:30px;background:#f0f0f0;border:1px solid #d2d2d2;box-shadow:1px 1px 0 #fafafa;background:linear-gradient(#fafafa,#f2f2f2 50%,#e6e6e6);"></div>
<div style="left:328px;top:981px;width:12px;height:12px;border:1px solid #222;background:#fff;"></div>
<svg style="left:329.5px;top:982.5px" width="9" height="9" viewBox="0 0 9 9"><path d="M0.800 4.200l2.600 2.800L8.300 1" fill="none" stroke="#111" stroke-width="2.200"/></svg>
<div style="left:347px;top:977.67px;line-height:20px;height:20px;font-size:12.5px;color:#000;">Svi statusi</div>
<div style="left:427px;top:973px;width:112px;height:30px;background:#f0f0f0;border:1px solid #d2d2d2;box-shadow:1px 1px 0 #fafafa;background:linear-gradient(#fafafa,#f2f2f2 50%,#e6e6e6);"></div>
<div style="left:430px;top:981px;width:12px;height:12px;border:1px solid #9a9a9a;background:#f4f4f4;"></div>
<div style="left:451px;top:977.67px;line-height:20px;height:20px;font-size:12.5px;color:#a8a8a8;"><span class="w" style="width:6.82px"><span class="v" style="transform:scaleX(0.893)">F</span></span>2 - <span class="w" style="width:42.18px"><span class="v" style="transform:scaleX(0.893)">IZMENE</span></span></div>
<div style="left:541px;top:973px;width:517px;height:30px;background:#f0f0f0;border:1px solid #d2d2d2;box-shadow:1px 1px 0 #fafafa;background:linear-gradient(#fafafa,#f2f2f2 50%,#e6e6e6);"></div>
<div style="left:1060px;top:972px;width:112px;height:31px;border:1px solid #dadada;background:#f4f4f4;"></div>
<div style="left:1062px;top:974px;width:108px;height:27px;background:#cccccc;border:1px solid #c0c0c0;"></div>
<div style="left:1062px;top:978.29px;line-height:20px;height:20px;font-size:13.6px;color:#9a9a9a;width:108px;text-align:center;text-shadow:1px 1px 0 #f4f4f4;"><span class="w" style="width:7.73px"><span class="v" style="transform:scaleX(0.93)">F</span></span>ormiraj za sve</div>
<div style="left:1174px;top:972px;width:123px;height:31px;border:1px solid #dadada;background:#f4f4f4;"></div>
<div style="left:1176px;top:974px;width:119px;height:27px;background:#cccccc;border:1px solid #c0c0c0;"></div>
<div style="left:1176px;top:978.29px;line-height:20px;height:20px;font-size:13.6px;color:#9a9a9a;width:119px;text-align:center;text-shadow:1px 1px 0 #f4f4f4;"><span class="w" style="width:8.44px"><span class="v" style="transform:scaleX(0.93)">P</span></span>otvrdi stavku</div>
<div style="left:1299px;top:972px;width:112px;height:31px;border:1px solid #dadada;background:#f4f4f4;"></div>
<div style="left:1301px;top:974px;width:108px;height:27px;background:#cccccc;border:1px solid #c0c0c0;"></div>
<div style="left:1301px;top:978.29px;line-height:20px;height:20px;font-size:13.6px;color:#9a9a9a;width:108px;text-align:center;text-shadow:1px 1px 0 #f4f4f4;"><span class="w" style="width:8.44px"><span class="v" style="transform:scaleX(0.93)">P</span></span>otvrdi <span class="w" style="width:25.30px"><span class="v" style="transform:scaleX(0.93)">SVE</span></span></div>
<div style="left:1413px;top:972px;width:91px;height:31px;border:1px solid #dadada;background:#f4f4f4;"></div>
<div style="left:1415px;top:974px;width:87px;height:27px;background:#cccccc;border:1px solid #c0c0c0;"></div>
<div style="left:1415px;top:978.29px;line-height:20px;height:20px;font-size:13.6px;color:#9a9a9a;width:87px;text-align:center;text-shadow:1px 1px 0 #f4f4f4;"><span class="w" style="width:8.44px"><span class="v" style="transform:scaleX(0.93)">V</span></span>rati <span class="w" style="width:25.30px"><span class="v" style="transform:scaleX(0.93)">SVE</span></span></div>
<div style="left:1505px;top:972px;width:91px;height:31px;border:1px solid #dadada;background:#f4f4f4;"></div>
<div style="left:1507px;top:974px;width:87px;height:27px;background:#cccccc;border:1px solid #c0c0c0;"></div>
<div style="left:1507px;top:978.29px;line-height:20px;height:20px;font-size:13.6px;color:#9a9a9a;width:87px;text-align:center;text-shadow:1px 1px 0 #f4f4f4;"><span class="w" style="width:8.44px"><span class="v" style="transform:scaleX(0.93)">V</span></span>rati stavku</div>
<div style="left:1597px;top:972px;width:90px;height:31px;border:1px solid #dadada;background:#f4f4f4;"></div>
<div style="left:1599px;top:974px;width:86px;height:27px;background:#cccccc;border:1px solid #c0c0c0;"></div>
<div style="left:1599px;top:978.29px;line-height:20px;height:20px;font-size:13.6px;color:#9a9a9a;width:86px;text-align:center;text-shadow:1px 1px 0 #f4f4f4;"><span class="w" style="width:9.84px"><span class="v" style="transform:scaleX(0.93)">O</span></span>briši sve</div>
<div style="left:1688px;top:124px;width:230px;height:880px;background:#f0f0f0;border-left:2px solid #a8a8a8;"></div>
<div style="left:1689px;top:1003px;width:229px;height:2px;background:#a8a8a8;"></div>
<div style="left:1689px;top:96px;width:47px;height:68px;background:#f0f0f0;border:1px solid #a8a8a8;border-top:3px solid #2b579a;border-right:none;clip-path:polygon(5px 0,100% 0,100% 100%,0 100%,0 5px);"></div>
<div style="left:1735px;top:96px;width:1px;height:28px;background:#a8a8a8;"></div>
<div style="left:1696px;top:102.03px;line-height:20px;height:20px;font-size:12.9px;color:#000;">Planer</div>
<div style="left:1737px;top:95px;width:71px;height:28px;background:linear-gradient(#fbfbfb,#f0f0f0 55%,#dedede);border:1px solid #adadad;border-bottom:none;clip-path:polygon(7px 0,100% 0,100% 100%,0 100%,0 7px);"></div>
<svg style="left:1737px;top:95px" width="8" height="8"><path d="M0.5 7.5l7-7" stroke="#adadad" fill="none"/></svg>
<div style="left:1744px;top:102.03px;line-height:20px;height:20px;font-size:12.9px;color:#000;">Za štampu</div>
<div style="left:1809px;top:95px;width:56px;height:28px;background:linear-gradient(#fbfbfb,#f0f0f0 55%,#dedede);border:1px solid #adadad;border-bottom:none;clip-path:polygon(7px 0,100% 0,100% 100%,0 100%,0 7px);"></div>
<svg style="left:1809px;top:95px" width="8" height="8"><path d="M0.5 7.5l7-7" stroke="#adadad" fill="none"/></svg>
<div style="left:1816px;top:102.03px;line-height:20px;height:20px;font-size:12.9px;color:#000;">Tajmeri</div>
<div style="left:1733px;top:124px;width:165px;height:38px;background:#fafafa;border-left:1px solid #a8a8a8;border-top:1px solid #c4c4c4;"></div>
<div style="left:1734px;top:161px;width:164px;height:3px;background:#c6c6c6;"></div>
<div style="left:1690px;top:163px;width:44px;height:1px;background:#a8a8a8;"></div>
<div style="left:1734px;top:134.67px;line-height:20px;height:20px;font-size:12.5px;color:#1a1a1a;width:164px;text-align:center;">Thursday, August 8</div>
<div style="left:1733px;top:164px;width:165px;height:840px;background:#fff;border-left:1px solid #a8a8a8;"></div>
<div style="left:1741px;top:164px;width:1px;height:840px;background:#000;"></div>
<div style="left:1742px;top:187px;width:156px;height:1px;background:#a8a8a8;"></div>
<div style="left:1742px;top:211px;width:156px;height:1px;background:#a8a8a8;"></div>
<div style="left:1742px;top:235px;width:156px;height:1px;background:#a8a8a8;"></div>
<div style="left:1742px;top:259px;width:156px;height:1px;background:#a8a8a8;"></div>
<div style="left:1742px;top:283px;width:156px;height:1px;background:#a8a8a8;"></div>
<div style="left:1742px;top:307px;width:156px;height:1px;background:#a8a8a8;"></div>
<div style="left:1742px;top:331px;width:156px;height:1px;background:#a8a8a8;"></div>
<div style="left:1742px;top:355px;width:156px;height:1px;background:#a8a8a8;"></div>
<div style="left:1742px;top:379px;width:156px;height:1px;background:#a8a8a8;"></div>
<div style="left:1742px;top:403px;width:156px;height:1px;background:#a8a8a8;"></div>
<div style="left:1742px;top:427px;width:156px;height:1px;background:#a8a8a8;"></div>
<div style="left:1742px;top:451px;width:156px;height:1px;background:#a8a8a8;"></div>
<div style="left:1742px;top:475px;width:156px;height:1px;background:#a8a8a8;"></div>
<div style="left:1742px;top:499px;width:156px;height:1px;background:#a8a8a8;"></div>
<div style="left:1742px;top:523px;width:156px;height:1px;background:#a8a8a8;"></div>
<div style="left:1742px;top:547px;width:156px;height:1px;background:#a8a8a8;"></div>
<div style="left:1742px;top:571px;width:156px;height:1px;background:#a8a8a8;"></div>
<div style="left:1742px;top:595px;width:156px;height:1px;background:#a8a8a8;"></div>
<div style="left:1742px;top:619px;width:156px;height:1px;background:#a8a8a8;"></div>
<div style="left:1742px;top:643px;width:156px;height:1px;background:#a8a8a8;"></div>
<div style="left:1742px;top:667px;width:156px;height:1px;background:#a8a8a8;"></div>
<div style="left:1742px;top:691px;width:156px;height:1px;background:#a8a8a8;"></div>
<div style="left:1742px;top:715px;width:156px;height:1px;background:#a8a8a8;"></div>
<div style="left:1742px;top:739px;width:156px;height:1px;background:#a8a8a8;"></div>
<div style="left:1742px;top:763px;width:156px;height:1px;background:#a8a8a8;"></div>
<div style="left:1742px;top:787px;width:156px;height:1px;background:#a8a8a8;"></div>
<div style="left:1742px;top:811px;width:156px;height:1px;background:#a8a8a8;"></div>
<div style="left:1742px;top:835px;width:156px;height:1px;background:#a8a8a8;"></div>
<div style="left:1742px;top:859px;width:156px;height:1px;background:#a8a8a8;"></div>
<div style="left:1742px;top:883px;width:156px;height:1px;background:#a8a8a8;"></div>
<div style="left:1742px;top:907px;width:156px;height:1px;background:#a8a8a8;"></div>
<div style="left:1742px;top:931px;width:156px;height:1px;background:#a8a8a8;"></div>
<div style="left:1742px;top:955px;width:156px;height:1px;background:#a8a8a8;"></div>
<div style="left:1742px;top:979px;width:156px;height:1px;background:#a8a8a8;"></div>
<div style="left:1680px;top:166.76px;line-height:20px;height:20px;font-size:16px;color:#111;width:34px;text-align:right;">4</div>
<div style="left:1717px;top:166.39px;line-height:20px;height:20px;font-size:8.1px;color:#222;letter-spacing:-0.5px;">00</div>
<div style="left:1716px;top:187px;width:11px;height:1px;background:#a8a8a8;"></div>
<div style="left:1696px;top:211px;width:31px;height:1px;background:#a8a8a8;"></div>
<div style="left:1680px;top:214.76px;line-height:20px;height:20px;font-size:16px;color:#111;width:34px;text-align:right;">5</div>
<div style="left:1717px;top:214.39px;line-height:20px;height:20px;font-size:8.1px;color:#222;letter-spacing:-0.5px;">00</div>
<div style="left:1716px;top:235px;width:11px;height:1px;background:#a8a8a8;"></div>
<div style="left:1696px;top:259px;width:31px;height:1px;background:#a8a8a8;"></div>
<div style="left:1680px;top:262.76px;line-height:20px;height:20px;font-size:16px;color:#111;width:34px;text-align:right;">6</div>
<div style="left:1717px;top:262.39px;line-height:20px;height:20px;font-size:8.1px;color:#222;letter-spacing:-0.5px;">00</div>
<div style="left:1716px;top:283px;width:11px;height:1px;background:#a8a8a8;"></div>
<div style="left:1696px;top:307px;width:31px;height:1px;background:#a8a8a8;"></div>
<div style="left:1680px;top:310.76px;line-height:20px;height:20px;font-size:16px;color:#111;width:34px;text-align:right;">7</div>
<div style="left:1717px;top:310.39px;line-height:20px;height:20px;font-size:8.1px;color:#222;letter-spacing:-0.5px;">00</div>
<div style="left:1716px;top:331px;width:11px;height:1px;background:#a8a8a8;"></div>
<div style="left:1696px;top:355px;width:31px;height:1px;background:#a8a8a8;"></div>
<div style="left:1680px;top:358.76px;line-height:20px;height:20px;font-size:16px;color:#111;width:34px;text-align:right;">8</div>
<div style="left:1717px;top:358.39px;line-height:20px;height:20px;font-size:8.1px;color:#222;letter-spacing:-0.5px;">00</div>
<div style="left:1716px;top:379px;width:11px;height:1px;background:#a8a8a8;"></div>
<div style="left:1696px;top:403px;width:31px;height:1px;background:#a8a8a8;"></div>
<div style="left:1680px;top:406.76px;line-height:20px;height:20px;font-size:16px;color:#111;width:34px;text-align:right;">9</div>
<div style="left:1717px;top:406.39px;line-height:20px;height:20px;font-size:8.1px;color:#222;letter-spacing:-0.5px;">00</div>
<div style="left:1716px;top:427px;width:11px;height:1px;background:#a8a8a8;"></div>
<div style="left:1696px;top:451px;width:31px;height:1px;background:#a8a8a8;"></div>
<div style="left:1680px;top:454.76px;line-height:20px;height:20px;font-size:16px;color:#111;width:34px;text-align:right;">10</div>
<div style="left:1717px;top:454.39px;line-height:20px;height:20px;font-size:8.1px;color:#222;letter-spacing:-0.5px;">00</div>
<div style="left:1716px;top:475px;width:11px;height:1px;background:#a8a8a8;"></div>
<div style="left:1696px;top:499px;width:31px;height:1px;background:#a8a8a8;"></div>
<div style="left:1680px;top:502.76px;line-height:20px;height:20px;font-size:16px;color:#111;width:34px;text-align:right;">11</div>
<div style="left:1717px;top:502.39px;line-height:20px;height:20px;font-size:8.1px;color:#222;letter-spacing:-0.5px;">00</div>
<div style="left:1716px;top:523px;width:11px;height:1px;background:#a8a8a8;"></div>
<div style="left:1696px;top:547px;width:31px;height:1px;background:#a8a8a8;"></div>
<div style="left:1680px;top:550.76px;line-height:20px;height:20px;font-size:16px;color:#111;width:34px;text-align:right;">12</div>
<div style="left:1716px;top:550.39px;line-height:20px;height:20px;font-size:8.1px;color:#222;letter-spacing:-0.5px;">pm</div>
<div style="left:1716px;top:571px;width:11px;height:1px;background:#a8a8a8;"></div>
<div style="left:1696px;top:595px;width:31px;height:1px;background:#a8a8a8;"></div>
<div style="left:1680px;top:598.76px;line-height:20px;height:20px;font-size:16px;color:#111;width:34px;text-align:right;">1</div>
<div style="left:1717px;top:598.39px;line-height:20px;height:20px;font-size:8.1px;color:#222;letter-spacing:-0.5px;">00</div>
<div style="left:1716px;top:619px;width:11px;height:1px;background:#a8a8a8;"></div>
<div style="left:1696px;top:643px;width:31px;height:1px;background:#a8a8a8;"></div>
<div style="left:1680px;top:646.76px;line-height:20px;height:20px;font-size:16px;color:#111;width:34px;text-align:right;">2</div>
<div style="left:1717px;top:646.39px;line-height:20px;height:20px;font-size:8.1px;color:#222;letter-spacing:-0.5px;">00</div>
<div style="left:1716px;top:667px;width:11px;height:1px;background:#a8a8a8;"></div>
<div style="left:1696px;top:691px;width:31px;height:1px;background:#a8a8a8;"></div>
<div style="left:1680px;top:694.76px;line-height:20px;height:20px;font-size:16px;color:#111;width:34px;text-align:right;">3</div>
<div style="left:1717px;top:694.39px;line-height:20px;height:20px;font-size:8.1px;color:#222;letter-spacing:-0.5px;">00</div>
<div style="left:1716px;top:715px;width:11px;height:1px;background:#a8a8a8;"></div>
<div style="left:1696px;top:739px;width:31px;height:1px;background:#a8a8a8;"></div>
<div style="left:1680px;top:742.76px;line-height:20px;height:20px;font-size:16px;color:#111;width:34px;text-align:right;">4</div>
<div style="left:1717px;top:742.39px;line-height:20px;height:20px;font-size:8.1px;color:#222;letter-spacing:-0.5px;">00</div>
<div style="left:1716px;top:763px;width:11px;height:1px;background:#a8a8a8;"></div>
<div style="left:1696px;top:787px;width:31px;height:1px;background:#a8a8a8;"></div>
<div style="left:1680px;top:790.76px;line-height:20px;height:20px;font-size:16px;color:#111;width:34px;text-align:right;">5</div>
<div style="left:1717px;top:790.39px;line-height:20px;height:20px;font-size:8.1px;color:#222;letter-spacing:-0.5px;">00</div>
<div style="left:1716px;top:811px;width:11px;height:1px;background:#a8a8a8;"></div>
<div style="left:1696px;top:835px;width:31px;height:1px;background:#a8a8a8;"></div>
<div style="left:1680px;top:838.76px;line-height:20px;height:20px;font-size:16px;color:#111;width:34px;text-align:right;">6</div>
<div style="left:1717px;top:838.39px;line-height:20px;height:20px;font-size:8.1px;color:#222;letter-spacing:-0.5px;">00</div>
<div style="left:1716px;top:859px;width:11px;height:1px;background:#a8a8a8;"></div>
<div style="left:1696px;top:883px;width:31px;height:1px;background:#a8a8a8;"></div>
<div style="left:1680px;top:886.76px;line-height:20px;height:20px;font-size:16px;color:#111;width:34px;text-align:right;">7</div>
<div style="left:1717px;top:886.39px;line-height:20px;height:20px;font-size:8.1px;color:#222;letter-spacing:-0.5px;">00</div>
<div style="left:1716px;top:907px;width:11px;height:1px;background:#a8a8a8;"></div>
<div style="left:1696px;top:931px;width:31px;height:1px;background:#a8a8a8;"></div>
<div style="left:1680px;top:934.76px;line-height:20px;height:20px;font-size:16px;color:#111;width:34px;text-align:right;">8</div>
<div style="left:1717px;top:934.39px;line-height:20px;height:20px;font-size:8.1px;color:#222;letter-spacing:-0.5px;">00</div>
<div style="left:1716px;top:955px;width:11px;height:1px;background:#a8a8a8;"></div>
<div style="left:1696px;top:979px;width:31px;height:1px;background:#a8a8a8;"></div>
<div style="left:1680px;top:982.76px;line-height:20px;height:20px;font-size:16px;color:#111;width:34px;text-align:right;">9</div>
<div style="left:1717px;top:982.39px;line-height:20px;height:20px;font-size:8.1px;color:#222;letter-spacing:-0.5px;">00</div>
<div style="left:1690px;top:520px;width:43px;height:5px;background:linear-gradient(#f0f0f0,#cfcfcf);"></div>
<div style="left:1898px;top:124px;width:20px;height:880px;background:#f0f0f0;"></div>
<div style="left:1899px;top:283px;width:18px;height:614px;background:#cdcdcd;"></div>
<svg style="left:1903px;top:131px" width="9" height="6" viewBox="0 0 9 6"><path d="M0.800 5.200l3.700-3.800 3.700 3.800" fill="none" stroke="#505050" stroke-width="2.100"/></svg>
<svg style="left:1903px;top:991px" width="9" height="6" viewBox="0 0 9 6"><path d="M0.800 0.800l3.700 3.800 3.700-3.800" fill="none" stroke="#505050" stroke-width="2.100"/></svg>
<div style="left:624px;top:445px;width:363px;height:174px;background:#f0f0f0;border:2px solid #2b579a;box-shadow:0 0 0 1px rgba(255,255,255,.75),0 1px 8px 1px rgba(0,0,0,.42);"></div>
<div style="left:626px;top:447px;width:359px;height:30px;background:#2b579a;"></div>
<div style="left:626px;top:450.53px;line-height:20px;height:20px;font-size:12.9px;color:#fff;width:359px;text-align:center;">Potvrdite akciju</div>
<svg style="left:965px;top:455px" width="11" height="11" viewBox="0 0 11 11"><path d="M0.500 0.500l10 10M10.500 0.500l-10 10" stroke="#fff" stroke-width="1.100"/></svg>
<div style="left:642px;top:500px;width:50px;height:50px;border-radius:25px;background:#2b579a;"></div>
<svg style="left:642px;top:500px" width="50" height="50" viewBox="0 0 50 50"><path d="M18.2 20.6C18.2 16 21 13.4 25 13.4C29.2 13.4 32 16 32 19.6C32 24.6 25 24.6 25 30.4V32.6" fill="none" stroke="#f0f0f0" stroke-width="4.8"/><circle cx="25" cy="37.4" r="2.9" fill="#f0f0f0"/></svg>
<div style="left:713px;top:486.60px;line-height:20px;height:20px;font-size:12.7px;color:#000;"><span class="w" style="width:66.44px"><span class="v" style="transform:scaleX(0.915)">POTVRDITE</span></span> <span class="w" style="width:59.35px"><span class="v" style="transform:scaleX(0.915)">PROMENU</span></span> <span class="w" style="width:49.02px"><span class="v" style="transform:scaleX(0.915)">DATUMA</span></span> <span class="w" style="width:45.16px"><span class="v" style="transform:scaleX(0.915)">VALUTE</span></span> <span class="w" style="width:14.84px"><span class="v" style="transform:scaleX(0.915)">ZA</span></span></div>
<div style="left:713px;top:502.60px;line-height:20px;height:20px;font-size:12.7px;color:#000;"><span class="w" style="width:58.06px"><span class="v" style="transform:scaleX(0.915)">OBRAČUN</span></span> 2024-6-1 <span class="w" style="width:16.13px"><span class="v" style="transform:scaleX(0.915)">NA</span></span>: 31.07.2024</div>
<div style="left:627px;top:586px;width:357px;height:30px;background:linear-gradient(#fbfbfb,#f0f0f0 50%,#e4e4e4);border:1px solid #d0d0d0;"></div>
<div style="left:758px;top:586px;width:110px;height:29px;background:#bcdcf4;border:1px solid #2a7ad4;"></div>
<div style="left:752px;top:591.22px;line-height:20px;height:20px;font-size:13.8px;color:#000;width:116px;text-align:center;"><span class="w" style="width:17.94px"><span class="v" style="transform:scaleX(0.9)">OK</span></span></div>
<div style="left:871px;top:586px;width:111px;height:29px;background:#e6e6e6;border:2px solid #666;"></div>
<div style="left:874px;top:589px;width:105px;height:23px;border:1px dotted #222;"></div>
<div style="left:871px;top:591.22px;line-height:20px;height:20px;font-size:13.8px;color:#000;width:111px;text-align:center;">Odustani</div>
<div style="left:750px;top:579px;width:126px;height:45px;border:5px solid #e8192c;"></div>
</body></html>
